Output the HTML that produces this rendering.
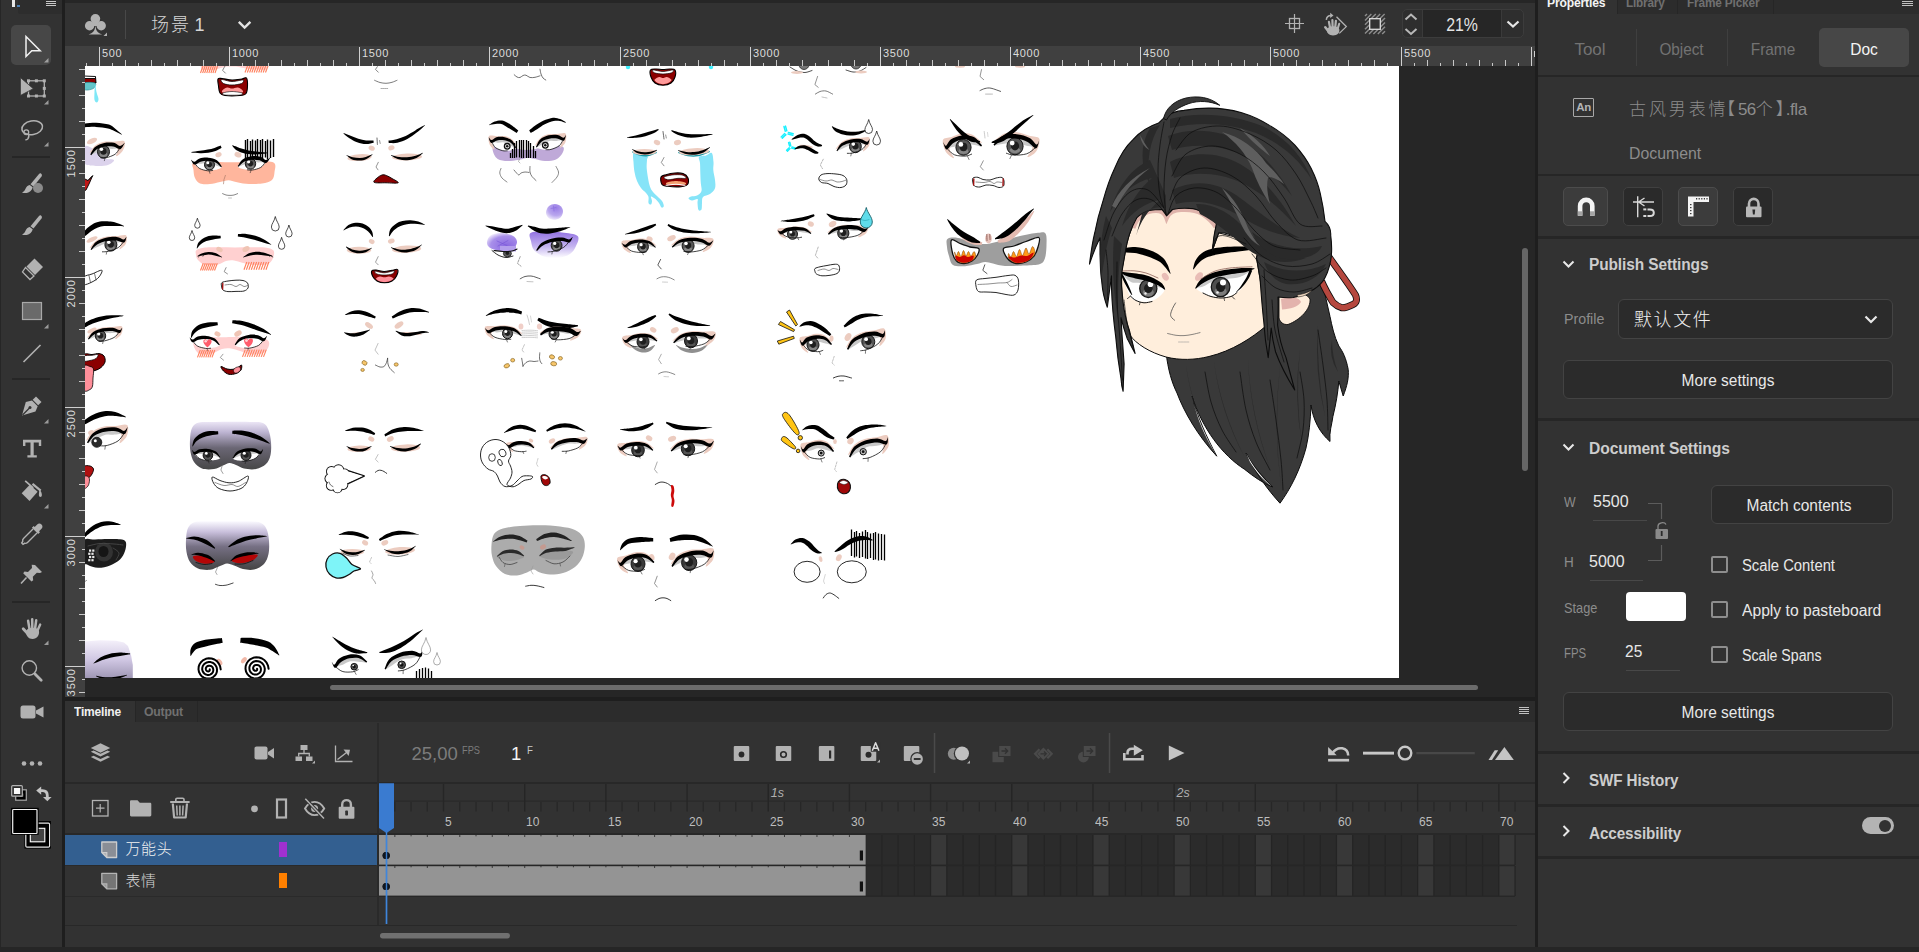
<!DOCTYPE html>
<html lang="en"><head><meta charset="utf-8"><title>Animate</title>
<style>
html,body{margin:0;padding:0;background:#262626;}
body{width:1919px;height:952px;overflow:hidden;position:relative;font-family:"Liberation Sans","Noto Sans CJK SC",sans-serif;color:#cfcfcf;}
.a{position:absolute;}
.t{position:absolute;white-space:nowrap;line-height:1;}
svg{position:absolute;overflow:visible;}
.cj{font-family:"Liberation Sans","Noto Sans CJK SC",sans-serif;font-weight:300;margin-top:1px;}
</style></head><body>
<div class="a" style="left:0;top:0;width:62px;height:947px;background:#323232"></div>
<div class="a" style="left:0;top:0;width:1px;height:947px;background:#262626"></div>
<div class="a" style="left:62px;top:0;width:3px;height:947px;background:#1e1e1e"></div>
<div class="a" style="left:18px;top:0;width:44px;height:14px;background:#2d2d2d;border-bottom-left-radius:2px"></div>
<div class="a" style="left:12px;top:0;width:3px;height:7px;background:#e8e8e8"></div><div class="a" style="left:17px;top:5px;width:3px;height:2px;background:#4a7fb5"></div>
<div class="a" style="left:46px;top:1px;width:10px;height:1px;background:#c8c8c8;box-shadow:0 2px 0 #c8c8c8,0 4px 0 #c8c8c8"></div>
<div class="a" style="left:11px;top:25px;width:40px;height:40px;background:#474747;border-radius:5px"></div>
<div class="a" style="left:12px;top:155.5px;width:38px;height:2px;background:#262626"></div>
<div class="a" style="left:12px;top:378px;width:38px;height:2px;background:#262626"></div>
<div class="a" style="left:12px;top:600.5px;width:38px;height:2px;background:#262626"></div>
<svg width="66" height="952" style="left:0;top:0" viewBox="0 0 66 952" fill="none"><path d="M26 36.5V56.5L31.8 50.8H40.2Z" stroke="#f2f2f2" stroke-width="1.5" stroke-linejoin="miter"/><path d="M48.5 58.0V62.5H44.0Z" fill="#a0a0a0"/><rect x="28.500" y="80.800" width="15.800" height="15.200" stroke="#b2b2b2" stroke-width="1.300"/><rect x="27.0" y="79.3" width="3" height="3" fill="#b2b2b2"/><rect x="34.9" y="79.3" width="3" height="3" fill="#b2b2b2"/><rect x="42.8" y="79.3" width="3" height="3" fill="#b2b2b2"/><rect x="42.8" y="86.9" width="3" height="3" fill="#b2b2b2"/><rect x="42.8" y="94.5" width="3" height="3" fill="#b2b2b2"/><rect x="34.9" y="94.5" width="3" height="3" fill="#b2b2b2"/><rect x="27.0" y="94.5" width="3" height="3" fill="#b2b2b2"/><path d="M20.400 77.500V95.500L33.300 88.700Z" fill="#b2b2b2" stroke="#323232" stroke-width=".8"/><path d="M48.5 100.0V104.5H44.0Z" fill="#9a9a9a"/><ellipse cx="32.200" cy="127.800" rx="10.400" ry="6.800" transform="rotate(-10 32.2 127.8)" stroke="#b2b2b2" stroke-width="1.500"/><circle cx="26.300" cy="132.300" r="2.400" stroke="#b2b2b2" stroke-width="1.300"/><path d="M28.300 133.500c.8 2 .6 4-.4 5.300-.7.800-1.600 1.100-2.600 1.100" stroke="#b2b2b2" stroke-width="1.400"/><path d="M48.5 142.0V146.5H44.0Z" fill="#9a9a9a"/><path d="M41 173.500c1 .8 1.200 1.800 .5 3L33.500 186.500 30.500 184.200 39 174c.7-.8 1.400-.9 2-.5Z" fill="#b2b2b2"/><path d="M29.700 185l3 2.300c-.5 3-3 5.200-6 5.700-1.800.3-3.700 0-4.700-.5 2-.8 2.700-1.800 3.500-3.700.8-1.900 2.200-3.300 4.200-3.800Z" fill="#b2b2b2"/><circle cx="38" cy="188" r="5" fill="#8a8a8a"/><path d="M41 215.500c1 .8 1.200 1.800 .5 3L33.500 228.500 30.500 226.200 39 216c.7-.8 1.400-.9 2-.5Z" fill="#b2b2b2"/><path d="M29.700 227l3 2.300c-.5 3-3 5.200-6 5.700-1.800.3-3.700 0-4.700-.5 2-.8 2.700-1.800 3.500-3.700.8-1.900 2.200-3.300 4.200-3.800Z" fill="#b2b2b2"/><path d="M34.500 258.500L43 267 35 275 26.500 266.500Z" fill="#b2b2b2"/><path d="M25.500 267.500L34 276 30 279.500 22.500 272Z" stroke="#b2b2b2" stroke-width="1.3"/><rect x="22.500" y="302.500" width="19" height="17" fill="#6a6a6a" stroke="#a8a8a8" stroke-width="1.2"/><path d="M48.5 324.0V328.5H44.0Z" fill="#9a9a9a"/><path d="M23.500 362L40.500 345" stroke="#b2b2b2" stroke-width="1.6"/><path d="M36 396.500l5.500 5.500-3.300 3.300-5.500-5.500z" fill="#b2b2b2"/><path d="M32 400.500l5.700 5.700-2.200 5.300-13.500 4 3.800-13.500z" fill="#b2b2b2"/><path d="M22.500 415l7-7" stroke="#323232" stroke-width="1.200"/><circle cx="30" cy="407.500" r="1.500" fill="#323232"/><path d="M48.5 419.0V423.5H44.0Z" fill="#9a9a9a"/><path d="M23 439.800H41.200V446H38.800V442.500H33.700V455.300H36.800V457.600H27.400V455.300H30.500V442.500H25.400V446H23Z" fill="#b2b2b2"/><path d="M29.800 484.800L37.600 491.800 29.500 501 21.700 493.200Z" fill="#b2b2b2"/><path d="M25.200 480.800L33.200 487.800" stroke="#b2b2b2" stroke-width="1.700"/><path d="M32.500 483.800l8.200 6.800" stroke="#b2b2b2" stroke-width="2.200"/><path d="M39.600 489.500c1.500 1.800 2.300 4 2.300 5.600 0 1.200-.7 1.900-1.500 1.900s-1.500-.7-1.500-1.900c0-1.500.2-3.600.7-5.600z" fill="#b2b2b2"/><path d="M48.5 504.0V508.5H44.0Z" fill="#9a9a9a"/><path d="M41.500 524.500c1.300 1.300 1.300 3 0 4.300l-2.500 2.500 1 1-1.800 1.800-6.300-6.300 1.800-1.800 1 1 2.500-2.500c1.300-1.300 3-1.300 4.300 0z" fill="#b2b2b2"/><path d="M33 529l-9.500 9.500c-.8.800-1 2-.8 3l-1 1.500 1.300 1.300 1.500-1c1 .2 2.200 0 3-.8L37 533" stroke="#b2b2b2" stroke-width="1.400"/><path d="M32.500 565l7 7-2 1-3.200 -.3-4 4 .4 3.500-1.700 1.300-8.300-8.300 1.300-1.700 3.500.4 4-4-.3-3.200z" fill="#b2b2b2" transform="translate(2.500,0)"/><path d="M26.500 577.500l-5.500 6" stroke="#b2b2b2" stroke-width="1.600"/><path d="M26 631.500C26.500 627 38 626 39 631C39.600 635 37 639 32.500 639C28.500 639 25.800 635.500 26 631.500Z" fill="#b2b2b2"/><path d="M29.5 629L28.1 620.8" stroke="#b2b2b2" stroke-width="2.5" stroke-linecap="round"/><path d="M32.3 628.5L32.2 619.2" stroke="#b2b2b2" stroke-width="2.5" stroke-linecap="round"/><path d="M35 629L36.2 620.3" stroke="#b2b2b2" stroke-width="2.5" stroke-linecap="round"/><path d="M37.3 631L40.2 624.5" stroke="#b2b2b2" stroke-width="2.4" stroke-linecap="round"/><path d="M28 634L23.2 628.8" stroke="#b2b2b2" stroke-width="2.8" stroke-linecap="round"/><path d="M48.5 640.5V645H44.0Z" fill="#9a9a9a"/><circle cx="29.300" cy="668" r="7.200" stroke="#b2b2b2" stroke-width="1.400"/><path d="M35 674.100l6.200 6.200" stroke="#b2b2b2" stroke-width="2.800" stroke-linecap="round"/><rect x="20.500" y="705.500" width="15" height="13" rx="2.500" fill="#b2b2b2"/><path d="M36 710.500l7.500-4v11l-7.500-4z" fill="#b2b2b2"/><circle cx="24" cy="763.500" r="2.300" fill="#b2b2b2"/><circle cx="32" cy="763.500" r="2.300" fill="#b2b2b2"/><circle cx="40" cy="763.500" r="2.300" fill="#b2b2b2"/><rect x="15.700" y="789.800" width="10.600" height="10.400" fill="#000" stroke="#a8a8a8" stroke-width="1.200"/><path d="M19.500 796.500h3.300v-3" stroke="#888" stroke-width=".9"/><rect x="11.700" y="785.600" width="10.600" height="10.600" rx="1" fill="#2a2a2a" stroke="#b4b4b4" stroke-width="1.200"/><rect x="13.900" y="788" width="6.300" height="6" fill="#fafafa"/><path d="M40 790.600h2.500c3 0 4.800 2 4.800 5v2.500" stroke="#c4c4c4" stroke-width="2.800"/><path d="M41.200 786.500v8.200l-5-4.100z" fill="#c4c4c4"/><path d="M43 797h8.600l-4.300 4.200z" fill="#c4c4c4"/><rect x="24.400" y="821" width="26.500" height="27.600" fill="#000"/><rect x="25.800" y="823.200" width="23.800" height="24" rx="1.200" fill="none" stroke="#e6e6e6" stroke-width="1.200"/><rect x="30.300" y="828.300" width="14.500" height="13.500" fill="#444" stroke="#fff" stroke-width="1.100"/><rect x="11.100" y="807.800" width="27.600" height="27" fill="#000"/><rect x="12.700" y="809.500" width="24.300" height="24" rx=".8" fill="#000" stroke="#f2f2f2" stroke-width="1.200"/></svg><div class="a" style="left:65px;top:0;width:1470px;height:3px;background:#262626"></div>
<div class="a" style="left:65px;top:3px;width:1470px;height:43px;background:#323232"></div>
<div class="a" style="left:65px;top:46px;width:1470px;height:20px;background:#404040"></div>
<div class="a" style="left:65px;top:46px;width:20px;height:651px;background:#404040"></div>
<div class="a" style="left:85px;top:66px;width:1450px;height:631px;background:#262626"></div>
<div class="a" style="left:85px;top:66px;width:1313.500px;height:611.500px;background:#fff"></div>
<div class="a" style="left:1535px;top:0;width:3px;height:947px;background:#1e1e1e"></div>
<div class="a" style="left:65px;top:697px;width:1470px;height:3px;background:#1e1e1e"></div>
<div class="a" style="left:330px;top:685px;width:1148px;height:5px;background:#6b6b6b;border-radius:3px"></div>
<div class="a" style="left:1522px;top:248px;width:6px;height:223px;background:#666;border-radius:3px"></div>
<div class="a" style="left:125px;top:10px;width:1px;height:29px;background:#484848"></div>
<div class="t cj" style="left:151px;top:14.500px;font-size:18px;color:#d6d6d6;letter-spacing:2px;word-spacing:-3.500px">场景 1</div>
<div class="a" style="left:1402px;top:9px;width:122px;height:29px;border:1px solid #3c3c3c;border-radius:5px;box-sizing:border-box;background:#2e2e2e"></div>
<div class="a" style="left:1422px;top:10px;width:80px;height:27px;background:#262626;border-left:1px solid #3a3a3a;border-right:1px solid #3a3a3a;box-sizing:border-box"></div>
<div class="t" style="left:1422px;top:16px;width:80px;text-align:center;font-size:18px;color:#e4e4e4;transform:scaleX(.88)">21%</div>
<svg width="1470" height="46" viewBox="65 0 1470 46" style="left:65px;top:0" fill="none"><circle cx="95.400" cy="18.800" r="4.800" fill="#b2b2b2"/><circle cx="89.600" cy="25.700" r="4.700" fill="#b2b2b2"/><circle cx="101.200" cy="25.700" r="4.700" fill="#b2b2b2"/><path d="M93 21.500h4.800l1 4.500h-6.800z" fill="#b2b2b2"/><path d="M95.400 25c.3 5 1.600 7.800 6.800 9.500h-13.600C93.800 32.800 95.100 30 95.400 25z" fill="#b2b2b2"/><path d="M107 32.500v3.500h-3.500z" fill="#b0b0b0"/><path d="M238.800 21.800l5.800 5.800 5.800-5.800" stroke="#e4e4e4" stroke-width="2.400"/><rect x="1289.500" y="18.500" width="10" height="10" stroke="#b2b2b2" stroke-width="1.300"/><path d="M1294.500 14v19M1285 23.500h19" stroke="#b2b2b2" stroke-width="1.200"/><path d="M1326.800 30C1327.300 25.500 1338.500 25 1339.300 29.500C1339.800 33 1337.300 35.400 1333 35.400C1329.200 35.400 1326.600 33 1326.800 30Z" fill="#b2b2b2"/><path d="M1330 27.5L1328.9 21.8" stroke="#b2b2b2" stroke-width="2.2" stroke-linecap="round"/><path d="M1332.6 27L1332.4 20" stroke="#b2b2b2" stroke-width="2.2" stroke-linecap="round"/><path d="M1335.2 27.5L1335.9 20.8" stroke="#b2b2b2" stroke-width="2.2" stroke-linecap="round"/><path d="M1337.6 29L1339.2 23.8" stroke="#b2b2b2" stroke-width="2.1" stroke-linecap="round"/><path d="M1329 32L1325.3 27.2" stroke="#b2b2b2" stroke-width="2.5" stroke-linecap="round"/><path d="M1336.500 16.800l9.800 9.800-7 6.800" stroke="#b2b2b2" stroke-width="1.300"/><path d="M1326.300 19.800c.3-2.800 2.200-4.300 4.800-4.300" stroke="#b2b2b2" stroke-width="1.500"/><path d="M1330.200 12.800l3.300 2.600-3.300 2.600z" fill="#b2b2b2"/><path d="M1365.0 16.0L1367.0 14.0" stroke="#8e8e8e" stroke-width="1.400"/><path d="M1365.0 20.4L1371.4 14.0" stroke="#8e8e8e" stroke-width="1.400"/><path d="M1365.0 24.8L1375.8 14.0" stroke="#8e8e8e" stroke-width="1.400"/><path d="M1365.0 29.2L1380.2 14.0" stroke="#8e8e8e" stroke-width="1.400"/><path d="M1365.0 33.6L1384.6 14.0" stroke="#8e8e8e" stroke-width="1.400"/><path d="M1369.0 34.0L1385.0 18.0" stroke="#8e8e8e" stroke-width="1.400"/><path d="M1373.4 34.0L1385.0 22.4" stroke="#8e8e8e" stroke-width="1.400"/><path d="M1377.8 34.0L1385.0 26.8" stroke="#8e8e8e" stroke-width="1.400"/><path d="M1382.2 34.0L1385.0 31.2" stroke="#8e8e8e" stroke-width="1.400"/><rect x="1369.700" y="18.700" width="10.600" height="10.600" fill="#323232" stroke="#dcdcdc" stroke-width="1.300"/><path d="M1405.500 19.500l5.500-5 5.500 5M1405.500 29l5.500 5 5.500-5" stroke="#b8b8b8" stroke-width="2"/><path d="M1507.500 21.500l5.500 5 5.500-5" stroke="#e6e6e6" stroke-width="2.200"/></svg>
<svg width="1470" height="651" viewBox="65 46 1470 651" style="left:65px;top:46px" shape-rendering="crispEdges"><rect x="86" y="63" width="1" height="3" fill="#c8c8c8"/><rect x="99" y="47" width="1" height="19" fill="#d0d0d0"/><rect x="112" y="63" width="1" height="3" fill="#c8c8c8"/><rect x="125" y="60" width="1" height="6" fill="#c8c8c8"/><rect x="138" y="63" width="1" height="3" fill="#c8c8c8"/><rect x="151" y="60" width="1" height="6" fill="#c8c8c8"/><rect x="164" y="63" width="1" height="3" fill="#c8c8c8"/><rect x="177" y="60" width="1" height="6" fill="#c8c8c8"/><rect x="190" y="63" width="1" height="3" fill="#c8c8c8"/><rect x="203" y="60" width="1" height="6" fill="#c8c8c8"/><rect x="216" y="63" width="1" height="3" fill="#c8c8c8"/><rect x="229" y="47" width="1" height="19" fill="#d0d0d0"/><rect x="242" y="63" width="1" height="3" fill="#c8c8c8"/><rect x="255" y="60" width="1" height="6" fill="#c8c8c8"/><rect x="268" y="63" width="1" height="3" fill="#c8c8c8"/><rect x="281" y="60" width="1" height="6" fill="#c8c8c8"/><rect x="294" y="63" width="1" height="3" fill="#c8c8c8"/><rect x="307" y="60" width="1" height="6" fill="#c8c8c8"/><rect x="320" y="63" width="1" height="3" fill="#c8c8c8"/><rect x="333" y="60" width="1" height="6" fill="#c8c8c8"/><rect x="346" y="63" width="1" height="3" fill="#c8c8c8"/><rect x="359" y="47" width="1" height="19" fill="#d0d0d0"/><rect x="372" y="63" width="1" height="3" fill="#c8c8c8"/><rect x="385" y="60" width="1" height="6" fill="#c8c8c8"/><rect x="398" y="63" width="1" height="3" fill="#c8c8c8"/><rect x="411" y="60" width="1" height="6" fill="#c8c8c8"/><rect x="424" y="63" width="1" height="3" fill="#c8c8c8"/><rect x="437" y="60" width="1" height="6" fill="#c8c8c8"/><rect x="450" y="63" width="1" height="3" fill="#c8c8c8"/><rect x="463" y="60" width="1" height="6" fill="#c8c8c8"/><rect x="476" y="63" width="1" height="3" fill="#c8c8c8"/><rect x="489" y="47" width="1" height="19" fill="#d0d0d0"/><rect x="502" y="63" width="1" height="3" fill="#c8c8c8"/><rect x="515" y="60" width="1" height="6" fill="#c8c8c8"/><rect x="528" y="63" width="1" height="3" fill="#c8c8c8"/><rect x="542" y="60" width="1" height="6" fill="#c8c8c8"/><rect x="555" y="63" width="1" height="3" fill="#c8c8c8"/><rect x="568" y="60" width="1" height="6" fill="#c8c8c8"/><rect x="581" y="63" width="1" height="3" fill="#c8c8c8"/><rect x="594" y="60" width="1" height="6" fill="#c8c8c8"/><rect x="607" y="63" width="1" height="3" fill="#c8c8c8"/><rect x="620" y="47" width="1" height="19" fill="#d0d0d0"/><rect x="633" y="63" width="1" height="3" fill="#c8c8c8"/><rect x="646" y="60" width="1" height="6" fill="#c8c8c8"/><rect x="659" y="63" width="1" height="3" fill="#c8c8c8"/><rect x="672" y="60" width="1" height="6" fill="#c8c8c8"/><rect x="685" y="63" width="1" height="3" fill="#c8c8c8"/><rect x="698" y="60" width="1" height="6" fill="#c8c8c8"/><rect x="711" y="63" width="1" height="3" fill="#c8c8c8"/><rect x="724" y="60" width="1" height="6" fill="#c8c8c8"/><rect x="737" y="63" width="1" height="3" fill="#c8c8c8"/><rect x="750" y="47" width="1" height="19" fill="#d0d0d0"/><rect x="763" y="63" width="1" height="3" fill="#c8c8c8"/><rect x="776" y="60" width="1" height="6" fill="#c8c8c8"/><rect x="789" y="63" width="1" height="3" fill="#c8c8c8"/><rect x="802" y="60" width="1" height="6" fill="#c8c8c8"/><rect x="815" y="63" width="1" height="3" fill="#c8c8c8"/><rect x="828" y="60" width="1" height="6" fill="#c8c8c8"/><rect x="841" y="63" width="1" height="3" fill="#c8c8c8"/><rect x="854" y="60" width="1" height="6" fill="#c8c8c8"/><rect x="867" y="63" width="1" height="3" fill="#c8c8c8"/><rect x="880" y="47" width="1" height="19" fill="#d0d0d0"/><rect x="893" y="63" width="1" height="3" fill="#c8c8c8"/><rect x="906" y="60" width="1" height="6" fill="#c8c8c8"/><rect x="919" y="63" width="1" height="3" fill="#c8c8c8"/><rect x="932" y="60" width="1" height="6" fill="#c8c8c8"/><rect x="945" y="63" width="1" height="3" fill="#c8c8c8"/><rect x="958" y="60" width="1" height="6" fill="#c8c8c8"/><rect x="971" y="63" width="1" height="3" fill="#c8c8c8"/><rect x="984" y="60" width="1" height="6" fill="#c8c8c8"/><rect x="997" y="63" width="1" height="3" fill="#c8c8c8"/><rect x="1010" y="47" width="1" height="19" fill="#d0d0d0"/><rect x="1023" y="63" width="1" height="3" fill="#c8c8c8"/><rect x="1036" y="60" width="1" height="6" fill="#c8c8c8"/><rect x="1049" y="63" width="1" height="3" fill="#c8c8c8"/><rect x="1062" y="60" width="1" height="6" fill="#c8c8c8"/><rect x="1075" y="63" width="1" height="3" fill="#c8c8c8"/><rect x="1088" y="60" width="1" height="6" fill="#c8c8c8"/><rect x="1101" y="63" width="1" height="3" fill="#c8c8c8"/><rect x="1114" y="60" width="1" height="6" fill="#c8c8c8"/><rect x="1127" y="63" width="1" height="3" fill="#c8c8c8"/><rect x="1140" y="47" width="1" height="19" fill="#d0d0d0"/><rect x="1153" y="63" width="1" height="3" fill="#c8c8c8"/><rect x="1166" y="60" width="1" height="6" fill="#c8c8c8"/><rect x="1179" y="63" width="1" height="3" fill="#c8c8c8"/><rect x="1192" y="60" width="1" height="6" fill="#c8c8c8"/><rect x="1205" y="63" width="1" height="3" fill="#c8c8c8"/><rect x="1218" y="60" width="1" height="6" fill="#c8c8c8"/><rect x="1231" y="63" width="1" height="3" fill="#c8c8c8"/><rect x="1244" y="60" width="1" height="6" fill="#c8c8c8"/><rect x="1257" y="63" width="1" height="3" fill="#c8c8c8"/><rect x="1270" y="47" width="1" height="19" fill="#d0d0d0"/><rect x="1283" y="63" width="1" height="3" fill="#c8c8c8"/><rect x="1296" y="60" width="1" height="6" fill="#c8c8c8"/><rect x="1309" y="63" width="1" height="3" fill="#c8c8c8"/><rect x="1322" y="60" width="1" height="6" fill="#c8c8c8"/><rect x="1335" y="63" width="1" height="3" fill="#c8c8c8"/><rect x="1348" y="60" width="1" height="6" fill="#c8c8c8"/><rect x="1361" y="63" width="1" height="3" fill="#c8c8c8"/><rect x="1374" y="60" width="1" height="6" fill="#c8c8c8"/><rect x="1387" y="63" width="1" height="3" fill="#c8c8c8"/><rect x="1401" y="47" width="1" height="19" fill="#d0d0d0"/><rect x="1414" y="63" width="1" height="3" fill="#c8c8c8"/><rect x="1427" y="60" width="1" height="6" fill="#c8c8c8"/><rect x="1440" y="63" width="1" height="3" fill="#c8c8c8"/><rect x="1453" y="60" width="1" height="6" fill="#c8c8c8"/><rect x="1466" y="63" width="1" height="3" fill="#c8c8c8"/><rect x="1479" y="60" width="1" height="6" fill="#c8c8c8"/><rect x="1492" y="63" width="1" height="3" fill="#c8c8c8"/><rect x="1505" y="60" width="1" height="6" fill="#c8c8c8"/><rect x="1518" y="63" width="1" height="3" fill="#c8c8c8"/><rect x="1531" y="47" width="1" height="19" fill="#d0d0d0"/><rect x="79" y="69" width="6" height="1" fill="#c8c8c8"/><rect x="82" y="82" width="3" height="1" fill="#c8c8c8"/><rect x="79" y="95" width="6" height="1" fill="#c8c8c8"/><rect x="82" y="108" width="3" height="1" fill="#c8c8c8"/><rect x="79" y="121" width="6" height="1" fill="#c8c8c8"/><rect x="82" y="134" width="3" height="1" fill="#c8c8c8"/><rect x="65" y="147" width="20" height="1" fill="#d0d0d0"/><rect x="82" y="160" width="3" height="1" fill="#c8c8c8"/><rect x="79" y="173" width="6" height="1" fill="#c8c8c8"/><rect x="82" y="186" width="3" height="1" fill="#c8c8c8"/><rect x="79" y="199" width="6" height="1" fill="#c8c8c8"/><rect x="82" y="212" width="3" height="1" fill="#c8c8c8"/><rect x="79" y="225" width="6" height="1" fill="#c8c8c8"/><rect x="82" y="238" width="3" height="1" fill="#c8c8c8"/><rect x="79" y="251" width="6" height="1" fill="#c8c8c8"/><rect x="82" y="264" width="3" height="1" fill="#c8c8c8"/><rect x="65" y="277" width="20" height="1" fill="#d0d0d0"/><rect x="82" y="290" width="3" height="1" fill="#c8c8c8"/><rect x="79" y="303" width="6" height="1" fill="#c8c8c8"/><rect x="82" y="316" width="3" height="1" fill="#c8c8c8"/><rect x="79" y="329" width="6" height="1" fill="#c8c8c8"/><rect x="82" y="342" width="3" height="1" fill="#c8c8c8"/><rect x="79" y="355" width="6" height="1" fill="#c8c8c8"/><rect x="82" y="368" width="3" height="1" fill="#c8c8c8"/><rect x="79" y="381" width="6" height="1" fill="#c8c8c8"/><rect x="82" y="394" width="3" height="1" fill="#c8c8c8"/><rect x="65" y="407" width="20" height="1" fill="#d0d0d0"/><rect x="82" y="419" width="3" height="1" fill="#c8c8c8"/><rect x="79" y="432" width="6" height="1" fill="#c8c8c8"/><rect x="82" y="445" width="3" height="1" fill="#c8c8c8"/><rect x="79" y="458" width="6" height="1" fill="#c8c8c8"/><rect x="82" y="471" width="3" height="1" fill="#c8c8c8"/><rect x="79" y="484" width="6" height="1" fill="#c8c8c8"/><rect x="82" y="497" width="3" height="1" fill="#c8c8c8"/><rect x="79" y="510" width="6" height="1" fill="#c8c8c8"/><rect x="82" y="523" width="3" height="1" fill="#c8c8c8"/><rect x="65" y="536" width="20" height="1" fill="#d0d0d0"/><rect x="82" y="549" width="3" height="1" fill="#c8c8c8"/><rect x="79" y="562" width="6" height="1" fill="#c8c8c8"/><rect x="82" y="575" width="3" height="1" fill="#c8c8c8"/><rect x="79" y="588" width="6" height="1" fill="#c8c8c8"/><rect x="82" y="601" width="3" height="1" fill="#c8c8c8"/><rect x="79" y="614" width="6" height="1" fill="#c8c8c8"/><rect x="82" y="627" width="3" height="1" fill="#c8c8c8"/><rect x="79" y="640" width="6" height="1" fill="#c8c8c8"/><rect x="82" y="653" width="3" height="1" fill="#c8c8c8"/><rect x="65" y="666" width="20" height="1" fill="#d0d0d0"/><rect x="82" y="679" width="3" height="1" fill="#c8c8c8"/><rect x="79" y="692" width="6" height="1" fill="#c8c8c8"/><rect x="1534" y="51" width="1" height="6" fill="#d0d0d0"/></svg>
<div class="t" style="left:102px;top:48px;font-size:11px;color:#dcdcdc;letter-spacing:.6px">500</div>
<div class="t" style="left:232px;top:48px;font-size:11px;color:#dcdcdc;letter-spacing:.6px">1000</div>
<div class="t" style="left:362px;top:48px;font-size:11px;color:#dcdcdc;letter-spacing:.6px">1500</div>
<div class="t" style="left:492px;top:48px;font-size:11px;color:#dcdcdc;letter-spacing:.6px">2000</div>
<div class="t" style="left:623px;top:48px;font-size:11px;color:#dcdcdc;letter-spacing:.6px">2500</div>
<div class="t" style="left:753px;top:48px;font-size:11px;color:#dcdcdc;letter-spacing:.6px">3000</div>
<div class="t" style="left:883px;top:48px;font-size:11px;color:#dcdcdc;letter-spacing:.6px">3500</div>
<div class="t" style="left:1013px;top:48px;font-size:11px;color:#dcdcdc;letter-spacing:.6px">4000</div>
<div class="t" style="left:1143px;top:48px;font-size:11px;color:#dcdcdc;letter-spacing:.6px">4500</div>
<div class="t" style="left:1273px;top:48px;font-size:11px;color:#dcdcdc;letter-spacing:.6px">5000</div>
<div class="t" style="left:1404px;top:48px;font-size:11px;color:#dcdcdc;letter-spacing:.6px">5500</div>
<div class="t" style="left:66px;top:148.5px;font-size:11px;color:#dcdcdc;letter-spacing:1px;transform-origin:0 0;transform:rotate(-90deg) translate(-100%,0)">1500</div>
<div class="t" style="left:66px;top:278.5px;font-size:11px;color:#dcdcdc;letter-spacing:1px;transform-origin:0 0;transform:rotate(-90deg) translate(-100%,0)">2000</div>
<div class="t" style="left:66px;top:408.5px;font-size:11px;color:#dcdcdc;letter-spacing:1px;transform-origin:0 0;transform:rotate(-90deg) translate(-100%,0)">2500</div>
<div class="t" style="left:66px;top:537.5px;font-size:11px;color:#dcdcdc;letter-spacing:1px;transform-origin:0 0;transform:rotate(-90deg) translate(-100%,0)">3000</div>
<div class="t" style="left:66px;top:667.5px;font-size:11px;color:#dcdcdc;letter-spacing:1px;transform-origin:0 0;transform:rotate(-90deg) translate(-100%,0)">3500</div><svg width="1313.500" height="611.500" viewBox="85 66 1313.500 611.500" style="left:85px;top:66px;overflow:hidden" fill="none">
<path d="M84 76.5L95.5 77L96 83L84 83Z" fill="#8b0000" stroke="#000" stroke-width="1" stroke-linejoin="round"/><path d="M84 76L95.5 76.5L95.5 78.5L84 78.5Z" fill="#fff" stroke="#000" stroke-width="0.9" stroke-linejoin="round"/><path d="M84 83C85.8 82 93.3 82.2 95 83C96.7 83.8 95.2 86.8 94 88C92.8 89.2 89.7 89.8 88 90C86.3 90.2 84.7 90.2 84 89C83.3 87.8 82.2 84 84 83Z" fill="#63c5c9" stroke="#2a8a8f" stroke-width="0.6" stroke-linejoin="round"/><path d="M95.2 84C95.5 84 96 89.5 96.5 92C97 94.5 98.4 97.2 98.5 99C98.6 100.8 97.7 102.3 97 102.5C96.3 102.7 94.9 101.8 94.5 100C94.1 98.2 94.4 94.7 94.5 92C94.6 89.3 94.9 84 95.2 84Z" fill="#7fe8f7"/><path d="M198 60L270 60L266 70L248 69L236 66.5L226 66.5L214 70L202 70Z" fill="#ffd3d3"/><path d="M203 66L200.5 73" stroke="#ff7f5c" stroke-width="1.1"/><path d="M205.1 66L202.6 73" stroke="#ff7f5c" stroke-width="1.1"/><path d="M207.1 66L204.6 73" stroke="#ff7f5c" stroke-width="1.1"/><path d="M209.2 66L206.7 73" stroke="#ff7f5c" stroke-width="1.1"/><path d="M211.3 66L208.8 73" stroke="#ff7f5c" stroke-width="1.1"/><path d="M213.4 66L210.9 73" stroke="#ff7f5c" stroke-width="1.1"/><path d="M215.4 66L212.9 73" stroke="#ff7f5c" stroke-width="1.1"/><path d="M217.5 66L215 73" stroke="#ff7f5c" stroke-width="1.1"/><path d="M247.5 66L245 72.5" stroke="#ff7f5c" stroke-width="1.1"/><path d="M249.8 66L247.3 72.5" stroke="#ff7f5c" stroke-width="1.1"/><path d="M252.1 66L249.6 72.5" stroke="#ff7f5c" stroke-width="1.1"/><path d="M254.3 66L251.8 72.5" stroke="#ff7f5c" stroke-width="1.1"/><path d="M256.6 66L254.1 72.5" stroke="#ff7f5c" stroke-width="1.1"/><path d="M258.9 66L256.4 72.5" stroke="#ff7f5c" stroke-width="1.1"/><path d="M261.2 66L258.7 72.5" stroke="#ff7f5c" stroke-width="1.1"/><path d="M263.4 66L260.9 72.5" stroke="#ff7f5c" stroke-width="1.1"/><path d="M265.7 66L263.2 72.5" stroke="#ff7f5c" stroke-width="1.1"/><path d="M268 66L265.5 72.5" stroke="#ff7f5c" stroke-width="1.1"/><path d="M225 66L222.6 70.3L225.4 73.1" stroke="#555" stroke-width="0.7" stroke-linecap="round" stroke-linejoin="round" fill="none"/><path d="M218 79C218.6 77.8 219.7 78.3 222 78.5C224.3 78.7 228.7 79.9 232 80C235.3 80.1 239.6 79.3 242 79C244.4 78.7 245.6 76.8 246.5 78C247.4 79.2 247.6 83.4 247.5 86C247.4 88.6 247.2 91.9 246 93.5C244.8 95.1 243.5 95.2 240 95.5C236.5 95.8 228.3 95.9 225 95.5C221.7 95.1 221.1 94.6 220 93C218.9 91.4 218.8 88.3 218.5 86C218.2 83.7 217.4 80.2 218 79Z" fill="#8b0000" stroke="#000" stroke-width="1.1" stroke-linejoin="round"/><path d="M221.5 79.5C222.9 79.2 228.4 81.4 232 81.5C235.6 81.6 241.4 79.7 243 80C244.6 80.3 243.3 82.7 241.5 83.5C239.7 84.3 235 85 232 85C229 85 225.2 84.4 223.5 83.5C221.8 82.6 220.1 79.8 221.5 79.5Z" fill="#fff" stroke="#000" stroke-width="0.7" stroke-linejoin="round"/><path d="M222 91C222.3 90.1 225.3 87.9 227 87.5C228.7 87.1 230.2 88.5 232 88.5C233.8 88.5 236.2 87.1 238 87.5C239.8 87.9 242.7 90.1 243 91C243.3 91.9 243 92.7 240 93C237 93.3 228 93.3 225 93C222 92.7 221.7 91.9 222 91Z" fill="#ff9a9a"/><path d="M223 93C224.2 92.4 228.8 91.5 232 91.5C235.2 91.5 240.7 92.4 242 93C243.3 93.6 242.8 94.7 240 95C237.2 95.3 227.8 95.3 225 95C222.2 94.7 221.8 93.6 223 93Z" fill="#fff" stroke="#000" stroke-width="0.6" stroke-linejoin="round"/><path d="M377.4 66.6L375.5 69.4L378.3 72.2" stroke="#555" stroke-width="0.7" stroke-linecap="round" stroke-linejoin="round" fill="none"/><path d="M374.6 80.3C375.5 80.7 378.1 82 380 82.5C381.9 83 384 83.3 386 83.3C388 83.3 390.2 82.8 392 82.3C393.8 81.8 396.2 80.6 397 80.3" stroke="#444" stroke-width="0.7" stroke-linecap="round" fill="none"/><path d="M381 88.5C382.1 88.5 386.6 88.5 387.7 88.5" stroke="#888" stroke-width="0.7" stroke-linecap="round" fill="none"/><path d="M514.2 74.7C514.7 75.1 516 76.5 517 77C518 77.5 519 77.8 520 77.5C521 77.2 522 75.9 523 75.5C524 75.1 524.8 74.9 526 75.2C527.2 75.5 528.5 77.2 530 77.5C531.5 77.8 533.3 77.6 535 77.3C536.7 77 539.2 76 540 75.8" stroke="#333" stroke-width="0.7" stroke-linecap="round" fill="none"/><path d="M540 69.2C540.2 70 540.5 72.5 541 74C541.5 75.5 542.2 77 543 78C543.8 79 545.3 79.7 545.8 80" stroke="#333" stroke-width="0.7" stroke-linecap="round" fill="none"/><ellipse cx="628" cy="67" rx="2.2" ry="2.2" fill="#3ff0ff"/><ellipse cx="711" cy="67" rx="2.2" ry="2.2" fill="#3ff0ff"/><path d="M650.5 70C651.3 68.7 653.9 69.1 656 69C658.1 68.9 660.7 69.5 663 69.5C665.3 69.5 668 68.9 670 69C672 69.1 674.2 68.7 675 70C675.8 71.3 675.7 74.8 675 77C674.3 79.2 673 81.6 671 83C669 84.4 665.7 85.2 663 85.2C660.3 85.2 657 84.4 655 83C653 81.6 651.8 79.2 651 77C650.2 74.8 649.7 71.3 650.5 70Z" fill="#8b0000" stroke="#000" stroke-width="1.1" stroke-linejoin="round"/><path d="M653 70C654.4 69.8 659.7 71.5 663 71.5C666.3 71.5 671.6 69.8 673 70C674.4 70.2 673.2 72.1 671.5 72.8C669.8 73.5 665.8 74 663 74C660.2 74 656.2 73.5 654.5 72.8C652.8 72.1 651.6 70.2 653 70Z" fill="#fff" stroke="#000" stroke-width="0.6" stroke-linejoin="round"/><path d="M654.5 80C654.7 79 657.6 77.3 659 77C660.4 76.7 661.7 78 663 78C664.3 78 665.6 76.7 667 77C668.4 77.3 671.3 79 671.5 80C671.7 81 669.4 82.3 668 83C666.6 83.7 664.7 84.2 663 84.2C661.3 84.2 659.4 83.7 658 83C656.6 82.3 654.3 81 654.5 80Z" fill="#ff9a9a"/><ellipse cx="804" cy="64.5" rx="5" ry="5" fill="#777" stroke="#222" stroke-width="0.8"/><ellipse cx="856" cy="64" rx="5" ry="5" fill="#777" stroke="#222" stroke-width="0.8"/><path d="M790 67C791.2 67.7 794.5 70.1 797 71C799.5 71.9 802.5 72.6 805 72.5C807.5 72.4 810.8 70.8 812 70.5" stroke="#222" stroke-width="0.8" stroke-linecap="round" fill="none"/><path d="M846 70C847.2 70.3 850.7 71.8 853 72C855.3 72.2 857.8 71.8 860 71C862.2 70.2 865 68.1 866 67.5" stroke="#222" stroke-width="0.8" stroke-linecap="round" fill="none"/><ellipse cx="797" cy="72.5" rx="6" ry="1.5" fill="#ecccc0"/><ellipse cx="861" cy="72" rx="6" ry="1.5" fill="#ecccc0"/><path d="M817.6 76.4L814.9 84.6L818.2 87.3" stroke="#666" stroke-width="0.7" stroke-linecap="round" stroke-linejoin="round" fill="none"/><path d="M815.4 94.1C816.2 93.7 818.2 92 820 91.5C821.8 91 823.9 90.6 826 91C828.1 91.4 831.5 93.6 832.6 94.1" stroke="#444" stroke-width="0.7" stroke-linecap="round" fill="none"/><path d="M822 97C822.8 97.2 826.2 97.8 827 98" stroke="#999" stroke-width="0.6" stroke-linecap="round" fill="none"/><ellipse cx="960" cy="66.5" rx="5" ry="1.2" fill="#ecccc0"/><ellipse cx="1020" cy="66.5" rx="5" ry="1.2" fill="#ecccc0"/><path d="M981.5 69.6L980 76.4L983.7 79.7" stroke="#666" stroke-width="0.7" stroke-linecap="round" stroke-linejoin="round" fill="none"/><path d="M980 90.6C980.8 90.2 983.2 88.9 985 88.5C986.8 88.1 988.4 87.7 991 88.2C993.6 88.7 999 90.9 1000.6 91.4" stroke="#333" stroke-width="0.8" stroke-linecap="round" fill="none"/><path d="M985.6 94.1C986.7 94.1 991.3 94.1 992.4 94.1" stroke="#888" stroke-width="0.6" stroke-linecap="round" fill="none"/><path d="M84 147C85.3 144.5 88.7 146.2 92 148C95.3 149.8 100.3 156 104 158C107.7 160 113.3 158.8 114 160C114.7 161.2 111 164 108 165C105 166 100 166.3 96 166C92 165.7 86 166.2 84 163C82 159.8 82.7 149.5 84 147Z" fill="#dcd3ec"/><path d="M83.9 123.7C85.9 123.5 91.9 122.6 96.1 122.7C100.3 122.9 105.8 123.6 109 124.6C112.3 125.7 113.4 127.4 115.6 129.1C117.7 130.7 120.8 133.5 121.8 134.3L121.6 134.7C120.4 134 116.7 132 114.4 130.9C112.2 129.9 111.1 129.1 108 128.4C104.9 127.7 99.9 127 95.9 126.9C91.9 126.7 86.1 127.3 84.1 127.3Z" fill="#000"/><ellipse cx="92" cy="141" rx="5.5" ry="2.6" fill="#ecccc0" transform="rotate(-25 92 141)"/><path d="M89.6 153.1C89.5 152.5 93.1 147.2 95.5 145.3C98 143.4 101.2 142.4 104.1 141.8C107.1 141.3 109.9 141.9 113.2 141.8C116.6 141.7 122.6 139.9 124.3 141.3C125.9 142.7 124.4 147.8 123 150.3C121.7 152.8 117.1 156.6 116.2 156.3C115.2 156 119.1 150.4 117.2 148.6C115.3 146.8 108.2 145.2 104.6 145.3C101.1 145.4 98.6 147.7 96.1 149C93.6 150.3 89.7 153.7 89.6 153.1Z" fill="#ecccc0"/><path d="M90.8 154.8C90.7 154.1 93.6 149.7 95.9 148C98.2 146.4 101.6 145.3 104.5 144.7C107.5 144.1 111 144.2 113.6 144.7C116.2 145.2 120.2 146.8 120.1 147.6C119.9 148.3 115.2 148.8 112.7 149C110.2 149.2 107.8 148.2 105.1 148.8C102.4 149.4 98.9 151.5 96.6 152.5C94.2 153.5 90.9 155.6 90.8 154.8Z" fill="#c8c8c8"/><ellipse cx="103.5" cy="151.7" rx="6" ry="6.4" fill="#555555" stroke="#161616" stroke-width="1.0"/><ellipse cx="103.5" cy="154.7" rx="3.9" ry="2.2" fill="#868686"/><ellipse cx="103.5" cy="151.4" rx="3" ry="3.3" fill="#1e1e1e"/><ellipse cx="101.4" cy="149.2" rx="1.8" ry="1.8" fill="#fff"/><path d="M90.3 154.4C91.1 153.2 92.7 148.8 95.1 146.9C97.4 144.9 101 143.6 104.2 142.9C107.4 142.2 111.4 142.3 114 142.8C116.6 143.3 118.1 145.9 119.9 145.9C121.6 146 123.7 143.5 124.4 143L124.6 143.3C123.9 144.2 122.2 148.6 120.3 149.2C118.4 149.7 115.9 147 113.3 146.6C110.7 146.1 107.6 146 104.9 146.5C102.1 146.9 99.1 147.8 96.8 149.2C94.5 150.7 92.2 154.2 91.3 155.2Z" fill="#000"/><path d="M119.3 148.9C118.6 149.8 117.1 152.9 115 154.3C112.8 155.8 108.7 157.1 106.4 157.7C104 158.3 101.8 157.8 100.9 157.8" stroke="#111" stroke-width="0.8" stroke-linecap="round" fill="none"/><path d="M104.9 157.9C104.8 158.4 104.5 160.3 104.4 160.7" stroke="#222" stroke-width="0.6" stroke-linecap="round" fill="none"/><path d="M84 178.5L88 180.5L92.5 176L89 184L86 190L84 191Z" fill="#c01818" stroke="#000" stroke-width="0.9" stroke-linejoin="round"/><path d="M88 180.5C88.8 179.7 92 176.3 92.8 175.5" stroke="#000" stroke-width="1" stroke-linecap="round" fill="none"/><path d="M194 162.5C197.6 161.2 208.3 162 215 162C221.7 162 227.3 162.3 234 162.3C240.7 162.3 248.4 162 255 162C261.6 162 270.2 160.8 273.5 162.5C276.8 164.2 274.8 169.1 274.5 172C274.2 174.9 274.1 178.1 272 180C269.9 181.9 266.3 182.9 262 183.5C257.7 184.1 250.3 184.1 246 183.8C241.7 183.6 238.9 182.6 236 182C233.1 181.4 231.2 180.3 228.5 180.3C225.8 180.3 223.1 181.4 220 182C216.9 182.6 213.3 183.8 210 184C206.7 184.2 202.5 184.5 200 183.5C197.5 182.5 196.1 180.2 195 178C193.9 175.8 193.7 172.6 193.5 170C193.3 167.4 190.4 163.8 194 162.5Z" fill="#ffb69d"/><ellipse cx="218.5" cy="154.7" rx="3.2" ry="2.4" fill="#ecccc0" transform="rotate(-20 218.5 154.7)"/><ellipse cx="238" cy="154.7" rx="3.6" ry="2.6" fill="#ecccc0" transform="rotate(20 238 154.7)"/><path d="M221.5 166.9C221.5 165.5 218.4 162.7 216.2 161.4C214 160.1 210.9 159.5 208.2 159.3C205.5 159 202.4 159.4 200.1 160.1C197.8 160.7 194.6 161.8 194.6 163.2C194.5 164.6 197.6 167.3 199.8 168.5C202 169.8 205.1 170.4 207.8 170.6C210.5 170.8 213.7 170.4 215.9 169.8C218.2 169.1 221.4 168.3 221.5 166.9Z" fill="#fff"/><path d="M221.5 166.9C221.5 166.2 218.4 162.7 216.2 161.4C214 160.1 210.9 159.5 208.2 159.3C205.5 159 202.4 159.4 200.1 160.1C197.8 160.7 194.4 162.6 194.6 163.2C194.8 163.8 199 163.8 201.3 163.7C203.6 163.7 205.6 162.6 208.1 162.9C210.6 163.2 213.9 164.7 216.1 165.4C218.3 166 221.4 167.5 221.5 166.9Z" fill="#c8c8c8"/><ellipse cx="209.5" cy="164.8" rx="5" ry="5.2" fill="#555555" stroke="#161616" stroke-width="1.0"/><ellipse cx="209.5" cy="167.3" rx="3.2" ry="1.8" fill="#868686"/><ellipse cx="209.5" cy="164.6" rx="2.5" ry="2.7" fill="#1e1e1e"/><ellipse cx="207.8" cy="162.8" rx="1.5" ry="1.5" fill="#fff"/><path d="M221.1 167.2C220.2 166.4 217.8 163.6 215.6 162.5C213.4 161.4 210.6 161 208.1 160.8C205.6 160.7 202.8 161 200.5 161.7C198.3 162.3 196.1 164.9 194.5 164.6C192.9 164.3 191.6 160.7 191.1 159.9L191.3 159.7C191.8 160 193.2 162 194.6 161.8C196 161.6 197.3 159.2 199.6 158.5C201.9 157.8 205.5 157.4 208.3 157.7C211.2 158 214.6 158.8 216.9 160.3C219.1 161.8 221 165.5 221.8 166.6Z" fill="#000"/><path d="M195.5 164.3C196.2 165 197.7 167.6 199.8 168.6C201.8 169.7 205.7 170.5 207.8 170.8C210 171.1 211.9 170.5 212.7 170.4" stroke="#111" stroke-width="0.8" stroke-linecap="round" fill="none"/><path d="M209.2 170.8C209.3 171.3 209.8 172.9 209.9 173.3" stroke="#222" stroke-width="0.6" stroke-linecap="round" fill="none"/><path d="M238.1 166.4C238 165 241.1 161.9 243.3 160.5C245.6 159.1 248.8 158.3 251.6 158C254.3 157.7 257.6 157.9 260 158.6C262.4 159.2 265.7 160.1 265.8 161.6C265.9 163.1 262.9 166 260.6 167.4C258.4 168.8 255.2 169.5 252.4 169.8C249.6 170.1 246.3 169.8 243.9 169.2C241.5 168.7 238.2 167.9 238.1 166.4Z" fill="#fff"/><path d="M238.1 166.4C238.1 165.7 241.1 161.9 243.3 160.5C245.6 159.1 248.8 158.3 251.6 158C254.3 157.7 257.6 157.9 260 158.6C262.4 159.2 266 161 265.8 161.6C265.7 162.2 261.2 162.4 258.9 162.4C256.5 162.5 254.4 161.4 251.8 161.8C249.3 162.1 245.9 163.9 243.6 164.7C241.3 165.4 238.2 167.1 238.1 166.4Z" fill="#c8c8c8"/><ellipse cx="250.5" cy="163.8" rx="5.2" ry="5.4" fill="#555555" stroke="#161616" stroke-width="1.0"/><ellipse cx="250.5" cy="166.4" rx="3.4" ry="1.9" fill="#868686"/><ellipse cx="250.5" cy="163.6" rx="2.6" ry="2.9" fill="#1e1e1e"/><ellipse cx="248.6" cy="161.8" rx="1.6" ry="1.6" fill="#fff"/><path d="M237.7 166.1C238.6 165 240.3 161 242.6 159.4C244.9 157.7 248.4 156.7 251.4 156.3C254.3 155.9 258.1 156.2 260.5 156.8C262.9 157.4 264.1 159.9 265.7 160.1C267.3 160.2 269.3 158.1 270 157.7L270.2 158C269.5 158.8 267.7 162.7 266 163.1C264.2 163.5 261.9 160.9 259.6 160.3C257.2 159.7 254.3 159.5 251.8 159.7C249.2 159.9 246.3 160.5 244 161.7C241.8 162.9 239.4 165.9 238.5 166.7Z" fill="#000"/><path d="M264.9 162.8C264.2 163.6 262.7 166.3 260.6 167.5C258.6 168.7 254.6 169.7 252.4 170C250.2 170.4 248.2 169.9 247.3 169.8" stroke="#111" stroke-width="0.8" stroke-linecap="round" fill="none"/><path d="M251 170.1C250.9 170.6 250.5 172.3 250.3 172.7" stroke="#222" stroke-width="0.6" stroke-linecap="round" fill="none"/><path d="M191.3 152.1C192.7 151.8 197.2 151.2 199.9 150.8C202.7 150.4 205.3 150.1 207.7 149.6C210.2 149.2 212.3 148.6 214.5 147.9C216.6 147.3 219.6 146 220.6 145.6L221.6 147.8C220.6 148.4 217.8 150.2 215.5 151.1C213.3 151.9 210.8 152.4 208.3 152.8C205.7 153.1 202.9 153.3 200.1 153.2C197.3 153.2 192.8 152.7 191.3 152.5Z" fill="#000"/><path d="M232.5 145.2C233.2 145.4 235.4 146.2 236.8 146.7C238.1 147.3 238.7 147.7 240.6 148.3C242.5 148.9 245.4 149.8 248.3 150.4C251.2 151 254.8 151.3 258 151.7C261.3 152 266 152.4 267.6 152.5L267.6 153.3C266 153.5 261.3 154.2 258 154.3C254.6 154.5 250.8 154.4 247.7 154C244.6 153.6 241.5 152.5 239.4 151.7C237.3 150.9 236.5 150.3 235.2 149.3C234 148.2 232.6 146.2 232.1 145.6Z" fill="#000"/><path d="M245.5 140V158" stroke="#000" stroke-width="1.4"/><path d="M247.5 139V159" stroke="#000" stroke-width="1.4"/><path d="M250.5 141V157.5" stroke="#000" stroke-width="1.4"/><path d="M252.5 139.5V159.5" stroke="#000" stroke-width="1.4"/><path d="M255.5 140.5V158" stroke="#000" stroke-width="1.4"/><path d="M257.5 139V157" stroke="#000" stroke-width="1.4"/><path d="M260.5 140V158" stroke="#000" stroke-width="1.4"/><path d="M262.5 139V159" stroke="#000" stroke-width="1.4"/><path d="M265.5 141V157.5" stroke="#000" stroke-width="1.4"/><path d="M267.5 139.5V159.5" stroke="#000" stroke-width="1.4"/><path d="M270.5 140.5V158" stroke="#000" stroke-width="1.4"/><path d="M273.5 139V157" stroke="#000" stroke-width="1.4"/><path d="M225.4 175.4L224 179.5L223.5 183.8" stroke="#a07060" stroke-width="0.6" stroke-linecap="round" stroke-linejoin="round" fill="none"/><path d="M222.6 193.6C223.2 193.8 224.8 194.7 226 195C227.2 195.3 228.7 195.4 230 195.4C231.3 195.4 232.7 195.3 234 195C235.3 194.7 237 193.8 237.6 193.6" stroke="#555" stroke-width="0.7" stroke-linecap="round" fill="none"/><path d="M228.5 198C229 198 231 198 231.5 198" stroke="#999" stroke-width="0.6" stroke-linecap="round" fill="none"/><path d="M343.7 133C344.9 133.5 348.2 134.8 350.6 135.8C353 136.8 355.7 138 358.3 138.8C360.9 139.5 363.6 140.2 366.1 140.5C368.7 140.7 372.3 140.4 373.5 140.4L373.7 142.8C372.4 143 368.6 144.2 365.9 144.1C363.1 144 359.9 143.2 357.1 142.2C354.4 141.2 351.7 139.7 349.4 138.2C347.1 136.7 344.5 134.2 343.5 133.4Z" fill="#000"/><path d="M388.5 140.6C389.8 140.4 393.7 140 396.6 139.2C399.4 138.4 402.6 137.3 405.7 135.9C408.8 134.4 412.1 132.2 415.3 130.4C418.4 128.6 423.1 126 424.7 125.1L424.9 125.5C423.6 126.7 419.7 130.3 416.7 132.6C413.8 134.9 410.5 137.4 407.3 139.1C404.1 140.8 400.5 142.1 397.4 142.8C394.3 143.4 390.2 143 388.7 143Z" fill="#000"/><path d="M377 138C377.1 139.1 377.3 143.3 377.4 144.4" stroke="#444" stroke-width="0.8" stroke-linecap="round" fill="none"/><path d="M379.6 140.5C379.7 141 380.1 143 380.2 143.5" stroke="#666" stroke-width="0.7" stroke-linecap="round" fill="none"/><ellipse cx="371.7" cy="148.2" rx="3.2" ry="2.4" fill="#ecccc0" transform="rotate(20 371.7 148.2)"/><ellipse cx="391.4" cy="147.8" rx="3.2" ry="2.4" fill="#ecccc0" transform="rotate(-20 391.4 147.8)"/><ellipse cx="359.6" cy="157.6" rx="12.2" ry="3.4" fill="#ecccc0" transform="rotate(-4 359.6 157.6)"/><path d="M372.5 154.7C371.5 155.4 368.7 158 366.5 158.9C364.4 159.9 362.2 160.5 359.8 160.5C357.3 160.6 354.3 160.2 352 159.4C349.8 158.5 347.3 156 346.3 155.3L346.5 155C347.5 155.3 350.5 156.7 352.7 157.2C354.9 157.7 357.5 157.9 359.7 157.9C361.9 157.8 363.7 157.5 365.8 156.9C367.9 156.3 371.2 154.7 372.3 154.2Z" fill="#000"/><ellipse cx="407.1" cy="157" rx="15" ry="3.5" fill="#ecccc0" transform="rotate(-2 407.1 157)"/><path d="M391.1 154.9C392.5 155.3 396.7 156.6 399.3 157C402 157.4 404.3 157.5 407 157.2C409.7 157 413 156.4 415.6 155.7C418.2 154.9 421.6 153.2 422.8 152.7L423 153C421.9 153.9 419.1 156.8 416.5 158C413.8 159.2 410.2 159.9 407.2 160.2C404.3 160.4 401.6 160.1 398.8 159.3C396.1 158.5 392.2 156.1 390.9 155.4Z" fill="#000"/><path d="M378.3 162.3L376 167L378 169.8" stroke="#666" stroke-width="0.7" stroke-linecap="round" stroke-linejoin="round" fill="none"/><path d="M374 182.3C372.7 181.3 376.8 178.2 378.3 177C379.8 175.8 381.5 175 383 174.8C384.5 174.6 386 175.4 387.5 176C389 176.6 390.2 177.4 392 178.5C393.8 179.6 399.2 182.1 398.2 182.8C397.2 183.5 390 182.9 386 182.8C382 182.7 375.3 183.3 374 182.3Z" fill="#8b0000" stroke="#000" stroke-width="0.9" stroke-linejoin="round"/><path d="M493 147C494.5 145.1 499.3 145.5 505 146C510.7 146.5 519.8 150 527 150C534.2 150 542.1 146.6 548 146C553.9 145.4 560.1 145.3 562.5 146.5C564.9 147.7 563.6 150.8 562.5 153C561.4 155.2 558.9 158.2 556 159.5C553.1 160.8 548.5 161.1 545 161C541.5 160.9 538 159.5 535 159C532 158.5 529.8 157.8 527 158C524.2 158.2 521.7 159.5 518 160C514.3 160.5 508.7 161.4 505 161C501.3 160.6 498 159.8 496 157.5C494 155.2 491.5 148.9 493 147Z" fill="#bfa9d8"/><path d="M516.9 146.3C517 145.7 513.9 140.9 511.9 139.2C509.9 137.5 507.2 136.6 504.7 136.1C502.3 135.6 499.8 136.2 497.2 136.2C494.6 136.2 490.4 134.7 489.1 136C487.8 137.3 488.6 141.9 489.5 144.2C490.4 146.4 493.8 149.8 494.5 149.5C495.2 149.3 492.1 144.2 493.8 142.5C495.4 140.8 501.4 139.3 504.3 139.3C507.2 139.3 509.3 141.5 511.4 142.6C513.5 143.8 516.9 146.9 516.9 146.3Z" fill="#ecccc0"/><path d="M515.7 147.9C515.9 146.4 513.4 143.2 511.5 141.7C509.6 140.2 506.8 139.2 504.4 138.7C501.9 138.3 499 138.4 496.8 138.8C494.6 139.3 491.6 140.1 491.4 141.6C491.2 143 493.7 146.1 495.6 147.6C497.5 149.1 500.3 150 502.7 150.5C505.2 150.9 508.2 150.8 510.3 150.4C512.5 149.9 515.5 149.3 515.7 147.9Z" fill="#fff"/><path d="M515.7 147.9C515.8 147.2 513.4 143.2 511.5 141.7C509.6 140.2 506.8 139.2 504.4 138.7C501.9 138.3 499 138.4 496.8 138.8C494.6 139.3 491.2 140.9 491.4 141.6C491.5 142.2 495.4 142.6 497.5 142.8C499.6 142.9 501.6 142 503.9 142.5C506.1 143 509 144.9 511 145.8C512.9 146.7 515.6 148.6 515.7 147.9Z" fill="#c8c8c8"/><path d="M515.3 148.1C514.6 147.2 512.6 144 510.7 142.7C508.9 141.4 506.3 140.7 504.1 140.3C501.8 139.9 499.3 140 497.1 140.5C495 140.9 492.6 143.4 491.2 143C489.8 142.5 489.1 138.7 488.7 137.8L489 137.6C489.4 138.1 490.3 140.2 491.6 140.1C492.8 140.1 494.3 137.7 496.4 137.2C498.6 136.7 502 136.6 504.7 137.2C507.3 137.8 510.4 139 512.3 140.7C514.2 142.5 515.5 146.5 516.1 147.6Z" fill="#000"/><path d="M492.2 142.8C492.8 143.6 493.8 146.4 495.5 147.7C497.3 149 500.8 150.2 502.7 150.7C504.6 151.2 506.5 150.7 507.2 150.8" stroke="#111" stroke-width="0.8" stroke-linecap="round" fill="none"/><path d="M535.1 145.5C535 144.9 538.3 139.7 540.5 137.9C542.7 136 545.6 134.9 548.4 134.3C551.1 133.6 554 134.1 556.9 134C559.7 133.9 564.1 132.1 565.5 133.5C566.9 134.8 566.4 139.6 565.5 142C564.6 144.4 560.9 148.1 560.1 147.8C559.4 147.5 562.7 142.1 560.8 140.4C559 138.7 552.2 137.4 549 137.6C545.7 137.8 543.4 140.1 541.1 141.4C538.8 142.7 535.2 146.1 535.1 145.5Z" fill="#ecccc0"/><path d="M536.4 147.1C536.2 145.6 538.9 142.2 540.9 140.5C543 138.8 546.1 137.6 548.9 137C551.6 136.4 554.9 136.3 557.3 136.7C559.8 137.1 563.2 137.8 563.5 139.3C563.7 140.8 561 144.2 558.9 145.8C556.9 147.5 553.7 148.6 551 149.2C548.3 149.8 544.9 149.8 542.5 149.4C540.1 149.1 536.7 148.6 536.4 147.1Z" fill="#fff"/><path d="M536.4 147.1C536.3 146.4 538.9 142.2 540.9 140.5C543 138.8 546.1 137.6 548.9 137C551.6 136.4 554.9 136.3 557.3 136.7C559.8 137.1 563.6 138.6 563.5 139.3C563.4 140 559 140.6 556.6 140.9C554.3 141.1 552 140.3 549.5 140.9C547 141.5 543.9 143.7 541.7 144.7C539.5 145.8 536.5 147.8 536.4 147.1Z" fill="#c8c8c8"/><path d="M536 146.8C536.7 145.6 538 141.3 540.1 139.4C542.1 137.5 545.6 136.1 548.5 135.3C551.4 134.6 555.2 134.5 557.6 135C560.1 135.4 561.9 137.7 563.2 137.8C564.6 137.8 565.3 135.6 565.7 135.2L565.9 135.3C565.6 136.2 565.2 140.3 563.7 140.8C562.3 141.3 559.5 138.9 557.1 138.5C554.6 138.1 551.8 138.2 549.2 138.7C546.7 139.2 543.9 140.1 541.8 141.5C539.7 143 537.7 146.4 536.8 147.4Z" fill="#000"/><path d="M562.7 140.7C562.1 141.5 560.9 144.5 559 145.9C557 147.4 553.2 148.8 551 149.4C548.9 150 546.8 149.6 546 149.7" stroke="#111" stroke-width="0.8" stroke-linecap="round" fill="none"/><ellipse cx="507.2" cy="146.3" rx="2.8" ry="2.8" fill="#fff" stroke="#111" stroke-width="1.3"/><ellipse cx="507.2" cy="146.3" rx="1.3" ry="1.3" fill="#111"/><ellipse cx="545.3" cy="145.3" rx="2.8" ry="2.8" fill="#fff" stroke="#111" stroke-width="1.3"/><ellipse cx="545.3" cy="145.3" rx="1.3" ry="1.3" fill="#111"/><path d="M489.1 124.8C490 124.2 492.6 122.2 494.7 121.5C496.9 120.8 499.6 120.1 502.1 120.5C504.7 121 507.4 122.6 510.1 124.2C512.8 125.9 516.9 129.4 518.3 130.5L516.7 132.9C515.2 132.1 510.5 129.3 507.9 127.8C505.4 126.3 503.4 124.7 501.3 124.1C499.2 123.5 497.3 123.9 495.3 124.1C493.3 124.3 490.3 125 489.3 125.2Z" fill="#000"/><path d="M529.2 130.5C530.1 129.7 532.6 127.4 534.9 125.8C537.2 124.2 540.1 122.1 543.2 120.7C546.2 119.4 550.2 118 553 117.7C555.9 117.4 558.1 118.3 560.2 119.1C562.4 119.8 564.9 121.8 565.9 122.3L565.7 122.7C564.7 122.4 561.8 121.2 559.8 120.9C557.7 120.7 556.1 120.5 553.6 121.1C551.1 121.6 547.6 122.9 544.8 124.3C542.1 125.6 539.4 127.7 537.1 129.2C534.8 130.6 531.9 132.3 530.8 132.9Z" fill="#000"/><path d="M510.5 153V158" stroke="#000" stroke-width="1.3"/><path d="M512.5 149V158" stroke="#000" stroke-width="1.3"/><path d="M514.5 143V158" stroke="#000" stroke-width="1.3"/><path d="M516.5 141V157.5" stroke="#000" stroke-width="1.3"/><path d="M519.5 140V157.5" stroke="#000" stroke-width="1.3"/><path d="M521.5 140V158" stroke="#000" stroke-width="1.3"/><path d="M523.5 140V158" stroke="#000" stroke-width="1.3"/><path d="M526.5 140V158" stroke="#000" stroke-width="1.3"/><path d="M528.5 141V158" stroke="#000" stroke-width="1.3"/><path d="M530.5 143V158" stroke="#000" stroke-width="1.3"/><path d="M533.5 146V158" stroke="#000" stroke-width="1.3"/><path d="M535.5 151V158" stroke="#000" stroke-width="1.3"/><path d="M501 168.5C500.8 169.2 499.6 171.4 499.8 173C500 174.6 500.8 176.5 502 178C503.2 179.5 506.2 181.3 507 182" stroke="#555" stroke-width="0.7" stroke-linecap="round" fill="none"/><path d="M556 166.5C556.4 167.4 558.3 170.2 558.5 172C558.7 173.8 558.1 175.2 557 177C555.9 178.8 552.8 181.6 552 182.5" stroke="#555" stroke-width="0.7" stroke-linecap="round" fill="none"/><path d="M514 170C514.5 170.6 516.2 172.7 517 173.5C517.8 174.3 518.3 175.1 519 175C519.7 174.9 520 173.5 521 173C522 172.5 523.7 172.1 525 172C526.3 171.9 528.3 172.4 529 172.5" stroke="#444" stroke-width="0.7" stroke-linecap="round" fill="none"/><path d="M530 166.5C530 167.4 529.7 170.3 530 172C530.3 173.7 531 175.1 532 176.5C533 177.9 535.3 179.8 536 180.5" stroke="#444" stroke-width="0.7" stroke-linecap="round" fill="none"/><path d="M519.5 159L518.5 161.5L520 163" stroke="#888" stroke-width="0.6" stroke-linecap="round" stroke-linejoin="round" fill="none"/><path d="M633.5 153.3C634.6 152.2 637.7 155 640 155.5C642.3 156 646.3 155.8 647.5 156.5C648.7 157.2 647.1 158 647 160C646.9 162 646.5 165.3 646.7 168.3C646.9 171.3 647.5 174.9 648 178C648.5 181.1 649.2 184.4 650 186.7C650.8 189 651.8 190.4 653 192C654.2 193.6 655.5 194.5 657 196C658.5 197.5 660.9 199.3 662 201C663.1 202.7 663.9 204.9 663.8 206C663.7 207.1 662.3 208 661.5 207.5C660.7 207 660 204.4 659 203C658 201.6 656.8 200.1 655.5 199C654.2 197.9 651.6 196.2 651 196.5C650.4 196.8 652 199.7 652 201C652 202.3 651.6 204.2 651 204.5C650.4 204.8 648.9 204.2 648.5 203C648.1 201.8 648.9 198.7 648.5 197C648.1 195.3 647.2 194.5 646 193C644.8 191.5 642.5 190 641 188C639.5 186 638.1 183.7 637 181C635.9 178.3 635.1 175.2 634.5 172C633.9 168.8 633.7 165.1 633.5 162C633.3 158.9 632.4 154.4 633.5 153.3Z" fill="#86e4f8"/><path d="M699 156.8C700 155.6 703.9 156.1 706 155.5C708.1 154.9 710.5 151.9 711.7 153C713 154.1 713.2 159.2 713.5 162C713.8 164.8 713 167 713.3 170C713.5 173 714.7 176.9 715 180C715.3 183.1 715.8 186 715 188.3C714.2 190.6 712 192.6 710 194C708 195.4 704.3 195.5 703 197C701.7 198.5 702.2 200.9 702 203C701.8 205.1 702.1 208.3 701.5 209.5C700.9 210.7 699.2 211.1 698.5 210C697.8 208.9 697.7 204.8 697.5 203C697.3 201.2 698.4 199.4 697.5 199C696.6 198.6 693.5 200.6 692 200.5C690.5 200.4 688.7 199.2 688.5 198.5C688.3 197.8 689.6 197 691 196.5C692.4 196 695.2 196.4 697 195.5C698.8 194.6 700.9 193.1 701.5 191C702.1 188.9 701 186.2 700.8 183C700.6 179.8 700.4 175.3 700.3 172C700.2 168.7 700.2 165.5 700 163C699.8 160.5 698 158.1 699 156.8Z" fill="#86e4f8"/><path d="M627 137.3C628.4 136.9 632.9 136.1 635.8 135.4C638.7 134.7 641.8 133.8 644.6 133C647.4 132.2 650.2 131.4 652.5 130.7C654.8 130.1 657.3 129.3 658.3 129L658.7 130C657.8 130.5 655.7 132.2 653.5 133.3C651.3 134.3 648.3 135.4 645.4 136.2C642.6 136.9 639.3 137.5 636.2 137.8C633.1 138.1 628.6 137.8 627 137.7Z" fill="#000"/><path d="M671.7 130C672.8 130.4 675.7 131.5 678.4 132.2C681.2 132.8 684.6 133.8 688.2 134.1C691.7 134.4 695.9 134.3 699.9 134.3C704 134.3 710.4 134.1 712.5 134.1L712.5 134.5C710.4 134.9 704.2 136.4 700.1 136.9C696 137.4 691.6 137.9 687.8 137.5C684.1 137.1 680.3 135.9 677.6 134.8C674.8 133.7 672.3 131.6 671.3 131Z" fill="#000"/><path d="M663 131.5C663.2 132.8 663.8 137.8 664 139" stroke="#444" stroke-width="0.8" stroke-linecap="round" fill="none"/><path d="M665.7 135C665.8 135.5 666.2 137.5 666.3 138" stroke="#666" stroke-width="0.7" stroke-linecap="round" fill="none"/><ellipse cx="657" cy="142.5" rx="3.3" ry="2.5" fill="#ecccc0" transform="rotate(25 657 142.5)"/><ellipse cx="677.5" cy="142.5" rx="3.6" ry="2.6" fill="#ecccc0" transform="rotate(-15 677.5 142.5)"/><path d="M633 152C634.2 152.5 637.5 154.4 640 155C642.5 155.6 645.3 155.9 648 155.5C650.7 155.1 654.7 153 656 152.5" stroke="#1c9aa8" stroke-width="1.6" stroke-linecap="round" fill="none"/><path d="M679 152.5C680.5 153 684.8 155 688 155.5C691.2 156 694.5 156.2 698 155.5C701.5 154.8 707.2 152.2 709 151.5" stroke="#1c9aa8" stroke-width="1.6" stroke-linecap="round" fill="none"/><ellipse cx="644.5" cy="152" rx="11.8" ry="3.1" fill="#ecccc0"/><path d="M657.1 150.3C656.1 150.8 653.1 152.9 651 153.6C648.9 154.4 646.8 154.7 644.4 154.6C642.1 154.5 639.3 154 637.2 153.1C635.1 152.2 632.8 149.9 631.9 149.2L632.1 148.9C633.1 149.3 635.8 150.6 637.8 151.2C639.9 151.7 642.4 152.1 644.6 152.2C646.7 152.3 648.4 152.2 650.5 151.8C652.6 151.4 655.8 150.1 656.9 149.8Z" fill="#000"/><ellipse cx="694.1" cy="151.7" rx="15" ry="3.5" fill="#ecccc0" transform="rotate(-3 694.1 151.7)"/><path d="M678.1 149.9C679.4 150.3 683.7 151.6 686.4 151.9C689 152.3 691.3 152.3 694.1 152.1C696.8 151.8 700 151.2 702.6 150.3C705.3 149.5 708.6 147.7 709.8 147.1L710 147.5C708.9 148.3 706.1 151.3 703.5 152.5C700.8 153.7 697.2 154.5 694.3 154.7C691.4 155 688.7 154.7 685.9 154C683.2 153.3 679.2 151 677.9 150.4Z" fill="#000"/><path d="M664 157.5L661.3 162.5L664 165.8" stroke="#666" stroke-width="0.7" stroke-linecap="round" stroke-linejoin="round" fill="none"/><path d="M661 177C661.7 175.4 663.7 175.4 666 174.7C668.3 174 672.2 173.2 675 173C677.8 172.8 680.8 172.8 683 173.6C685.2 174.4 687.2 176.2 688 178C688.8 179.8 688.7 183.1 687.5 184.5C686.3 185.9 684.2 186.4 681 186.7C677.8 187 671.2 186.7 668 186.3C664.8 185.9 663.2 186.1 662 184.5C660.8 182.9 660.3 178.6 661 177Z" fill="#8b0000" stroke="#000" stroke-width="1.1" stroke-linejoin="round"/><path d="M664 177.2C664.7 176.4 669 175.4 672 175C675 174.6 679.7 174.5 682 175C684.3 175.5 686.7 177.6 686 178.2C685.3 178.8 681 178.1 678 178.3C675 178.6 670.3 179.9 668 179.7C665.7 179.5 663.3 178 664 177.2Z" fill="#fff" stroke="#000" stroke-width="0.6" stroke-linejoin="round"/><path d="M667 182.5C668.3 181.9 673 181 676 181C679 181 683.7 181.9 685 182.5C686.3 183.1 686.8 184.2 684 184.6C681.2 184.9 670.8 184.9 668 184.6C665.2 184.2 665.7 183.1 667 182.5Z" fill="#f4a070"/><path d="M666 185.3C667.7 185.1 672.8 184.3 676 184.3C679.2 184.3 683.5 185.1 685 185.3" stroke="#fff" stroke-width="1.1" stroke-linecap="round" fill="none"/>
<path d="M785.3 131.3L784 126.5" stroke="#1af0ff" stroke-width="1.5" stroke-linecap="round" stroke-linejoin="round" fill="none"/><path d="M786.8 130.9L785.5 126.1" stroke="#1af0ff" stroke-width="1.5" stroke-linecap="round" stroke-linejoin="round" fill="none"/><path d="M785.8 134.6L782.3 138.1" stroke="#1af0ff" stroke-width="1.5" stroke-linecap="round" stroke-linejoin="round" fill="none"/><path d="M784.7 133.5L781.2 137" stroke="#1af0ff" stroke-width="1.5" stroke-linecap="round" stroke-linejoin="round" fill="none"/><path d="M788.4 132.5L793.2 133.8" stroke="#1af0ff" stroke-width="1.5" stroke-linecap="round" stroke-linejoin="round" fill="none"/><path d="M788 134L792.8 135.3" stroke="#1af0ff" stroke-width="1.5" stroke-linecap="round" stroke-linejoin="round" fill="none"/><path d="M789.6 146.1L788.6 142.6" stroke="#1af0ff" stroke-width="1.5" stroke-linecap="round" stroke-linejoin="round" fill="none"/><path d="M790.7 145.8L789.8 142.3" stroke="#1af0ff" stroke-width="1.5" stroke-linecap="round" stroke-linejoin="round" fill="none"/><path d="M790 148.5L787.4 151.1" stroke="#1af0ff" stroke-width="1.5" stroke-linecap="round" stroke-linejoin="round" fill="none"/><path d="M789.2 147.7L786.6 150.3" stroke="#1af0ff" stroke-width="1.5" stroke-linecap="round" stroke-linejoin="round" fill="none"/><path d="M791.9 147L795.4 147.9" stroke="#1af0ff" stroke-width="1.5" stroke-linecap="round" stroke-linejoin="round" fill="none"/><path d="M791.6 148.1L795.1 149.1" stroke="#1af0ff" stroke-width="1.5" stroke-linecap="round" stroke-linejoin="round" fill="none"/><ellipse cx="806" cy="146.3" rx="7" ry="1.3" fill="#ecccc0" transform="rotate(8 806 146.3)"/><path d="M791.6 139.2C792.6 138.5 795.4 136 797.6 135.1C799.8 134.2 802.8 133.6 804.8 133.9C806.9 134.2 808.5 135.7 810.2 136.9C811.8 138.1 813.2 139.9 814.6 141C816 142.1 817.3 142.9 818.5 143.5C819.8 144.2 821.5 144.6 822.1 144.9L821.9 146.3C821.2 146.4 819 146.9 817.5 146.5C815.9 146.1 814 145.1 812.4 144C810.8 142.9 809.2 141.1 807.8 140.1C806.5 139 805.7 138.1 804.2 137.7C802.6 137.4 800.5 137.6 798.4 137.9C796.4 138.2 792.9 139.5 791.8 139.8Z" fill="#000"/><path d="M794.4 148.7C795.1 148.3 797.1 146.6 798.7 146C800.4 145.4 802.5 145.1 804.2 145.2C806 145.4 807.8 146.3 809.2 146.9C810.7 147.6 811.7 148.3 812.8 149C813.9 149.7 815.1 150.4 816 150.9C816.9 151.4 818 151.9 818.4 152.1L818.2 153.5C817.6 153.5 816.2 153.9 815 153.7C813.8 153.4 812.4 152.6 811.2 152C810 151.4 809 150.7 807.8 150.1C806.5 149.4 805.2 148.6 803.8 148.4C802.4 148.1 800.8 148.2 799.3 148.4C797.7 148.5 795.4 149.1 794.6 149.3Z" fill="#000"/><path d="M832.2 126.3C832.9 126.6 834.8 127.7 836.7 128.4C838.7 129.1 841.6 130.1 844 130.7C846.4 131.3 848.6 131.7 851 131.8C853.5 131.9 856.1 131.7 858.7 131.4C861.3 131 865.3 130 866.6 129.7L866.8 130.3C865.6 130.9 862 133.4 859.3 134.2C856.7 135.1 853.7 135.4 851 135.4C848.3 135.5 845.6 135.2 843 134.5C840.4 133.8 837.1 132.5 835.3 131.2C833.4 129.9 832.4 127.5 831.8 126.7Z" fill="#000"/><path d="M835.6 149.3C835.5 148.7 839.2 143.8 841.7 141.9C844.2 140.1 847.6 139.1 850.6 138.4C853.6 137.8 856.9 138.3 860 138.1C863.1 138 867.7 136.3 869.2 137.6C870.7 138.9 870 143.5 869 145.8C867.9 148.1 863.8 151.6 863 151.4C862.2 151.1 866.1 145.9 864.1 144.2C862.1 142.6 854.7 141.4 851.1 141.6C847.5 141.8 844.9 144.1 842.3 145.3C839.7 146.6 835.7 149.9 835.6 149.3Z" fill="#ecccc0"/><path d="M836.9 150.9C836.8 150.2 839.8 146.1 842.1 144.4C844.5 142.8 848 141.7 851 141.1C854.1 140.4 857.7 140.4 860.4 140.7C863 141.1 867.2 142.5 867 143.2C866.9 143.8 862 144.5 859.4 144.7C856.9 145 854.4 144.2 851.6 144.8C848.8 145.4 845.2 147.5 842.8 148.5C840.3 149.5 837 151.5 836.9 150.9Z" fill="#c8c8c8"/><ellipse cx="855.4" cy="146.5" rx="5.9" ry="6.2" fill="#555555" stroke="#161616" stroke-width="1.0"/><ellipse cx="855.4" cy="149.5" rx="3.9" ry="2.1" fill="#868686"/><ellipse cx="855.4" cy="146.2" rx="3" ry="3.3" fill="#1e1e1e"/><ellipse cx="853.3" cy="144.1" rx="1.8" ry="1.8" fill="#fff"/><path d="M836.5 150.6C837.3 149.3 839 145.2 841.4 143.3C843.7 141.5 847.5 140.1 850.7 139.4C853.9 138.7 857.9 138.6 860.6 139C863.3 139.3 865.3 141.6 866.8 141.7C868.3 141.7 868.9 139.6 869.3 139.2L869.6 139.4C869.2 140.3 868.9 144.2 867.3 144.7C865.7 145.2 862.8 142.8 860.1 142.5C857.5 142.2 854.2 142.2 851.4 142.7C848.5 143.2 845.3 144.2 842.9 145.6C840.6 147 838.2 150.2 837.2 151.2Z" fill="#000"/><path d="M866.2 144.5C865.5 145.3 864 148.2 861.8 149.6C859.6 151 855.3 152.4 852.9 153C850.5 153.6 848.2 153.2 847.3 153.3" stroke="#111" stroke-width="0.8" stroke-linecap="round" fill="none"/><path d="M851.4 153.2C851.3 153.7 850.9 155.4 850.8 155.9" stroke="#222" stroke-width="0.6" stroke-linecap="round" fill="none"/><path d="M868.7 119.5C869.6 124.4 872.5 126.5 872.5 129.7A3.8 3.8 0 0 1 864.9 129.7C864.9 126.5 867.8 124.4 868.7 119.5Z" fill="#fff" stroke="#222" stroke-width="0.8"/><path d="M876.7 131C877.6 135.9 880.5 138 880.5 141.2A3.8 3.8 0 0 1 872.9 141.2C872.9 138 875.8 135.9 876.7 131Z" fill="#fff" stroke="#222" stroke-width="0.8"/><path d="M823.3 159.2L820.3 165L822.5 168.7" stroke="#888" stroke-width="0.6" stroke-linecap="round" stroke-linejoin="round" fill="none" stroke-dasharray="2 1.2"/><path d="M818.8 179C818.7 177.8 819.6 175.9 821 175C822.4 174.1 824.5 173.8 827 173.6C829.5 173.4 833.3 173.7 836 174C838.7 174.3 841.2 174.6 843 175.5C844.8 176.4 846.2 177.9 846.7 179.5C847.2 181.1 847 183.7 846 185C845 186.3 843 187.2 841 187.5C839 187.8 836.2 187.2 834 186.5C831.8 185.8 830.1 184.2 828 183.5C825.9 182.8 823 183.2 821.5 182.5C820 181.8 818.9 180.2 818.8 179Z" fill="#fff" stroke="#111" stroke-width="0.9" stroke-linejoin="round"/><path d="M820 179.5C821 179.8 824 180.9 826 181C828 181.1 830.2 179.8 832 180C833.8 180.2 835.3 181.8 837 182C838.7 182.2 840.5 181.8 842 181.5C843.5 181.2 845.3 180.2 846 180" stroke="#444" stroke-width="0.6" stroke-linecap="round" fill="none"/><path d="M982.1 143.1C981.9 142.2 975.9 136.4 972.5 134.7C969 133.1 965.1 133 961.6 133.4C958.1 133.7 954.6 135.9 951.5 137C948.4 138.1 943.8 137.4 942.9 140C942 142.5 944.2 149.2 946.1 152.2C948 155.2 953.6 158.8 954.2 158.1C954.8 157.3 948.5 151.1 949.9 147.9C951.3 144.6 958.5 139.6 962.4 138.3C966.4 137 970.1 139.3 973.4 140.1C976.7 140.9 982.2 144 982.1 143.1Z" fill="#ecccc0"/><path d="M981.5 145.9C981.4 144.9 976.4 140.1 973.2 138.6C969.9 137.2 965.8 137 962.3 137.5C958.8 137.9 954.9 139.4 952.3 141C949.6 142.7 945.8 146.7 946.3 147.6C946.8 148.5 952.2 147.3 955 146.6C957.8 145.9 960.1 143.6 963.3 143.3C966.5 143 971.2 144.6 974.3 145C977.3 145.5 981.7 147 981.5 145.9Z" fill="#c8c8c8"/><ellipse cx="963.5" cy="147.4" rx="7.6" ry="7.9" fill="#555555" stroke="#161616" stroke-width="1.0"/><ellipse cx="963.5" cy="151.2" rx="4.9" ry="2.7" fill="#868686"/><ellipse cx="963.5" cy="147" rx="3.8" ry="4.2" fill="#1e1e1e"/><ellipse cx="960.9" cy="144.4" rx="2.3" ry="2.3" fill="#fff"/><path d="M981.1 146.5C979.6 145.4 975.6 141.3 972.5 140.2C969.4 139 965.7 139.1 962.5 139.5C959.3 140 956.1 141.2 953.4 142.9C950.8 144.5 948.3 149.5 946.6 149.4C944.9 149.4 943.8 143.8 943.3 142.7L943.5 142.5C943.9 143.1 944.7 146.3 946 145.7C947.2 145.2 948.4 140.9 951.1 139.2C953.8 137.5 958.3 135.7 962 135.4C965.8 135 970.5 135.5 973.8 137.1C977.2 138.8 980.7 144 982 145.4Z" fill="#000"/><path d="M947.6 149.2C948.8 150.1 951.7 153.7 954.7 154.9C957.7 156 962.7 156.2 965.6 156.1C968.4 155.9 970.6 154.4 971.6 154.1" stroke="#111" stroke-width="0.8" stroke-linecap="round" fill="none"/><path d="M967.3 155.8C967.6 156.4 968.7 158.9 969 159.5" stroke="#222" stroke-width="0.6" stroke-linecap="round" fill="none"/><path d="M993.3 142.2C993.5 141.4 1000.1 135.4 1004 133.8C1008 132.1 1012.8 131.9 1017 132.3C1021.1 132.6 1025.5 134.8 1029.2 135.8C1032.9 136.9 1038.1 136.2 1039.3 138.7C1040.5 141.2 1038.5 148 1036.5 151C1034.6 154.1 1028.2 157.8 1027.5 157C1026.7 156.3 1033.8 150 1031.9 146.8C1030 143.5 1021 138.6 1016.3 137.3C1011.5 136 1007.1 138.3 1003.3 139.1C999.5 139.9 993.2 143.1 993.3 142.2Z" fill="#ecccc0"/><path d="M994 145.1C994.1 144 999.7 139.1 1003.5 137.7C1007.2 136.2 1012.2 136 1016.4 136.4C1020.6 136.8 1025.3 138.3 1028.6 139.9C1031.9 141.6 1036.7 145.5 1036.2 146.4C1035.7 147.4 1029.1 146.2 1025.7 145.5C1022.3 144.8 1019.4 142.5 1015.6 142.3C1011.7 142 1006.2 143.6 1002.6 144.1C999 144.6 993.8 146.1 994 145.1Z" fill="#c8c8c8"/><ellipse cx="1015" cy="146.3" rx="8.1" ry="8.5" fill="#555555" stroke="#161616" stroke-width="1.0"/><ellipse cx="1015" cy="150.3" rx="5.3" ry="2.9" fill="#868686"/><ellipse cx="1015" cy="145.9" rx="4.1" ry="4.5" fill="#1e1e1e"/><ellipse cx="1012.2" cy="143.1" rx="2.4" ry="2.4" fill="#fff"/><path d="M993.5 144.5C995 143 999 137.7 1002.8 136C1006.7 134.3 1012.1 133.9 1016.6 134.2C1021 134.5 1026.3 136.2 1029.6 137.9C1033 139.6 1034.9 143.9 1036.4 144.5C1038 145.1 1038.4 141.8 1038.8 141.3L1039 141.5C1038.5 142.6 1037.8 148.3 1035.9 148.4C1034 148.5 1030.8 143.6 1027.6 142C1024.3 140.4 1020.1 139 1016.2 138.6C1012.3 138.1 1007.7 138.1 1004.1 139.3C1000.5 140.5 996 144.6 994.4 145.7Z" fill="#000"/><path d="M1034.9 148.1C1033.6 149 1030.2 152.7 1026.7 153.8C1023.1 155 1017.1 155.2 1013.7 155.1C1010.4 155 1007.6 153.5 1006.4 153.2" stroke="#111" stroke-width="0.8" stroke-linecap="round" fill="none"/><path d="M1011.7 154.8C1011.4 155.4 1010.2 157.9 1009.9 158.6" stroke="#222" stroke-width="0.6" stroke-linecap="round" fill="none"/><path d="M950.2 119C951.2 120 954.1 122.8 956 124.6C958 126.5 960 128.7 961.9 130.3C963.7 132 965.5 133.2 967.3 134.5C969.1 135.8 970.6 136.7 972.7 137.9C974.9 139 978.9 140.7 980.1 141.2L979.9 142.2C978.4 142.1 973.8 142.4 971.3 141.7C968.7 141.1 966.8 139.5 964.7 138.1C962.7 136.7 960.9 135 959.1 133.1C957.3 131.1 955.5 128.7 954 126.4C952.4 124.1 950.5 120.5 949.8 119.4Z" fill="#000"/><path d="M991.6 142C992.7 141.4 996 139.8 998.2 138.6C1000.4 137.3 1002.5 136.1 1004.7 134.6C1006.9 133.1 1009.2 131.3 1011.7 129.4C1014.1 127.5 1017 125 1019.4 123.2C1021.9 121.4 1024.1 119.9 1026.4 118.6C1028.7 117.3 1032.1 115.7 1033.2 115.1L1033.4 115.5C1032.4 116.3 1029.6 118.7 1027.6 120.4C1025.7 122.1 1023.8 123.8 1021.6 125.8C1019.4 127.9 1016.7 130.5 1014.3 132.6C1011.9 134.7 1009.7 136.8 1007.3 138.4C1004.9 140.1 1002.4 141.7 999.8 142.4C997.2 143.2 993.2 142.9 991.8 143Z" fill="#000"/><path d="M984.2 131.5C984.3 132.6 984.9 136.9 985 138" stroke="#aaa" stroke-width="0.6" stroke-linecap="round" fill="none"/><path d="M987.5 132.5C987.6 133.2 987.9 135.8 988 136.5" stroke="#bbb" stroke-width="0.6" stroke-linecap="round" fill="none"/><path d="M983.3 160.8L980.3 166.7L983.3 170" stroke="#666" stroke-width="0.7" stroke-linecap="round" stroke-linejoin="round" fill="none"/><path d="M973 178C973.9 177.2 976.3 177.1 978 177.3C979.7 177.6 981 179.1 983 179.5C985 179.9 987.8 180.2 990 180C992.2 179.8 994 178.4 996 178C998 177.6 1000.7 177 1002 177.5C1003.3 178 1003.8 179.6 1004 181C1004.2 182.4 1004.3 184.9 1003.5 186C1002.7 187.1 1000.8 187.6 999 187.5C997.2 187.4 995.2 185.9 993 185.5C990.8 185.1 988.2 184.8 986 185C983.8 185.2 981.9 186.8 980 187C978.1 187.2 975.7 186.8 974.5 186C973.3 185.2 973 183.3 972.8 182C972.5 180.7 972.1 178.8 973 178Z" fill="#fff" stroke="#111" stroke-width="0.9" stroke-linejoin="round"/><path d="M976 182C977.3 182.1 981.7 182.6 984 182.5C986.3 182.4 988.3 181.3 990 181.5C991.7 181.7 992.8 183.4 994 183.5C995.2 183.6 995.7 182.2 997 182C998.3 181.8 1001.2 182.4 1002 182.5" stroke="#444" stroke-width="0.6" stroke-linecap="round" fill="none"/><path d="M973.8 179C973.8 180 973.6 184 973.6 185" stroke="#a01010" stroke-width="1.4" stroke-linecap="round" fill="none"/><path d="M1003.2 179C1003.2 180.1 1003 184.4 1003 185.5" stroke="#a01010" stroke-width="1.4" stroke-linecap="round" fill="none"/><path d="M82.6 233C83.6 232 86.3 228.8 88.6 227C90.8 225.3 93.5 223.6 96.1 222.6C98.6 221.6 101.1 221.3 103.8 221.2C106.5 221 109.8 221.3 112.2 221.7C114.6 222.1 116.3 222.8 118.3 223.5C120.2 224.2 123.1 225.5 124.1 226L123.9 226.4C122.9 226.4 119.8 226.2 117.7 226.1C115.7 226 114.1 225.9 111.8 225.9C109.6 225.9 106.5 225.8 104.2 226C101.9 226.3 100 226.6 97.9 227.4C95.8 228.2 93.5 229.5 91.4 231C89.4 232.4 86.4 235.2 85.4 236Z" fill="#000"/><ellipse cx="92" cy="239.5" rx="6" ry="2.2" fill="#ecccc0" transform="rotate(-25 92 239.5)"/><path d="M89.7 248.2C89.6 247.6 93.5 242.5 96.3 240.6C99 238.7 102.6 237.5 105.9 236.8C109.3 236 112.8 236.4 116.2 236.1C119.5 235.9 124.4 234.1 126 235.3C127.6 236.6 127 241.2 125.9 243.5C124.8 245.9 120.4 249.6 119.5 249.3C118.7 249.1 122.9 243.7 120.7 242.1C118.5 240.5 110.5 239.6 106.5 239.9C102.5 240.2 99.7 242.6 96.9 244C94.1 245.3 89.8 248.7 89.7 248.2Z" fill="#ecccc0"/><path d="M91 249.7C90.8 249 94.1 244.8 96.7 243.1C99.3 241.3 103.1 240.1 106.4 239.4C109.7 238.6 113.7 238.5 116.6 238.7C119.6 239 124.1 240.3 123.9 240.9C123.8 241.6 118.4 242.4 115.6 242.8C112.8 243.1 110.1 242.4 107.1 243.1C104 243.8 100.1 246 97.4 247.1C94.7 248.2 91.1 250.4 91 249.7Z" fill="#c8c8c8"/><ellipse cx="110.9" cy="244.7" rx="6" ry="6.4" fill="#555555" stroke="#161616" stroke-width="1.0"/><ellipse cx="110.9" cy="247.7" rx="3.9" ry="2.2" fill="#868686"/><ellipse cx="110.9" cy="244.4" rx="3" ry="3.3" fill="#1e1e1e"/><ellipse cx="108.8" cy="242.3" rx="1.8" ry="1.8" fill="#fff"/><path d="M90.6 249.4C91.5 248.1 93.4 243.9 95.9 241.9C98.5 240 102.6 238.5 106 237.7C109.5 236.9 113.9 236.7 116.8 236.9C119.7 237.2 122.1 239.4 123.7 239.4C125.2 239.4 125.8 237.4 126.2 237L126.4 237.1C126.1 238 125.9 241.9 124.2 242.5C122.6 243 119.4 240.8 116.5 240.5C113.6 240.3 109.9 240.4 106.8 241C103.6 241.7 100 242.7 97.5 244.2C94.9 245.7 92.3 249 91.3 250Z" fill="#000"/><path d="M123.2 242.3C122.3 243.1 120.6 246.1 118.2 247.6C115.8 249.1 111.1 250.6 108.5 251.3C105.9 252 103.4 251.7 102.4 251.8" stroke="#111" stroke-width="0.8" stroke-linecap="round" fill="none"/><path d="M106.8 251.6C106.7 252 106.4 253.8 106.3 254.2" stroke="#222" stroke-width="0.6" stroke-linecap="round" fill="none"/><path d="M84 277C85.3 275.2 89 275.1 92 274C95 272.9 100.6 269.7 101.8 270.2C103 270.7 100.6 275 99 277C97.4 279 94.5 280.8 92 282C89.5 283.2 85.3 285.3 84 284.5C82.7 283.7 82.7 278.8 84 277Z" fill="#fff" stroke="#111" stroke-width="0.9" stroke-linejoin="round"/><path d="M89 275.5C89.2 276.7 90.2 281.3 90.5 282.5" stroke="#333" stroke-width="0.7" stroke-linecap="round" fill="none"/><path d="M94.5 273.5C94.8 274.6 95.8 278.9 96 280" stroke="#333" stroke-width="0.7" stroke-linecap="round" fill="none"/><path d="M197.4 218.2C198.1 221.7 200.1 223.2 200.1 225.5A2.7 2.7 0 0 1 194.7 225.5C194.7 223.2 196.7 221.7 197.4 218.2Z" fill="#fff" stroke="#222" stroke-width="0.8"/><path d="M192 230.5C192.7 234 194.7 235.5 194.7 237.8A2.7 2.7 0 0 1 189.3 237.8C189.3 235.5 191.3 234 192 230.5Z" fill="#fff" stroke="#222" stroke-width="0.8"/><path d="M275.3 216.5C276.3 221.6 279.2 223.8 279.2 227.1A3.9 3.9 0 0 1 271.4 227.1C271.4 223.8 274.3 221.6 275.3 216.5Z" fill="#fff" stroke="#222" stroke-width="0.8"/><path d="M288.9 225C289.7 229.2 292.1 231 292.1 233.8A3.2 3.2 0 0 1 285.7 233.8C285.7 231 288.1 229.2 288.9 225Z" fill="#fff" stroke="#222" stroke-width="0.8"/><path d="M281.6 237.3C282.4 241.5 284.8 243.3 284.8 246.1A3.2 3.2 0 0 1 278.4 246.1C278.4 243.3 280.8 241.5 281.6 237.3Z" fill="#fff" stroke="#222" stroke-width="0.8"/><path d="M196.5 250C198 248.8 201.1 247.9 205 247.5C208.9 247.1 215 247.3 220 247.3C225 247.3 230 247.5 235 247.5C240 247.5 245 247.3 250 247.3C255 247.3 261.1 247 265 247.5C268.9 248 272.2 248.8 273.5 250.5C274.8 252.2 273.9 255.8 273 258C272.1 260.2 271 262.8 268 264C265 265.2 259.2 265.2 255 265C250.8 264.8 246.5 263.8 243 263C239.5 262.2 236.8 260.8 234 260.5C231.2 260.2 228.7 260.3 226 261C223.3 261.7 221.5 263.9 218 264.5C214.5 265.1 208.3 265.6 205 264.8C201.7 264.1 199.5 261.6 198 260C196.5 258.4 196.2 256.7 196 255C195.8 253.3 195 251.2 196.5 250Z" fill="#ffd0d0"/><ellipse cx="219.5" cy="249.5" rx="3.4" ry="2.4" fill="#f0c4b4" transform="rotate(30 219.5 249.5)"/><ellipse cx="246" cy="249" rx="3.8" ry="2.6" fill="#f0c4b4" transform="rotate(-30 246 249)"/><path d="M203.3 263.3L200.5 270.5" stroke="#ff7f5c" stroke-width="1.1"/><path d="M205.3 263.3L202.5 270.5" stroke="#ff7f5c" stroke-width="1.1"/><path d="M207.3 263.3L204.5 270.5" stroke="#ff7f5c" stroke-width="1.1"/><path d="M209.3 263.3L206.5 270.5" stroke="#ff7f5c" stroke-width="1.1"/><path d="M211.3 263.3L208.5 270.5" stroke="#ff7f5c" stroke-width="1.1"/><path d="M213.3 263.3L210.5 270.5" stroke="#ff7f5c" stroke-width="1.1"/><path d="M215.3 263.3L212.5 270.5" stroke="#ff7f5c" stroke-width="1.1"/><path d="M217.3 263.3L214.5 270.5" stroke="#ff7f5c" stroke-width="1.1"/><path d="M246.8 262L244 269.8" stroke="#ff7f5c" stroke-width="1.1"/><path d="M249.2 262L246.4 269.8" stroke="#ff7f5c" stroke-width="1.1"/><path d="M251.7 262L248.9 269.8" stroke="#ff7f5c" stroke-width="1.1"/><path d="M254.1 262L251.3 269.8" stroke="#ff7f5c" stroke-width="1.1"/><path d="M256.6 262L253.8 269.8" stroke="#ff7f5c" stroke-width="1.1"/><path d="M259 262L256.2 269.8" stroke="#ff7f5c" stroke-width="1.1"/><path d="M261.5 262L258.7 269.8" stroke="#ff7f5c" stroke-width="1.1"/><path d="M263.9 262L261.1 269.8" stroke="#ff7f5c" stroke-width="1.1"/><path d="M266.4 262L263.6 269.8" stroke="#ff7f5c" stroke-width="1.1"/><path d="M268.8 262L266 269.8" stroke="#ff7f5c" stroke-width="1.1"/><path d="M196.7 248.3C197 247.3 197.2 244.4 198.5 242.6C199.9 240.8 202.4 238.7 204.8 237.5C207.2 236.3 210.1 235.9 212.7 235.6C215.3 235.3 219.3 235.7 220.6 235.8L220.8 238.2C219.5 238.4 215.7 239 213.3 239.4C210.9 239.9 208.5 240.3 206.4 241.1C204.3 241.9 202 243.2 200.5 244.4C198.9 245.7 197.7 247.8 197.1 248.5Z" fill="#000"/><path d="M238 234.1C239.4 234 243.4 233.6 246.3 233.9C249.2 234.2 252.5 234.9 255.4 235.8C258.3 236.7 261 237.9 263.6 239.3C266.3 240.8 270 243.5 271.3 244.4L271.1 244.8C269.6 244.4 265.2 243.1 262.4 242.3C259.6 241.4 257 240.5 254.2 239.8C251.4 239 248.4 238.3 245.7 237.7C243 237.2 239.1 236.7 237.8 236.5Z" fill="#000"/><path d="M197.3 256.1C198 255.6 199.9 254.1 201.7 253.4C203.6 252.8 206.1 252 208.4 252C210.7 251.9 213.1 252.3 215.3 253.1C217.6 254 221 256.3 222.1 257L221.9 257.4C220.7 257.1 216.9 255.9 214.7 255.5C212.4 255 210.5 254.6 208.4 254.6C206.4 254.7 204.1 255.2 202.3 255.6C200.5 255.9 198.3 256.4 197.5 256.5Z" fill="#000"/><path d="M243.2 257C244.3 256.3 247.3 254 249.7 253.1C252.1 252.3 254.9 251.8 257.5 251.8C260.1 251.8 262.7 252.4 265.2 253.1C267.7 253.8 271.3 255.4 272.6 255.9L272.4 256.3C271.2 256.2 267.3 255.8 264.8 255.5C262.3 255.2 259.9 254.8 257.5 254.8C255.1 254.8 252.7 255 250.3 255.5C248 255.9 244.6 257.1 243.4 257.4Z" fill="#000"/><path d="M200 255.5C199.8 255.8 198.8 256.8 198.5 257" stroke="#111" stroke-width="0.7" stroke-linecap="round" fill="none"/><path d="M204 254.2C203.8 254.5 203.2 255.9 203 256.2" stroke="#111" stroke-width="0.7" stroke-linecap="round" fill="none"/><path d="M268 254.8C268.2 255.1 269.2 256.1 269.5 256.3" stroke="#111" stroke-width="0.7" stroke-linecap="round" fill="none"/><path d="M271 255.8C271.3 256 272.5 256.8 272.8 257" stroke="#111" stroke-width="0.7" stroke-linecap="round" fill="none"/><path d="M226.1 267.6L224.2 271.7L227.5 273.9" stroke="#666" stroke-width="0.7" stroke-linecap="round" stroke-linejoin="round" fill="none"/><path d="M222 282.5C223.1 281.7 225.7 281.4 228 281C230.3 280.6 233.5 280.3 236 280.2C238.5 280.1 241.1 280 243 280.5C244.9 281 246.7 281.8 247.5 283C248.3 284.2 248.6 286.7 248 288C247.4 289.3 246 290.4 244 291C242 291.6 238.7 291.3 236 291.4C233.3 291.5 230.2 291.8 228 291.6C225.8 291.4 224.1 290.9 223 290C221.9 289.1 221.7 287.2 221.5 286C221.3 284.8 220.9 283.3 222 282.5Z" fill="#fff" stroke="#111" stroke-width="0.9" stroke-linejoin="round"/><path d="M225 285C226 284.9 229.2 284.2 231 284.5C232.8 284.8 234.5 286.5 236 286.5C237.5 286.5 238.7 284.5 240 284.5C241.3 284.5 242.8 286.3 244 286.5C245.2 286.7 246.9 285.7 247.5 285.5" stroke="#444" stroke-width="0.6" stroke-linecap="round" fill="none"/><path d="M222.8 283.5C222.8 284.4 222.6 288.1 222.6 289" stroke="#a01010" stroke-width="1.4" stroke-linecap="round" fill="none"/><path d="M343.5 230C344.3 229.2 346.4 226.2 348.4 225C350.4 223.8 353.3 223 355.7 222.8C358.1 222.5 360.5 222.8 362.6 223.5C364.8 224.2 367.1 225.6 368.7 227C370.3 228.3 371.5 230.1 372.2 231.7C373 233.4 372.9 236 373.1 236.9L372.5 237.1C372.1 236.5 370.8 234.5 369.8 233.3C368.7 232.1 367.7 231 366.3 230C364.9 229.1 363.1 228 361.4 227.5C359.6 226.9 357.9 226.6 355.9 226.6C354 226.7 351.6 227 349.6 227.6C347.6 228.3 344.7 229.9 343.7 230.4Z" fill="#000"/><path d="M388.9 236.1C389.1 235 389.1 231.6 390.2 229.6C391.3 227.5 393.6 225.3 395.7 223.9C397.7 222.4 400 221.6 402.5 221C404.9 220.4 407.8 220.1 410.5 220.2C413.1 220.3 415.9 220.8 418.3 221.5C420.6 222.2 423.7 224 424.8 224.5L424.6 224.9C423.5 224.8 420.1 224.3 417.7 224.1C415.4 223.9 412.9 223.7 410.5 223.8C408.2 224 405.6 224.4 403.5 225C401.4 225.6 399.7 226.3 397.9 227.3C396.1 228.4 394.2 229.9 392.8 231.4C391.4 232.9 390 235.5 389.5 236.3Z" fill="#000"/><ellipse cx="371.7" cy="241.6" rx="3" ry="2.3" fill="#ecccc0" transform="rotate(30 371.7 241.6)"/><ellipse cx="391.3" cy="241.1" rx="3.4" ry="2.4" fill="#ecccc0" transform="rotate(-20 391.3 241.1)"/><ellipse cx="359" cy="250.3" rx="12.2" ry="3.5" fill="#ecccc0"/><path d="M372.1 248.1C371.1 248.8 368 251.3 365.8 252.2C363.6 253 361.4 253.4 358.9 253.3C356.5 253.2 353.5 252.6 351.3 251.5C349.1 250.5 346.8 247.7 345.9 246.9L346.1 246.6C347.1 247 350 248.7 352.1 249.4C354.3 250.1 356.9 250.5 359.1 250.7C361.2 250.8 363 250.6 365.2 250.1C367.3 249.6 370.8 248.1 371.9 247.7Z" fill="#000"/><ellipse cx="406.6" cy="249.2" rx="14.6" ry="3.7" fill="#ecccc0" transform="rotate(-3 406.6 249.2)"/><path d="M391.1 247.3C392.4 247.6 396.6 249 399.1 249.4C401.7 249.8 403.9 249.9 406.6 249.6C409.2 249.3 412.3 248.7 414.8 247.8C417.3 247 420.6 245 421.8 244.4L422 244.8C420.9 245.7 418.3 248.8 415.7 250C413.2 251.3 409.7 252.1 406.8 252.4C404 252.7 401.3 252.4 398.7 251.6C396 250.8 392.2 248.4 390.9 247.7Z" fill="#000"/><path d="M378.2 256.6L375.5 262.1L378.2 264.8" stroke="#777" stroke-width="0.7" stroke-linecap="round" stroke-linejoin="round" fill="none"/><path d="M371.7 271C372.2 269.9 373.9 269.9 376 270C378.1 270.1 381.3 271.4 384 271.5C386.7 271.6 389.7 270.6 392 270.3C394.3 270 396.9 268.6 397.6 269.5C398.4 270.4 397.4 274.1 396.5 276C395.6 277.9 394 279.9 392 281C390 282.1 387 282.8 384.5 282.8C382 282.8 378.9 282.1 377 281C375.1 279.9 373.7 278.2 372.8 276.5C371.9 274.8 371.2 272.1 371.7 271Z" fill="#8b0000" stroke="#000" stroke-width="1.1" stroke-linejoin="round"/><path d="M375 271.2C376.2 271 380.8 272.8 384 272.8C387.2 272.8 392.7 270.8 394 271C395.3 271.2 393.7 273.3 392 274C390.3 274.7 386.5 275 384 275C381.5 275 378.5 274.6 377 274C375.5 273.4 373.8 271.4 375 271.2Z" fill="#fff" stroke="#000" stroke-width="0.6" stroke-linejoin="round"/><path d="M376 278.5C376.2 277.8 378.6 276.7 380 276.5C381.4 276.3 383 277.3 384.5 277.3C386 277.3 387.5 276.3 389 276.5C390.5 276.7 393.3 277.8 393.5 278.5C393.7 279.2 391.5 280.4 390 281C388.5 281.6 386.3 282 384.5 282C382.7 282 380.4 281.6 379 281C377.6 280.4 375.8 279.2 376 278.5Z" fill="#ff8f9a"/><radialGradient id="gb1" cx=".6" cy=".25" r=".8"><stop offset="0" stop-color="#9a7ee6"/><stop offset=".6" stop-color="#b9a6ee"/><stop offset="1" stop-color="#f3effc"/></radialGradient><linearGradient id="gb2" x1="0" y1="0" x2="0" y2="1"><stop offset="0" stop-color="#9272e2"/><stop offset=".55" stop-color="#c3b2ef"/><stop offset="1" stop-color="#ffffff"/></linearGradient><radialGradient id="gb3" cx=".65" cy=".7" r=".75"><stop offset="0" stop-color="#8a68e0"/><stop offset=".7" stop-color="#a88fea"/><stop offset="1" stop-color="#e9e2fa"/></radialGradient><path d="M546 212C546.2 210.1 547.5 207.3 549 206C550.5 204.7 553 203.9 555 204C557 204.1 559.7 205.2 561 206.5C562.3 207.8 563.2 210.1 563 212C562.8 213.9 561.6 216.7 560 218C558.4 219.3 555.5 219.9 553.5 219.8C551.5 219.7 549.2 218.8 548 217.5C546.8 216.2 545.8 213.9 546 212Z" fill="url(#gb1)"/><path d="M551 208.5C551.8 208.3 555.2 207.7 556 207.5" stroke="#8a6fe0" stroke-width="0.7" stroke-linecap="round" fill="none"/><path d="M553.5 206C553.6 206.8 553.9 210.2 554 211" stroke="#8a6fe0" stroke-width="0.7" stroke-linecap="round" fill="none"/><path d="M530.5 233C532.8 231.4 539.8 231.6 545 231.5C550.2 231.4 556.6 231.8 562 232.5C567.4 233.2 575.3 233.8 577.6 236C579.9 238.2 577.3 243 576 246C574.7 249 573 252 570 254C567 256 562.3 257.6 558 258C553.7 258.4 548 257.8 544 256.5C540 255.2 536.2 252.6 534 250C531.8 247.4 531.6 243.8 531 241C530.4 238.2 528.2 234.6 530.5 233Z" fill="url(#gb2)"/><path d="M487 242C487.2 240.2 488.3 237.4 490 236C491.7 234.6 494.3 233.7 497 233.3C499.7 232.9 503.2 233 506 233.5C508.8 234 512.2 235 514 236.5C515.8 238 517.2 240.5 517 242.5C516.8 244.5 515.3 247.1 513 248.5C510.7 249.9 506.2 250.8 503 251C499.8 251.2 496.4 250.2 494 249.5C491.6 248.8 489.7 247.8 488.5 246.5C487.3 245.2 486.8 243.8 487 242Z" fill="url(#gb3)"/><path d="M497 241C498.7 241.8 505.3 244.8 507 245.5" stroke="#7a5ad8" stroke-width="0.7" stroke-linecap="round" fill="none"/><path d="M498 246C499.7 245.1 506.3 241.4 508 240.5" stroke="#7a5ad8" stroke-width="0.7" stroke-linecap="round" fill="none"/><path d="M485.7 225.6C487.1 225.7 491.5 226.2 494.4 226.7C497.4 227.1 500.8 228.1 503.3 228.4C505.9 228.7 507.7 228.7 509.6 228.4C511.6 228.2 513.2 227.4 515.3 226.8C517.4 226.2 521.1 225.2 522.2 224.8L522.6 225.6C521.6 226.3 518.8 229 516.7 230.2C514.7 231.4 512.7 232.3 510.4 232.8C508 233.2 505.5 233.3 502.7 232.8C499.9 232.3 496.4 230.9 493.6 229.7C490.7 228.6 486.9 226.7 485.5 226Z" fill="#000"/><path d="M528.1 225.4C529.2 225.6 532.5 226.2 534.7 226.7C536.9 227.2 538.9 228.1 541.4 228.4C543.9 228.7 546.8 228.7 549.8 228.6C552.9 228.5 556.3 228 559.7 227.7C563 227.4 568.4 227 570.1 226.9L570.3 227.3C568.6 228 563.7 230.3 560.3 231.3C557 232.3 553.5 233.1 550.2 233.4C546.9 233.8 543.4 233.7 540.6 233.2C537.8 232.7 535.5 231.5 533.3 230.3C531.2 229.1 528.7 226.9 527.7 226.2Z" fill="#000"/><ellipse cx="507.4" cy="253.5" rx="4" ry="3.3" fill="#5e5e5e" stroke="#1c1c1c" stroke-width="0.8"/><ellipse cx="507.4" cy="253.3" rx="1.8" ry="1.8" fill="#1e1e1e"/><path d="M500 246L516 246L516 251.5L500 250.8Z" fill="#b49fec"/><path d="M492 250.5C493 251.2 495.7 253.8 498 255C500.3 256.2 503.5 257.3 506 257.5C508.5 257.7 511.8 256.2 513 256" stroke="#111" stroke-width="0.9" stroke-linecap="round" fill="none"/><path d="M494 250.5C495.5 250.7 500 251.4 503 251.5C506 251.6 509.7 251.4 512 251C514.3 250.6 516.2 249.3 517 249" stroke="#111" stroke-width="1.2" stroke-linecap="round" fill="none"/><ellipse cx="556.6" cy="245.5" rx="5.4" ry="5.7" fill="#555555" stroke="#161616" stroke-width="1.0"/><ellipse cx="556.6" cy="248.2" rx="3.5" ry="1.9" fill="#868686"/><ellipse cx="556.6" cy="245.3" rx="2.7" ry="3" fill="#1e1e1e"/><ellipse cx="554.7" cy="243.4" rx="1.6" ry="1.6" fill="#fff"/><path d="M536.2 250.2C537.1 249 538.9 245 541.4 243.1C544 241.2 547.9 239.6 551.4 238.7C554.8 237.8 559.1 237.3 562.1 237.5C565 237.6 567.2 239.5 569 239.4C570.7 239.3 571.9 237.3 572.4 236.9L572.7 237.1C572.2 238 571.4 241.8 569.6 242.4C567.8 243.1 564.8 241.1 561.9 241C559 241 555.4 241.3 552.2 242C549.1 242.7 545.5 243.9 543 245.4C540.4 246.8 538 250 537 250.9Z" fill="#000"/><path d="M568.5 242.2C567.7 243 566.1 245.8 563.7 247.3C561.3 248.8 556.7 250.4 554.1 251.1C551.5 251.9 549 251.8 548 251.9" stroke="#111" stroke-width="0.8" stroke-linecap="round" fill="none"/><path d="M552.4 251.5C552.3 251.9 552 253.5 551.9 254" stroke="#222" stroke-width="0.6" stroke-linecap="round" fill="none"/><path d="M520.2 256.6L517.5 263.4L521 266.2" stroke="#777" stroke-width="0.7" stroke-linecap="round" stroke-linejoin="round" fill="none" stroke-dasharray="2.2 1.2"/><path d="M520.2 278.8C521 278.4 523.2 277 525 276.5C526.8 276 529.2 275.9 531 276C532.8 276.1 534.5 276.8 536 277.3C537.5 277.8 539.5 278.6 540.2 278.8" stroke="#333" stroke-width="0.8" stroke-linecap="round" fill="none"/><path d="M527 281.5C528 281.6 532 281.8 533 281.8" stroke="#999" stroke-width="0.6" stroke-linecap="round" fill="none"/><path d="M625 234C626.5 233.5 630.8 232.1 633.7 231.1C636.6 230.1 639.7 229 642.3 228.1C644.9 227.1 647.2 226.1 649.4 225.4C651.6 224.7 654.5 224 655.6 223.7L656.2 225.3C655.3 225.8 652.8 227.6 650.6 228.6C648.5 229.6 646.1 230.5 643.3 231.3C640.6 232.1 637.3 233 634.3 233.5C631.3 234 626.7 234.3 625.2 234.4Z" fill="#000"/><path d="M668.3 223.9C669.4 224.4 672 225.6 674.6 226.4C677.2 227.2 680.4 228.2 684.1 228.9C687.9 229.6 692.6 230.2 697.1 230.7C701.6 231.2 708.8 231.7 711.1 231.9L711.1 232.3C708.7 232.5 701.5 233.3 696.9 233.3C692.3 233.4 687.4 233.1 683.5 232.5C679.6 231.9 676.1 230.8 673.4 229.6C670.7 228.4 668.5 226.1 667.5 225.5Z" fill="#000"/><ellipse cx="649.6" cy="238.9" rx="3.2" ry="2.4" fill="#ecccc0" transform="rotate(30 649.6 238.9)"/><ellipse cx="671.5" cy="238.1" rx="4.5" ry="2.6" fill="#ecccc0" transform="rotate(-25 671.5 238.1)"/><path d="M656.4 245.6C656.4 245.1 651.9 241.1 649.1 239.9C646.4 238.7 643.1 238.4 640.1 238.4C637 238.4 634.2 239.5 631.1 240C628.1 240.5 622.9 239.9 621.7 241.4C620.5 242.9 622.3 247 623.8 249C625.4 250.9 630.1 253.4 630.9 253C631.7 252.6 626.9 248.4 628.5 246.5C630 244.6 636.7 242.1 640.2 241.5C643.7 241 646.6 242.5 649.3 243.2C652 243.9 656.5 246.2 656.4 245.6Z" fill="#ecccc0"/><path d="M655.5 247.3C655.5 246.7 651.8 243.4 649.3 242.4C646.7 241.3 643.2 240.9 640.2 241C637.2 241 633.7 241.7 631.3 242.5C628.8 243.4 625.2 245.5 625.4 246.1C625.7 246.7 630.5 246.3 632.9 246.1C635.4 245.8 637.6 244.5 640.4 244.6C643.1 244.6 646.9 245.9 649.5 246.3C652 246.8 655.6 248 655.5 247.3Z" fill="#c8c8c8"/><ellipse cx="643" cy="246.8" rx="5.4" ry="5.7" fill="#555555" stroke="#161616" stroke-width="1.0"/><ellipse cx="643" cy="249.5" rx="3.5" ry="1.9" fill="#868686"/><ellipse cx="643" cy="246.5" rx="2.7" ry="3" fill="#1e1e1e"/><ellipse cx="641.1" cy="244.7" rx="1.6" ry="1.6" fill="#fff"/><path d="M655.3 247.7C654.2 247 651.3 244.4 648.8 243.5C646.3 242.7 643 242.4 640.2 242.5C637.4 242.6 634.3 243.3 631.8 244.1C629.4 244.9 627.2 247.7 625.5 247.6C623.8 247.4 622.3 243.9 621.7 243.1L621.9 242.9C622.4 243.2 623.9 245 625.4 244.7C626.8 244.4 628.2 241.8 630.7 241C633.2 240.1 637 239.3 640.2 239.4C643.3 239.4 647.1 239.9 649.8 241.2C652.4 242.4 654.8 246 655.8 247Z" fill="#000"/><path d="M626.5 247.2C627.4 247.8 629.3 250.2 631.7 251.1C634.1 252 638.4 252.4 640.8 252.5C643.2 252.6 645.3 251.8 646.2 251.7" stroke="#111" stroke-width="0.8" stroke-linecap="round" fill="none"/><path d="M642.3 252.4C642.5 252.8 643.1 254.4 643.3 254.8" stroke="#222" stroke-width="0.6" stroke-linecap="round" fill="none"/><path d="M671.1 245.4C671.1 244.8 676.2 240.3 679.5 238.8C682.8 237.3 686.9 236.8 690.6 236.6C694.3 236.5 698 237.5 701.7 237.8C705.5 238.2 711.5 237.2 713.1 238.8C714.7 240.4 712.8 245 711.1 247.2C709.4 249.4 703.8 252.4 702.8 252C701.9 251.6 707.4 246.8 705.4 244.8C703.4 242.8 694.9 240.4 690.6 240C686.3 239.6 682.8 241.5 679.5 242.4C676.2 243.3 671.1 246 671.1 245.4Z" fill="#ecccc0"/><path d="M672.1 247.2C672.1 246.5 676.4 242.7 679.5 241.4C682.6 240.1 686.9 239.5 690.6 239.4C694.3 239.3 698.6 239.8 701.7 240.6C704.8 241.4 709.4 243.5 709.1 244.2C708.8 244.9 702.9 244.7 699.9 244.6C696.8 244.4 694 243.2 690.6 243.4C687.2 243.6 682.6 245.1 679.5 245.8C676.4 246.4 672.1 247.9 672.1 247.2Z" fill="#c8c8c8"/><ellipse cx="688.1" cy="245.9" rx="6" ry="6.4" fill="#555555" stroke="#161616" stroke-width="1.0"/><ellipse cx="688.1" cy="248.9" rx="3.9" ry="2.2" fill="#868686"/><ellipse cx="688.1" cy="245.6" rx="3" ry="3.3" fill="#1e1e1e"/><ellipse cx="686" cy="243.5" rx="1.8" ry="1.8" fill="#fff"/><path d="M671.8 246.8C673 245.7 675.8 241.7 679 240.2C682.1 238.7 686.7 237.9 690.5 237.7C694.4 237.5 699.1 238 702.2 238.9C705.2 239.7 707.3 242.4 709.1 242.7C710.9 242.9 712.3 240.9 713 240.5L713.2 240.7C712.5 241.5 711.1 245.5 709.1 245.7C707.1 246 704.3 243.1 701.2 242.3C698.2 241.6 694.2 241 690.7 241.1C687.1 241.2 683.1 241.6 680 242.7C677 243.8 673.7 246.8 672.4 247.6Z" fill="#000"/><path d="M708.1 245.4C707 246.2 704.6 248.9 701.7 250C698.8 251.1 693.6 251.8 690.6 252C687.6 252.2 685.1 251.5 683.9 251.4" stroke="#111" stroke-width="0.8" stroke-linecap="round" fill="none"/><path d="M688.8 252C688.6 252.4 687.8 254.2 687.6 254.6" stroke="#222" stroke-width="0.6" stroke-linecap="round" fill="none"/><path d="M660.6 259.4L657.8 265L661.2 268.9" stroke="#333" stroke-width="0.8" stroke-linecap="round" stroke-linejoin="round" fill="none"/><path d="M657 278.8C657.7 278.5 659.5 277.3 661 277C662.5 276.7 664.4 276.6 666 276.8C667.6 277 669.1 277.5 670.5 278C671.9 278.5 673.6 279.6 674.2 279.9" stroke="#555" stroke-width="0.7" stroke-linecap="round" fill="none"/><path d="M662.5 282C663.3 282 666.7 282.2 667.5 282.2" stroke="#aaa" stroke-width="0.6" stroke-linecap="round" fill="none"/><path d="M780.7 220.9C782.2 220.6 787 219.9 789.9 219.5C792.8 219 795.4 218.7 798.2 218.1C801 217.6 803.9 216.8 806.5 216.2C809.1 215.5 812.7 214.5 814 214.2L814.6 216C813.4 216.6 810.1 218.5 807.5 219.4C804.8 220.3 801.7 221 798.8 221.5C795.9 221.9 793.1 222.2 790.1 222.1C787.1 222.1 782.3 221.5 780.7 221.3Z" fill="#000"/><path d="M826.8 213.5C827.8 213.7 830.5 214.6 832.6 215.2C834.8 215.8 836.9 216.5 839.8 217C842.7 217.4 846.4 217.5 850 217.8C853.6 218 859.4 218.3 861.3 218.3L861.3 220.1C859.4 220.3 853.7 221.3 850 221.4C846.3 221.6 842.3 221.3 839.2 220.8C836.1 220.3 833.5 219.5 831.4 218.4C829.2 217.3 827.2 214.9 826.4 214.1Z" fill="#000"/><ellipse cx="810.8" cy="224" rx="3.2" ry="2.5" fill="#ecccc0" transform="rotate(30 810.8 224)"/><ellipse cx="832.6" cy="224" rx="4" ry="2.8" fill="#ecccc0" transform="rotate(-30 832.6 224)"/><path d="M812 232.1C811.9 231.7 807.4 228.5 804.7 227.5C802 226.6 798.6 226.4 795.6 226.4C792.6 226.4 789.7 227.3 786.7 227.8C783.7 228.2 778.9 227.7 777.7 228.9C776.6 230.2 778.1 233.6 779.6 235.2C781 236.7 785.6 238.8 786.3 238.4C787.1 238.1 782.4 234.7 784 233.1C785.5 231.5 792.3 229.4 795.8 228.9C799.2 228.4 802.1 229.7 804.8 230.2C807.5 230.8 812 232.6 812 232.1Z" fill="#ecccc0"/><path d="M811 233.5C811 233 807.4 230.4 804.8 229.5C802.3 228.7 798.7 228.4 795.7 228.5C792.7 228.5 789.3 229.1 786.8 229.8C784.3 230.6 780.7 232.4 780.9 232.8C781.2 233.3 786 232.9 788.5 232.7C790.9 232.5 793.1 231.4 795.9 231.4C798.7 231.4 802.5 232.4 805 232.7C807.5 233.1 811.1 234.1 811 233.5Z" fill="#c8c8c8"/><ellipse cx="792.5" cy="234.1" rx="5" ry="5.2" fill="#555555" stroke="#161616" stroke-width="1.0"/><ellipse cx="792.5" cy="236.6" rx="3.2" ry="1.8" fill="#868686"/><ellipse cx="792.5" cy="233.9" rx="2.5" ry="2.7" fill="#1e1e1e"/><ellipse cx="790.8" cy="232.1" rx="1.5" ry="1.5" fill="#fff"/><path d="M810.8 233.9C809.7 233.4 806.9 231.4 804.4 230.8C801.9 230.2 798.6 230 795.8 230.2C792.9 230.3 789.8 230.8 787.3 231.5C784.9 232.2 782.6 234.6 781 234.4C779.4 234.2 778.3 231.1 777.7 230.4L777.9 230.2C778.4 230.4 779.5 231.6 780.9 231.3C782.3 231 783.8 228.9 786.3 228.1C788.8 227.3 792.6 226.7 795.7 226.7C798.9 226.8 802.6 227.2 805.2 228.2C807.8 229.3 810.3 232.3 811.3 233.1Z" fill="#000"/><path d="M782 233.7C782.9 234.2 784.8 236.1 787.2 236.8C789.5 237.5 793.8 237.8 796.2 237.9C798.6 237.9 800.7 237.3 801.6 237.2" stroke="#111" stroke-width="0.8" stroke-linecap="round" fill="none"/><path d="M797.7 237.8C797.9 238.1 798.6 239.4 798.7 239.7" stroke="#222" stroke-width="0.6" stroke-linecap="round" fill="none"/><path d="M827.3 232.8C827.3 232.3 832.2 228.3 835.3 227C838.4 225.7 842.4 225.1 846 224.8C849.6 224.5 853.2 225.3 856.9 225.4C860.5 225.6 866.5 224.6 868.1 225.8C869.7 227.1 867.9 231 866.3 232.9C864.7 234.8 859.3 237.5 858.3 237.2C857.4 236.9 862.7 232.7 860.7 231.1C858.6 229.5 850.3 227.8 846.1 227.6C841.9 227.4 838.5 229.1 835.4 230C832.3 230.8 827.3 233.3 827.3 232.8Z" fill="#ecccc0"/><path d="M828.3 234.2C828.3 233.6 832.4 230.4 835.4 229.2C838.3 228 842.5 227.3 846.1 227.1C849.7 226.9 853.9 227.2 856.9 227.7C860 228.3 864.5 229.9 864.2 230.5C864 231 858.3 231.1 855.3 231.1C852.3 231.1 849.5 230.1 846.2 230.4C842.9 230.7 838.5 232.1 835.5 232.8C832.5 233.4 828.4 234.8 828.3 234.2Z" fill="#c8c8c8"/><ellipse cx="843.3" cy="233.2" rx="5.6" ry="5.9" fill="#555555" stroke="#161616" stroke-width="1.0"/><ellipse cx="843.3" cy="236" rx="3.7" ry="2" fill="#868686"/><ellipse cx="843.3" cy="232.9" rx="2.8" ry="3.1" fill="#1e1e1e"/><ellipse cx="841.4" cy="231" rx="1.7" ry="1.7" fill="#fff"/><path d="M828 233.7C829.1 232.7 831.8 229.2 834.8 227.8C837.8 226.4 842.2 225.6 846 225.3C849.7 224.9 854.3 225.2 857.3 225.8C860.3 226.4 862.4 228.6 864.2 228.8C866 229.1 867.4 227.5 868 227.2L868.2 227.5C867.6 228.2 866.2 231.8 864.3 232.1C862.4 232.5 859.6 230.1 856.6 229.6C853.6 229.1 849.7 228.8 846.2 228.9C842.8 229.1 838.8 229.6 835.9 230.5C833 231.5 829.9 234 828.7 234.7Z" fill="#000"/><path d="M863.3 231.5C862.3 232.2 860 234.5 857.2 235.5C854.4 236.5 849.3 237.3 846.5 237.6C843.6 237.9 841.1 237.4 840 237.3" stroke="#111" stroke-width="0.8" stroke-linecap="round" fill="none"/><path d="M844.7 237.7C844.5 238 843.8 239.5 843.7 239.9" stroke="#222" stroke-width="0.6" stroke-linecap="round" fill="none"/><path d="M866.300 207.500C867.500 213 872.300 217 872.300 222A6 6 0 0 1 860.300 222C860.300 217 865.100 213 866.300 207.500Z" fill="#5fdcea" stroke="#155e66" stroke-width=".9"/><path d="M861 219.5C861.7 219.7 863.7 220.5 865 220.5C866.3 220.5 868.3 219.8 869 219.6" stroke="#2aa8b8" stroke-width="0.7" stroke-linecap="round" fill="none"/><path d="M818.2 247.1L815.4 255.3L817.6 258" stroke="#888" stroke-width="0.6" stroke-linecap="round" stroke-linejoin="round" fill="none" stroke-dasharray="2.2 1.2"/><path d="M815 268.5C815.9 267.8 818 267.3 820 266.8C822 266.3 824.7 265.9 827 265.5C829.3 265.1 832.1 264.4 834 264.3C835.9 264.2 837.6 264.1 838.5 265C839.4 265.9 839.8 268.6 839.5 270C839.2 271.4 838.6 272.6 837 273.5C835.4 274.4 832.5 274.9 830 275.3C827.5 275.7 824.2 276 822 275.8C819.8 275.6 817.7 274.8 816.5 274C815.3 273.2 815.1 271.9 814.9 271C814.6 270.1 814.1 269.2 815 268.5Z" fill="#fff" stroke="#111" stroke-width="0.9" stroke-linejoin="round"/><path d="M818 270.5C819 270.2 822.2 269 824 269C825.8 269 827.5 270.6 829 270.5C830.5 270.4 831.5 268.7 833 268.5C834.5 268.3 837.2 269.3 838 269.5" stroke="#444" stroke-width="0.6" stroke-linecap="round" fill="none"/><path d="M947.5 239C949.3 237.5 953.4 237.3 958 238C962.6 238.7 970.2 242 975 243C979.8 244 982.8 244.3 987 244C991.2 243.7 994.5 242.3 1000 241C1005.5 239.7 1013.7 237.4 1020 236C1026.3 234.6 1033.8 233.2 1038 232.8C1042.2 232.4 1044.1 231.5 1045.5 233.5C1046.9 235.5 1046.6 240.9 1046.5 245C1046.4 249.1 1046.1 254.8 1045 258C1043.9 261.2 1043.3 262.8 1040 264C1036.7 265.2 1030.8 265.2 1025 265.5C1019.2 265.8 1010.3 266.3 1005 266C999.7 265.7 996.3 264.2 993 263.5C989.7 262.8 987.7 261.9 985 262C982.3 262.1 980.3 263.3 977 264C973.7 264.7 969 266 965 266.2C961 266.4 955.7 266.7 953 265C950.3 263.3 950 259 949 256C948 253 947.2 249.8 947 247C946.8 244.2 945.7 240.5 947.5 239Z" fill="#9e9e9e"/><path d="M957.3 230.6C959 231.6 964.2 235 967.3 236.4C970.4 237.9 973.4 238.3 975.9 239.3C978.4 240.4 981.2 242.1 982.3 242.6L981.7 245C980.4 244.9 976.9 245.4 974.1 244.7C971.3 243.9 967.6 242.8 964.7 240.6C961.8 238.4 958 232.9 956.7 231.4Z" fill="#e3bab0"/><path d="M997.6 240.3C999.1 239.6 1003.5 238.1 1006.6 236.1C1009.7 234 1013 230.8 1016.2 228.1C1019.3 225.3 1022.7 222.2 1025.6 219.3C1028.5 216.4 1032.3 212.2 1033.7 210.8L1034.3 211.2C1033.3 213 1030.8 218.2 1028.4 221.7C1026 225.1 1023 228.7 1019.8 231.9C1016.7 235.2 1013 239.1 1009.4 240.9C1005.8 242.7 1000.2 242.4 998.4 242.7Z" fill="#e3bab0"/><path d="M951.5 240C952.8 238.4 956.9 242.3 960 243.5C963.1 244.7 966.9 246.2 970 247C973.1 247.8 977.5 247.2 978.7 248.5C980 249.8 978.6 252.9 977.5 255C976.4 257.1 974.2 259.6 972 261C969.8 262.4 966.6 263.5 964 263.5C961.4 263.5 958.4 262.8 956.5 261C954.6 259.2 953.3 256.5 952.5 253C951.7 249.5 950.2 241.6 951.5 240Z" fill="#fff" stroke="#111" stroke-width="1.3" stroke-linejoin="round"/><path d="M1003.5 248.5C1004.6 246.4 1010.2 247.2 1014 246C1017.8 244.8 1021.9 242.9 1026 241.5C1030.1 240.1 1036.8 236.6 1038.8 237.5C1040.8 238.4 1038.8 243.9 1038 247C1037.2 250.1 1036 253.5 1034 256C1032 258.5 1029 260.8 1026 262C1023 263.2 1019.1 264.1 1016 263.5C1012.9 262.9 1009.6 261 1007.5 258.5C1005.4 256 1002.4 250.6 1003.5 248.5Z" fill="#fff" stroke="#111" stroke-width="1.3" stroke-linejoin="round"/><path d="M954.5 252C954.4 251.2 955.8 255.6 956.5 255.5C957.2 255.4 957.8 251.3 958.5 251.5C959.2 251.7 960.2 256.7 961 256.5C961.8 256.3 962.7 250.6 963.5 250.5C964.3 250.4 965.2 255.8 966 256C966.8 256.2 967.7 251.5 968.5 251.5C969.3 251.5 970.1 256 971 256C971.9 256 973.2 251.5 974 251.5C974.8 251.5 975.8 254.5 975.5 256C975.2 257.5 973.9 259.4 972 260.5C970.1 261.6 966.5 262.8 964 262.8C961.5 262.8 958.6 262.3 957 260.5C955.4 258.7 954.6 252.8 954.5 252Z" fill="#ff9a1a" stroke="#7a3a00" stroke-width="0.5" stroke-linejoin="round"/><path d="M955.5 256C956 255.4 958.6 257.1 960 257C961.4 256.9 962.7 255.3 964 255.3C965.3 255.3 966.4 257 968 257C969.6 257 972.8 254.9 973.5 255.5C974.2 256.1 973.6 259.3 972 260.5C970.4 261.7 966.5 262.8 964 262.8C961.5 262.8 958.4 261.6 957 260.5C955.6 259.4 955 256.6 955.5 256Z" fill="#cc0500"/><path d="M1008.5 253.5C1008.8 253.2 1010.2 257.3 1011 257C1011.8 256.7 1012.6 251.6 1013.5 251.5C1014.4 251.4 1015.5 256.8 1016.5 256.5C1017.5 256.2 1018.5 249.7 1019.5 249.5C1020.5 249.3 1021.4 255.8 1022.5 255.5C1023.6 255.2 1024.9 248.2 1026 248C1027.1 247.8 1027.9 254.2 1029 254C1030.1 253.8 1031.5 246.8 1032.5 246.5C1033.5 246.2 1034.9 250.3 1035 252C1035.1 253.7 1034.5 254.9 1033 256.5C1031.5 258.1 1028.8 260.4 1026 261.5C1023.2 262.6 1018.8 263.3 1016 262.8C1013.2 262.3 1010.2 260.1 1009 258.5C1007.8 256.9 1008.2 253.8 1008.5 253.5Z" fill="#ff9a1a" stroke="#7a3a00" stroke-width="0.5" stroke-linejoin="round"/><path d="M1009 256.5C1009.9 256.3 1013 257.7 1015 257.5C1017 257.3 1019 255.8 1021 255.5C1023 255.2 1024.9 256.5 1027 256C1029.1 255.5 1032.8 252.2 1033.5 252.5C1034.2 252.8 1032.8 256 1031.5 257.5C1030.2 259 1028.6 260.6 1026 261.5C1023.4 262.4 1018.8 263.2 1016 262.8C1013.2 262.4 1010.7 259.9 1009.5 258.8C1008.3 257.8 1008.1 256.7 1009 256.5Z" fill="#cc0500"/><path d="M947.5 219C948.6 220 952.1 223 954.3 224.8C956.5 226.5 958.5 228.2 960.7 229.7C962.9 231.2 965.3 232.7 967.5 234C969.7 235.3 971.9 236.3 974 237.6C976.1 239 979.2 241.2 980.3 241.9L979.9 242.9C978.6 242.8 974.6 243 972 242.4C969.4 241.7 967 240.4 964.5 239C962.1 237.6 959.5 235.9 957.3 233.9C955.2 231.9 953.4 229.7 951.7 227.2C950 224.8 947.9 220.7 947.1 219.4Z" fill="#000"/><path d="M994.9 238.4C996 237.6 999.6 234.9 1001.8 233.2C1004 231.6 1006 230.2 1008.2 228.5C1010.5 226.7 1012.8 224.8 1015.2 222.8C1017.6 220.8 1020.4 218.3 1022.5 216.5C1024.7 214.7 1026.3 213.4 1028.2 212.1C1030 210.8 1032.8 209.2 1033.8 208.6L1034 209C1033.3 209.8 1031.3 212.1 1029.8 213.9C1028.4 215.6 1027.3 217.3 1025.5 219.5C1023.6 221.6 1021.1 224.5 1018.8 226.8C1016.5 229.1 1014.2 231.3 1011.8 233.1C1009.3 235 1007 236.7 1004.2 237.8C1001.5 238.8 996.8 239.1 995.3 239.4Z" fill="#000"/><ellipse cx="988.5" cy="238.5" rx="3.4" ry="5" fill="#e9c4bc"/><path d="M986.8 234.5C986.8 235.5 987 239.5 987 240.5" stroke="#7a4a44" stroke-width="0.8" stroke-linecap="round" fill="none"/><path d="M989.8 234.5C989.8 235.3 990 238.7 990 239.5" stroke="#7a4a44" stroke-width="0.8" stroke-linecap="round" fill="none"/><path d="M984.8 264.8L982.8 270.3L987 273.6" stroke="#333" stroke-width="0.8" stroke-linecap="round" stroke-linejoin="round" fill="none"/><path d="M976.5 280C978 278.8 981.8 278.9 985 278.5C988.2 278.1 992.2 277.8 996 277.3C999.8 276.8 1004.8 275.8 1008 275.5C1011.2 275.2 1013.3 274.6 1015 275.3C1016.7 276.1 1017.9 277.6 1018.4 280C1018.9 282.4 1018.7 287.5 1018 290C1017.3 292.5 1016 294.2 1014 295C1012 295.8 1009 294.9 1006 294.5C1003 294.1 999.3 292.9 996 292.5C992.7 292.1 988.9 292.2 986 292C983.1 291.8 980.2 292.5 978.5 291.5C976.8 290.5 976.3 287.9 976 286C975.7 284.1 975 281.2 976.5 280Z" fill="#fff" stroke="#111" stroke-width="0.9" stroke-linejoin="round"/><path d="M978 284.5C979.7 284.4 984.7 284.2 988 284C991.3 283.8 994.8 283.2 998 283C1001.2 282.8 1004.7 283.1 1007 282.5C1009.3 281.9 1011.2 280 1012 279.5" stroke="#444" stroke-width="0.6" stroke-linecap="round" fill="none"/><path d="M1007 282.5C1007.7 283.2 1009.3 286.1 1011 286.5C1012.7 286.9 1016 285.2 1017 285" stroke="#444" stroke-width="0.6" stroke-linecap="round" fill="none"/>
<path d="M83.1 324.2C84.5 323.4 88.1 320.8 91.2 319.5C94.2 318.2 97.8 317.1 101.2 316.4C104.7 315.7 108.1 315.4 111.8 315.3C115.5 315.1 121.5 315.4 123.4 315.5L123.4 315.9C121.5 316.3 115.7 317.2 112.2 317.9C108.6 318.7 105.4 319.5 102.2 320.4C99 321.3 95.7 322.4 92.8 323.5C90 324.7 86.2 326.8 84.9 327.4Z" fill="#000"/><ellipse cx="92" cy="330.5" rx="5" ry="2" fill="#ecccc0" transform="rotate(-25 92 330.5)"/><path d="M87.1 337.7C87 337.2 90.9 332.6 93.5 330.9C96.1 329.2 99.6 328.1 102.7 327.5C105.9 326.9 109.2 327.2 112.4 327C115.5 326.9 120.3 325.3 121.8 326.4C123.3 327.5 122.5 331.8 121.4 333.9C120.4 336 116.1 339.4 115.3 339.1C114.4 338.9 118.5 334 116.5 332.6C114.5 331.1 106.9 330.2 103.2 330.4C99.4 330.7 96.7 332.8 94 334C91.4 335.2 87.2 338.3 87.1 337.7Z" fill="#ecccc0"/><path d="M88.4 339.1C88.3 338.5 91.4 334.7 93.9 333.2C96.3 331.6 100 330.5 103.1 329.9C106.2 329.3 110 329.2 112.7 329.4C115.5 329.7 119.7 330.9 119.6 331.5C119.4 332.2 114.4 332.8 111.7 333.1C109.1 333.4 106.5 332.7 103.6 333.3C100.8 334 97 335.9 94.5 336.9C91.9 337.9 88.5 339.8 88.4 339.1Z" fill="#c8c8c8"/><ellipse cx="100.5" cy="335.9" rx="5.2" ry="5.4" fill="#555555" stroke="#161616" stroke-width="1.0"/><ellipse cx="100.5" cy="338.5" rx="3.4" ry="1.9" fill="#868686"/><ellipse cx="100.5" cy="335.7" rx="2.6" ry="2.9" fill="#1e1e1e"/><ellipse cx="98.7" cy="333.9" rx="1.6" ry="1.6" fill="#fff"/><path d="M88 338.8C88.9 337.7 90.8 333.8 93.2 332.1C95.7 330.3 99.5 329.1 102.8 328.3C106.1 327.6 110.2 327.5 112.9 327.8C115.7 328.1 117.8 330.1 119.3 330.1C120.8 330.1 121.5 328.3 121.9 327.9L122.2 328C121.8 328.9 121.4 332.4 119.8 333C118.2 333.5 115.3 331.3 112.6 331.1C109.8 330.8 106.4 330.9 103.4 331.5C100.4 332 97 332.9 94.6 334.2C92.1 335.6 89.7 338.6 88.7 339.4Z" fill="#000"/><path d="M118.7 332.7C117.9 333.5 116.3 336.2 114 337.5C111.7 338.9 107.3 340.2 104.8 340.8C102.3 341.4 100 341.1 99.1 341.2" stroke="#111" stroke-width="0.8" stroke-linecap="round" fill="none"/><path d="M103.2 341C103.1 341.4 102.8 343.1 102.7 343.5" stroke="#222" stroke-width="0.6" stroke-linecap="round" fill="none"/><path d="M84 355C85.3 352.4 89.5 354.7 92 354.5C94.5 354.3 97 353.4 99 353.6C101 353.9 103 354.6 104 356C105 357.4 105.5 360.1 105 362C104.5 363.9 102.7 366.1 101 367.5C99.3 368.9 97.2 369.9 95 370.5C92.8 371.1 89.8 371.1 88 371C86.2 370.9 84.7 372.7 84 370C83.3 367.3 82.7 357.6 84 355Z" fill="#8b0000" stroke="#000" stroke-width="1" stroke-linejoin="round"/><path d="M84 356C85.3 355.1 89.7 355.6 92 355.3C94.3 355.1 97.3 354 98 354.5C98.7 355 97.3 357.5 96 358.5C94.7 359.5 92 360.1 90 360.5C88 360.9 85 361.8 84 361C83 360.2 82.7 356.9 84 356Z" fill="#fff" stroke="#000" stroke-width="0.7" stroke-linejoin="round"/><path d="M84 367C85 363.2 88.4 366.2 90 366.5C91.6 366.8 93 367.1 93.5 369C94 370.9 93.2 375.2 93 378C92.8 380.8 93 384.1 92.5 386C92 387.9 91.4 388.9 90 389.5C88.6 390.1 85 393.2 84 389.5C83 385.8 83 370.8 84 367Z" fill="#ff8f9a" stroke="#000" stroke-width="0.8" stroke-linejoin="round"/><path d="M194 340C195.8 338.2 200.7 337.4 205 337C209.3 336.6 215.5 337.3 220 337.3C224.5 337.3 227.7 337.1 232 337C236.3 336.9 241.3 336.7 246 336.8C250.7 336.9 256.2 336.8 260 337.5C263.8 338.2 267.2 339.2 268.5 341C269.8 342.8 269.1 345.9 268 348C266.9 350.1 265 352.5 262 353.5C259 354.5 253.7 354.6 250 354.2C246.3 353.8 243.2 351.9 240 351C236.8 350.1 234 348.8 231 348.5C228 348.2 225.2 348.2 222 349C218.8 349.8 215.7 352.7 212 353.5C208.3 354.3 202.9 354.9 200 354C197.1 353.1 195.5 350.3 194.5 348C193.5 345.7 192.2 341.8 194 340Z" fill="#ffd0d0"/><ellipse cx="217.5" cy="334" rx="3.2" ry="2.4" fill="#f0c4b4" transform="rotate(30 217.5 334)"/><ellipse cx="238" cy="333.5" rx="4" ry="2.6" fill="#f0c4b4" transform="rotate(-30 238 333.5)"/><path d="M219.4 345C219.5 343.6 216.5 340.9 214.3 339.6C212.1 338.4 209 337.7 206.3 337.4C203.6 337.2 200.4 337.5 198.2 338.1C195.9 338.6 192.7 339.6 192.6 340.9C192.5 342.3 195.5 344.9 197.7 346.1C199.9 347.4 203 348 205.7 348.2C208.4 348.5 211.6 348.2 213.9 347.6C216.2 347.1 219.4 346.3 219.4 345Z" fill="#fff"/><path d="M219.1 345.3C218.2 344.5 215.8 341.8 213.7 340.7C211.5 339.7 208.7 339.2 206.1 339C203.6 338.8 200.8 339.1 198.6 339.7C196.3 340.2 194 342.7 192.5 342.3C191 342 190.1 338.5 189.7 337.7L189.9 337.5C190.3 337.8 191.4 339.7 192.7 339.5C194 339.3 195.5 337.1 197.7 336.4C200 335.8 203.6 335.5 206.5 335.9C209.3 336.2 212.7 337.1 214.9 338.5C217.1 340 218.9 343.6 219.8 344.6Z" fill="#000"/><path d="M193.5 342C194.2 342.7 195.7 345.2 197.7 346.2C199.8 347.3 203.6 348.1 205.7 348.4C207.9 348.8 209.8 348.2 210.6 348.2" stroke="#111" stroke-width="0.8" stroke-linecap="round" fill="none"/><path d="M207.1 348.5C207.2 348.9 207.6 350.5 207.8 350.9" stroke="#222" stroke-width="0.6" stroke-linecap="round" fill="none"/><path d="M235.1 345C234.9 343.6 238.1 340.6 240.4 339.2C242.7 337.8 246 337 248.9 336.6C251.8 336.2 255.2 336.4 257.6 336.9C260.1 337.4 263.6 338.3 263.7 339.7C263.8 341.1 260.7 344 258.4 345.3C256.1 346.7 252.7 347.5 249.9 347.9C247 348.2 243.6 348 241.1 347.5C238.6 347 235.2 346.3 235.1 345Z" fill="#fff"/><path d="M234.7 344.6C235.5 343.5 237.3 339.7 239.7 338C242 336.4 245.6 335.4 248.6 334.9C251.7 334.4 255.5 334.6 258 335.2C260.5 335.7 262.1 338 263.6 338.2C265 338.3 266.3 336.4 266.8 336L267 336.2C266.5 337 265.5 340.8 263.8 341.2C262.2 341.6 259.7 339.2 257.3 338.7C254.8 338.2 251.8 338 249.1 338.3C246.4 338.5 243.4 339.2 241.1 340.4C238.8 341.5 236.4 344.5 235.4 345.3Z" fill="#000"/><path d="M262.8 340.9C262.1 341.6 260.5 344.3 258.4 345.5C256.2 346.7 252.2 347.7 249.9 348.1C247.6 348.5 245.5 348 244.6 348" stroke="#111" stroke-width="0.8" stroke-linecap="round" fill="none"/><path d="M248.4 348.2C248.3 348.6 247.9 350.3 247.8 350.7" stroke="#222" stroke-width="0.6" stroke-linecap="round" fill="none"/><path d="M207.5 347.4C200.1 341.9 204.3 336.8 207.5 340.7C210.7 336.8 214.9 341.9 207.5 347.4Z" fill="#ff5c6c"/><ellipse cx="205.7" cy="341.2" rx="1.3" ry="1.3" fill="#ffd6da"/><path d="M248.5 347.3C240.5 341.3 245 335.8 248.5 340.1C252 335.8 256.5 341.3 248.5 347.3Z" fill="#ff5c6c"/><ellipse cx="246.5" cy="340.6" rx="1.4" ry="1.4" fill="#ffd6da"/><path d="M200.3 350L197.5 357.4" stroke="#ff7f5c" stroke-width="1.1"/><path d="M202.4 350L199.6 357.4" stroke="#ff7f5c" stroke-width="1.1"/><path d="M204.4 350L201.6 357.4" stroke="#ff7f5c" stroke-width="1.1"/><path d="M206.5 350L203.7 357.4" stroke="#ff7f5c" stroke-width="1.1"/><path d="M208.6 350L205.8 357.4" stroke="#ff7f5c" stroke-width="1.1"/><path d="M210.7 350L207.9 357.4" stroke="#ff7f5c" stroke-width="1.1"/><path d="M212.7 350L209.9 357.4" stroke="#ff7f5c" stroke-width="1.1"/><path d="M214.8 350L212 357.4" stroke="#ff7f5c" stroke-width="1.1"/><path d="M245.3 349.6L242.5 356.9" stroke="#ff7f5c" stroke-width="1.1"/><path d="M247.6 349.6L244.8 356.9" stroke="#ff7f5c" stroke-width="1.1"/><path d="M250 349.6L247.2 356.9" stroke="#ff7f5c" stroke-width="1.1"/><path d="M252.3 349.6L249.5 356.9" stroke="#ff7f5c" stroke-width="1.1"/><path d="M254.6 349.6L251.8 356.9" stroke="#ff7f5c" stroke-width="1.1"/><path d="M257 349.6L254.2 356.9" stroke="#ff7f5c" stroke-width="1.1"/><path d="M259.3 349.6L256.5 356.9" stroke="#ff7f5c" stroke-width="1.1"/><path d="M261.6 349.6L258.8 356.9" stroke="#ff7f5c" stroke-width="1.1"/><path d="M264 349.6L261.2 356.9" stroke="#ff7f5c" stroke-width="1.1"/><path d="M266.3 349.6L263.5 356.9" stroke="#ff7f5c" stroke-width="1.1"/><path d="M190.9 337.8C191.1 336.7 191 333.1 192.2 331C193.5 329 195.7 326.7 198.2 325.3C200.8 323.9 204.4 323.1 207.6 322.6C210.8 322.1 215.9 322.4 217.5 322.3L217.9 325.3C216.3 325.5 211.4 326.3 208.4 327C205.5 327.6 202.5 328.3 200.2 329.3C197.9 330.3 196.2 331.5 194.8 333C193.3 334.4 191.9 337.2 191.3 338Z" fill="#000"/><path d="M232.5 320.2C234.2 320.4 238.9 320.2 242.5 320.9C246.1 321.6 250.6 323.1 254.2 324.4C257.7 325.8 260.9 327.3 263.7 328.9C266.5 330.6 269.9 333.6 271.1 334.5L270.9 334.9C269.5 334.4 265.3 333.1 262.3 332.1C259.2 331 256.1 329.9 252.6 328.8C249.2 327.6 244.9 326.1 241.5 325.1C238.1 324.2 233.7 323.5 232.1 323.2Z" fill="#000"/><path d="M223 354.2L220.3 357.5L223.6 360.2" stroke="#777" stroke-width="0.7" stroke-linecap="round" stroke-linejoin="round" fill="none"/><path d="M221 366.5C221.6 366.2 225 368.5 227 369C229 369.5 231.2 369.6 233 369.3C234.8 369.1 236.6 368.2 238 367.5C239.4 366.8 241 364.6 241.5 365C242 365.4 241.9 368.6 241 370C240.1 371.4 238 372.8 236 373.5C234 374.2 231.1 374.7 229 374.3C226.9 373.9 224.8 372.3 223.5 371C222.2 369.7 220.4 366.8 221 366.5Z" fill="#8b0000" stroke="#000" stroke-width="1" stroke-linejoin="round"/><path d="M233.5 370C233.8 369.1 235 368 236 367.5C237 367 238.8 366.6 239.5 367C240.2 367.4 240.8 369 240.5 370C240.2 371 238.5 372.3 237.5 372.8C236.5 373.3 235.2 373.3 234.5 372.8C233.8 372.3 233.2 370.9 233.5 370Z" fill="#ff8f9a" stroke="#000" stroke-width="0.6" stroke-linejoin="round"/><path d="M344.9 314.7C346.1 314.1 349.3 311.9 351.7 311.2C354.1 310.4 356.7 310.1 359.3 310.3C362 310.5 364.9 311.3 367.6 312.3C370.4 313.4 374.4 315.9 375.8 316.6L375 318.6C373.6 318.2 369.1 316.8 366.4 316.1C363.7 315.3 361.2 314.5 358.9 314.1C356.5 313.8 354.6 313.9 352.3 314C350 314.2 346.3 315 345.1 315.1Z" fill="#000"/><path d="M391.7 316.6C392.9 315.8 396.4 313.1 399.2 311.7C402.1 310.3 405.5 309 408.9 308.5C412.2 307.9 415.8 308 419.1 308.6C422.5 309.2 427.4 311.4 429 312L429 312.4C427.3 312.4 422.1 312 418.9 312C415.6 312 412.6 312 409.5 312.5C406.5 313.1 403.6 314.3 400.8 315.3C397.9 316.3 394.1 318 392.7 318.6Z" fill="#000"/><ellipse cx="369" cy="325.5" rx="4.5" ry="2.4" fill="#ecccc0" transform="rotate(35 369 325.5)"/><ellipse cx="399" cy="325" rx="5" ry="2.6" fill="#ecccc0" transform="rotate(-35 399 325)"/><ellipse cx="357" cy="333.5" rx="9" ry="1.3" fill="#ecccc0" transform="rotate(-5 357 333.5)"/><ellipse cx="412" cy="333.5" rx="10" ry="1.3" fill="#ecccc0" transform="rotate(5 412 333.5)"/><path d="M344.3 332.3C345.3 332.4 348.3 333 350.3 333.2C352.3 333.3 354.2 333.4 356.2 333.1C358.2 332.8 360.2 332.2 362.5 331.6C364.8 331 368.6 329.9 369.8 329.5L370 330.1C368.9 330.8 365.7 333.3 363.5 334.4C361.3 335.4 358.9 336.2 356.6 336.5C354.3 336.8 351.8 336.7 349.7 336C347.6 335.4 345.1 333.3 344.1 332.7Z" fill="#000"/><path d="M395.8 330.7C396.9 331 400.4 332.2 402.4 332.6C404.4 333 405.7 333 407.9 332.9C410.1 332.8 413.1 332.2 415.8 331.9C418.4 331.5 421.7 330.9 423.9 330.9C426.1 330.9 428.2 331.9 429 332.1L429 332.5C428.2 332.6 426.2 332.7 424.1 333.1C422 333.5 418.9 334.2 416.2 334.7C413.6 335.3 410.5 336.2 408.1 336.3C405.6 336.4 403.7 336.2 401.6 335.4C399.5 334.6 396.6 332 395.6 331.3Z" fill="#000"/><path d="M378.1 343.4L375 350.1L378.1 354.2" stroke="#999" stroke-width="0.6" stroke-linecap="round" stroke-linejoin="round" fill="none"/><path d="M375.4 365C376.2 365.3 378.6 366.8 380 367C381.4 367.2 382.9 367.2 384 366.5C385.1 365.8 385.9 363.9 386.5 362.5C387.1 361.1 387.4 359 387.6 358.3" stroke="#333" stroke-width="0.7" stroke-linecap="round" fill="none"/><path d="M387.6 358.3C387.7 359.2 387.6 362.3 388 364C388.4 365.7 388.9 367.1 390 368.5C391.1 369.9 393.6 371.9 394.3 372.6" stroke="#333" stroke-width="0.7" stroke-linecap="round" fill="none"/><ellipse cx="364.5" cy="362.9" rx="2.6" ry="2.1" fill="#f7c66b" stroke="#7a5a1a" stroke-width="0.6" transform="rotate(30 364.5 362.9)"/><ellipse cx="362.6" cy="369.9" rx="1.8" ry="1.5" fill="#f7c66b" stroke="#7a5a1a" stroke-width="0.6"/><ellipse cx="396.2" cy="364.5" rx="2" ry="1.7" fill="#f7c66b" stroke="#7a5a1a" stroke-width="0.6"/><path d="M485.8 315.5C487.3 314.6 491.3 311.7 494.6 310.5C497.8 309.3 502 308.5 505.3 308.2C508.6 307.9 511.5 308.2 514.3 308.8C517.1 309.3 520.8 311.1 522.1 311.6L521.3 314.4C520 314.1 516.3 313.2 513.7 312.8C511 312.5 508.6 312.3 505.5 312.4C502.5 312.5 498.7 312.9 495.4 313.5C492.2 314.1 487.6 315.5 486 315.9Z" fill="#000"/><path d="M538.7 317.7C540 318.2 543.7 319.8 546.8 320.7C549.9 321.6 554 322.5 557.3 323C560.7 323.6 563.6 323.7 567 324.1C570.4 324.5 576.1 325 578 325.2L578 326.2C576.2 326.6 570.6 328.1 567 328.5C563.4 328.9 560.1 328.9 556.5 328.4C552.8 327.8 548.4 326.6 545.2 325.3C542 324 538.7 321.1 537.3 320.3Z" fill="#000"/><path d="M527 315C527.2 315.8 528.1 318.4 528.5 320C528.9 321.6 529.3 323.8 529.5 324.5" stroke="#aaa" stroke-width="0.6" stroke-linecap="round" fill="none"/><path d="M530.5 316C530.7 317 531.3 321 531.5 322" stroke="#bbb" stroke-width="0.6" stroke-linecap="round" fill="none"/><ellipse cx="521" cy="326.5" rx="2.4" ry="3" fill="#f0cfc8"/><ellipse cx="539.5" cy="326.5" rx="2.6" ry="3" fill="#f0cfc8"/><path d="M522 330.5C523.3 330.4 527.4 330.2 530 330.2C532.6 330.2 536.2 330.6 537.5 330.7" stroke="#c4c4c4" stroke-width="0.8" stroke-linecap="round" fill="none"/><path d="M522 332.2C523.3 332.1 527.4 331.9 530 331.9C532.6 331.9 536.2 332.3 537.5 332.4" stroke="#c4c4c4" stroke-width="0.8" stroke-linecap="round" fill="none"/><path d="M522 334C523.3 333.9 527.4 333.7 530 333.7C532.6 333.7 536.2 334.1 537.5 334.2" stroke="#c4c4c4" stroke-width="0.8" stroke-linecap="round" fill="none"/><path d="M522 335.8C523.3 335.8 527.4 335.5 530 335.5C532.6 335.5 536.2 335.9 537.5 336" stroke="#c4c4c4" stroke-width="0.8" stroke-linecap="round" fill="none"/><path d="M522 337.6C523.3 337.6 527.4 337.3 530 337.3C532.6 337.3 536.2 337.7 537.5 337.8" stroke="#c4c4c4" stroke-width="0.8" stroke-linecap="round" fill="none"/><path d="M522.5 334.1C522.5 333.5 518 329.2 515.1 327.7C512.3 326.3 508.6 325.7 505.3 325.4C502 325.2 498.7 326 495.4 326.2C492 326.4 486.7 325.3 485.2 326.7C483.8 328.1 485.3 332.4 486.7 334.5C488.2 336.5 493.1 339.5 493.9 339.1C494.8 338.8 490 334.2 491.8 332.4C493.7 330.7 501.3 328.7 505.2 328.5C509.1 328.3 512.1 330.1 515 331C517.9 332 522.5 334.6 522.5 334.1Z" fill="#ecccc0"/><path d="M521.5 335.7C521.5 335 517.7 331.5 515 330.2C512.3 328.9 508.5 328.2 505.2 328C501.9 327.7 498.1 328.1 495.3 328.7C492.5 329.3 488.3 331.2 488.6 331.8C488.8 332.4 494 332.4 496.8 332.4C499.6 332.4 502.1 331.3 505.1 331.6C508.1 331.9 512.2 333.4 514.9 334.1C517.6 334.8 521.4 336.3 521.5 335.7Z" fill="#c8c8c8"/><ellipse cx="507.5" cy="333.5" rx="5" ry="5.2" fill="#555555" stroke="#161616" stroke-width="1.0"/><ellipse cx="507.5" cy="336" rx="3.2" ry="1.8" fill="#868686"/><ellipse cx="507.5" cy="333.3" rx="2.5" ry="2.7" fill="#1e1e1e"/><ellipse cx="505.8" cy="331.6" rx="1.5" ry="1.5" fill="#fff"/><path d="M521.1 336C520 335.3 517.1 332.5 514.5 331.4C511.8 330.3 508.2 329.8 505.1 329.7C502 329.5 498.4 329.8 495.7 330.5C492.9 331.1 490.3 333.6 488.5 333.3C486.7 333 485.7 329.3 485.1 328.5L485.3 328.2C485.8 328.6 487 330.5 488.6 330.2C490.2 330 492.1 327.6 494.9 327C497.7 326.3 501.9 325.9 505.3 326.3C508.8 326.6 512.9 327.4 515.6 328.9C518.4 330.4 520.7 334.2 521.8 335.3Z" fill="#000"/><path d="M489.5 332.9C490.4 333.6 492.4 336.2 495 337.3C497.5 338.4 502.2 339.2 504.8 339.5C507.4 339.8 509.8 339.2 510.8 339.2" stroke="#111" stroke-width="0.8" stroke-linecap="round" fill="none"/><path d="M506.5 339.6C506.6 340 507.2 341.6 507.4 342" stroke="#222" stroke-width="0.6" stroke-linecap="round" fill="none"/><path d="M539.6 333.1C539.6 332.6 544.8 328.9 548 327.7C551.3 326.6 555.3 326.4 558.9 326.4C562.5 326.5 566 327.5 569.7 328C573.3 328.5 579.3 328 580.8 329.5C582.3 330.9 580.2 334.9 578.4 336.7C576.6 338.5 571 340.9 570.1 340.5C569.2 340.1 574.8 336.2 572.9 334.3C571 332.5 563 329.9 558.8 329.4C554.6 328.8 551.1 330.3 547.9 330.9C544.7 331.5 539.5 333.6 539.6 333.1Z" fill="#ecccc0"/><path d="M540.5 334.7C540.5 334.1 544.9 331 547.9 330.1C551 329.1 555.2 328.8 558.8 328.8C562.4 328.9 566.6 329.6 569.5 330.4C572.5 331.3 576.9 333.4 576.6 334C576.2 334.5 570.5 334.1 567.6 333.8C564.6 333.5 561.9 332.3 558.6 332.3C555.3 332.3 550.8 333.4 547.7 333.8C544.7 334.2 540.4 335.3 540.5 334.7Z" fill="#c8c8c8"/><ellipse cx="554" cy="334.1" rx="5" ry="5.2" fill="#555555" stroke="#161616" stroke-width="1.0"/><ellipse cx="554" cy="336.6" rx="3.2" ry="1.8" fill="#868686"/><ellipse cx="554" cy="333.9" rx="2.5" ry="2.7" fill="#1e1e1e"/><ellipse cx="552.3" cy="332.2" rx="1.5" ry="1.5" fill="#fff"/><path d="M540 334C541.3 333.1 544.2 329.5 547.4 328.3C550.5 327 555 326.5 558.8 326.5C562.7 326.5 567.2 327.2 570.2 328.1C573.2 329 574.9 331.4 576.7 331.9C578.4 332.4 580 331.1 580.6 330.9L580.8 331.2C580.1 332 578.4 335.8 576.4 336.1C574.5 336.3 571.8 333.6 568.9 332.8C565.9 332 562.2 331.3 558.8 331.2C555.4 331 551.5 331.1 548.5 331.8C545.5 332.5 542.2 334.8 540.9 335.4Z" fill="#000"/><path d="M575.5 335C574.4 335.6 572 337.8 569.1 338.6C566.2 339.4 561.1 339.8 558.2 339.8C555.3 339.9 552.9 339.1 551.8 339" stroke="#111" stroke-width="0.8" stroke-linecap="round" fill="none"/><path d="M556.4 339.7C556.2 340.1 555.4 341.6 555.2 342" stroke="#222" stroke-width="0.6" stroke-linecap="round" fill="none"/><path d="M524.4 344.7L522 350L524 352.5" stroke="#999" stroke-width="0.6" stroke-linecap="round" stroke-linejoin="round" fill="none" stroke-dasharray="2 1.2"/><path d="M521.7 358.3C521.8 359.1 522.3 361.6 522.5 363C522.7 364.4 522.9 365.8 523 366.4" stroke="#333" stroke-width="0.7" stroke-linecap="round" fill="none"/><path d="M523 366C523.5 365.4 524.9 363.3 526 362.5C527.1 361.7 528.5 361.2 529.8 361C531.1 360.8 532.6 361.5 534 361.5C535.4 361.5 537.3 361.1 538 361" stroke="#333" stroke-width="0.7" stroke-linecap="round" fill="none"/><path d="M539.8 352.8C539.8 353.7 539.4 356.5 539.5 358C539.6 359.5 540.1 361.1 540.5 362C540.9 362.9 541.8 363.4 542 363.7" stroke="#333" stroke-width="0.7" stroke-linecap="round" fill="none"/><ellipse cx="512.7" cy="360.2" rx="2" ry="1.8" fill="#f7c66b" stroke="#7a5a1a" stroke-width="0.6"/><ellipse cx="506.8" cy="365.8" rx="2.8" ry="2" fill="#f7c66b" stroke="#7a5a1a" stroke-width="0.6" transform="rotate(-20 506.8 365.8)"/><ellipse cx="552" cy="356.9" rx="2.6" ry="2" fill="#f7c66b" stroke="#7a5a1a" stroke-width="0.6" transform="rotate(20 552 356.9)"/><ellipse cx="560.4" cy="358.3" rx="2" ry="1.8" fill="#f7c66b" stroke="#7a5a1a" stroke-width="0.6"/><ellipse cx="553.7" cy="363.7" rx="3" ry="2.1" fill="#f7c66b" stroke="#7a5a1a" stroke-width="0.6" transform="rotate(10 553.7 363.7)"/><path d="M628.5 343C628.7 343.5 631.8 347.4 634 349C636.2 350.6 639.3 352.2 642 352.5C644.7 352.8 647.8 352.2 650 351C652.2 349.8 655.3 345.5 655 345C654.7 344.5 650.5 347.4 648 348C645.5 348.6 642.5 348.8 640 348.5C637.5 348.2 634.9 346.9 633 346C631.1 345.1 628.3 342.5 628.5 343Z" fill="#8f8f8f"/><path d="M676 345C676 345.5 679.3 349.2 682 350.5C684.7 351.8 688.7 353 692 353C695.3 353 699.2 352.1 702 350.5C704.8 348.9 708.8 343.9 708.5 343.5C708.2 343.1 702.9 347.1 700 348C697.1 348.9 694 349.1 691 349C688 348.9 684.5 348.2 682 347.5C679.5 346.8 676 344.5 676 345Z" fill="#8f8f8f"/><path d="M627.3 327.7C628.7 327 632.7 325.2 635.5 323.9C638.3 322.6 641.7 320.9 644.2 319.7C646.6 318.6 648.3 317.8 650.2 317C652.1 316.2 654.6 315.4 655.5 315.1L656.3 316.3C655.5 316.9 653.5 318.9 651.8 320C650.1 321.2 648.4 322.2 645.8 323.3C643.3 324.4 639.6 325.9 636.5 326.7C633.4 327.5 629 327.9 627.5 328.1Z" fill="#000"/><path d="M669.3 313.5C670.5 314 673.9 315.8 676.8 316.8C679.6 317.9 682.8 318.9 686.3 319.9C689.7 320.9 693.3 321.8 697.2 322.7C701.2 323.7 708 325 710.1 325.5L710.1 325.9C707.9 325.9 700.9 326.2 696.8 325.9C692.6 325.5 688.7 324.9 685.1 323.9C681.6 322.9 678 321.7 675.2 320.2C672.5 318.6 669.6 315.6 668.5 314.7Z" fill="#000"/><ellipse cx="653.2" cy="329.8" rx="3.4" ry="2.5" fill="#ecccc0" transform="rotate(30 653.2 329.8)"/><ellipse cx="674.8" cy="330.3" rx="4.2" ry="2.7" fill="#ecccc0" transform="rotate(-25 674.8 330.3)"/><path d="M657.9 339.2C657.8 338.7 652.9 335 650.1 334C647.2 332.9 643.7 332.8 640.6 333C637.5 333.1 634.5 334.4 631.5 335C628.4 335.7 623.5 335.3 622.4 336.9C621.3 338.4 623.1 342.5 624.7 344.4C626.3 346.2 631.2 348.5 631.9 348C632.6 347.6 627.5 343.7 629.1 341.7C630.6 339.7 637.4 336.8 640.9 336C644.5 335.3 647.6 336.7 650.4 337.2C653.2 337.8 657.9 339.8 657.9 339.2Z" fill="#ecccc0"/><path d="M657 341C657 340.3 653 337.3 650.3 336.4C647.6 335.5 644 335.3 640.9 335.5C637.8 335.7 634.2 336.5 631.7 337.5C629.2 338.5 625.6 340.9 625.9 341.5C626.2 342.1 631.1 341.4 633.7 341C636.2 340.6 638.4 339.2 641.2 339.1C644.1 339 648.1 340 650.7 340.3C653.4 340.6 657.1 341.6 657 341Z" fill="#c8c8c8"/><ellipse cx="643" cy="341.8" rx="6" ry="6.4" fill="#3a3a3a" stroke="#161616" stroke-width="1.0"/><ellipse cx="643" cy="344.8" rx="3.9" ry="2.2" fill="#555"/><ellipse cx="643" cy="341.5" rx="3" ry="3.3" fill="#1e1e1e"/><ellipse cx="640.9" cy="339.4" rx="1.8" ry="1.8" fill="#fff"/><path d="M656.8 341.4C655.6 340.8 652.5 338.4 649.9 337.7C647.2 337 643.9 336.9 641 337.2C638.1 337.4 634.9 338.2 632.4 339.2C629.9 340.2 627.7 343.1 626.1 343C624.4 342.9 623.1 339.4 622.5 338.6L622.7 338.4C623.2 338.7 624.4 340.4 625.8 340C627.1 339.5 628.6 336.9 631.1 335.9C633.6 334.9 637.5 333.9 640.8 333.8C644 333.6 648 333.9 650.8 335.1C653.5 336.2 656.2 339.7 657.3 340.6Z" fill="#000"/><path d="M627 342.5C628 343.1 630.1 345.3 632.6 346.1C635.1 346.8 639.6 347 642.1 347C644.6 346.9 646.7 346 647.6 345.8" stroke="#111" stroke-width="0.8" stroke-linecap="round" fill="none"/><path d="M643.6 346.8C643.8 347.2 644.6 348.7 644.8 349.1" stroke="#222" stroke-width="0.6" stroke-linecap="round" fill="none"/><path d="M672.5 340.9C672.5 340.3 677.5 335.5 680.7 333.9C684 332.3 688.2 331.5 692 331.2C695.8 330.8 699.6 331.6 703.5 331.8C707.3 331.9 713.4 330.6 715.1 332.1C716.8 333.6 715.2 338.3 713.5 340.6C711.9 342.9 706.3 346.2 705.3 345.8C704.4 345.5 709.8 340.4 707.6 338.5C705.4 336.6 696.6 334.7 692.2 334.5C687.7 334.3 684.2 336.4 680.9 337.5C677.6 338.6 672.5 341.5 672.5 340.9Z" fill="#ecccc0"/><path d="M673.6 342.7C673.6 342 677.8 338 680.9 336.5C684 335.1 688.4 334.2 692.2 333.9C695.9 333.6 700.4 333.9 703.6 334.5C706.8 335.1 711.7 337 711.4 337.7C711.1 338.4 705.1 338.5 701.9 338.6C698.7 338.6 695.8 337.5 692.4 337.9C688.9 338.2 684.2 340.1 681.1 340.9C678 341.7 673.6 343.4 673.6 342.7Z" fill="#c8c8c8"/><ellipse cx="691" cy="341" rx="6.5" ry="6.8" fill="#3a3a3a" stroke="#161616" stroke-width="1.0"/><ellipse cx="691" cy="344.2" rx="4.2" ry="2.3" fill="#555"/><ellipse cx="691" cy="340.7" rx="3.2" ry="3.6" fill="#1e1e1e"/><ellipse cx="688.8" cy="338.4" rx="1.9" ry="1.9" fill="#fff"/><path d="M673.2 342.2C674.4 341 677.1 336.9 680.3 335.2C683.4 333.5 688 332.5 692 332.1C695.9 331.7 700.8 332 704 332.6C707.2 333.3 709.4 335.9 711.3 336.1C713.1 336.3 714.4 334.2 715.1 333.8L715.3 334C714.7 334.9 713.5 339 711.5 339.4C709.5 339.8 706.4 337 703.2 336.4C700 335.8 695.9 335.5 692.3 335.7C688.7 336 684.6 336.6 681.5 337.9C678.5 339.1 675.3 342.3 674 343.2Z" fill="#000"/><path d="M710.4 339C709.4 339.8 707 342.6 704.1 343.9C701.2 345.1 695.8 346.1 692.8 346.5C689.8 346.9 687.1 346.3 686 346.3" stroke="#111" stroke-width="0.8" stroke-linecap="round" fill="none"/><path d="M690.9 346.6C690.7 347 690.1 348.8 689.9 349.3" stroke="#222" stroke-width="0.6" stroke-linecap="round" fill="none"/><path d="M661.3 354.2L658.6 359.6L661.3 363.7" stroke="#888" stroke-width="0.7" stroke-linecap="round" stroke-linejoin="round" fill="none"/><path d="M658.6 373.9C659.2 373.6 660.7 372.6 662 372.3C663.3 372 664.8 371.7 666.2 371.8C667.6 371.9 669.1 372.4 670.5 372.8C671.9 373.2 674.1 374.2 674.8 374.5" stroke="#555" stroke-width="0.7" stroke-linecap="round" fill="none"/><path d="M664 376.5C664.8 376.6 667.8 376.8 668.5 376.8" stroke="#aaa" stroke-width="0.6" stroke-linecap="round" fill="none"/><path d="M786.5 312L789.5 310L797.5 324.5L795.8 326Z" fill="#ffc414" stroke="#111" stroke-width="0.8" stroke-linejoin="round"/><path d="M778.4 324.5L780.5 321.5L794.6 329.8L793.6 331.6Z" fill="#ffc414" stroke="#111" stroke-width="0.8" stroke-linejoin="round"/><path d="M777.3 341L793.5 336.2L794.3 338.4L778.8 344.2Z" fill="#ffc414" stroke="#111" stroke-width="0.8" stroke-linejoin="round"/><path d="M799.4 326.4C800.1 325.8 801.7 323.5 803.6 322.6C805.4 321.7 808.1 320.9 810.6 321C813 321.2 815.6 322.2 818 323.4C820.4 324.6 822.9 326.3 825.1 328.1C827.3 329.9 830.3 333.3 831.3 334.3L829.9 336.1C828.7 335.3 825 332.9 822.7 331.5C820.4 330.1 818.1 328.6 816 327.6C813.9 326.6 812 325.7 810 325.4C808.1 325 806.2 325.2 804.4 325.4C802.7 325.6 800.4 326.6 799.6 326.8Z" fill="#000"/><path d="M843.6 325.8C844.6 324.8 847.7 321.5 849.8 319.8C851.9 318.1 853.8 316.8 856.1 315.8C858.4 314.8 860.8 314 863.7 313.7C866.5 313.3 869.8 313.4 873 313.7C876.2 314 881.3 315.2 883 315.5L883 315.9C881.3 316 876.1 316.1 873 316.3C869.9 316.6 866.9 316.9 864.3 317.5C861.8 318.1 859.9 318.9 857.9 319.8C855.9 320.7 854.4 321.9 852.2 323.2C850 324.5 846 326.7 844.8 327.4Z" fill="#000"/><ellipse cx="831.5" cy="338.5" rx="2" ry="3" fill="#ecccc0"/><ellipse cx="848" cy="337" rx="3" ry="4.2" fill="#ecccc0" transform="rotate(30 848 337)"/><path d="M832.3 342.4C832.3 341.7 827.5 336.9 824.8 335.4C822 334 818.8 333.7 815.9 333.8C813 334 810 335.4 807.4 336.1C804.7 336.8 800.6 336.1 799.7 338.1C798.8 340 800.3 345.3 801.7 347.7C803.1 350.1 807.6 353.2 808.2 352.7C808.8 352.1 804 347 805.3 344.5C806.7 342 813 338.6 816.3 337.7C819.6 336.9 822.5 338.8 825.2 339.6C827.9 340.4 832.4 343.1 832.3 342.4Z" fill="#ecccc0"/><path d="M831.6 344.6C831.5 343.7 827.7 339.8 825.1 338.5C822.5 337.2 819.1 336.9 816.2 337C813.3 337.2 810 338.2 807.7 339.3C805.4 340.5 802 343.4 802.4 344.1C802.7 344.9 807.2 344.2 809.6 343.8C812 343.4 814 341.7 816.7 341.6C819.3 341.6 823.1 343 825.6 343.5C828.1 344 831.7 345.4 831.6 344.6Z" fill="#c8c8c8"/><ellipse cx="813" cy="344.9" rx="6" ry="6.4" fill="#555555" stroke="#161616" stroke-width="1.0"/><ellipse cx="813" cy="347.9" rx="3.9" ry="2.2" fill="#868686"/><ellipse cx="813" cy="344.6" rx="3" ry="3.3" fill="#1e1e1e"/><ellipse cx="810.9" cy="342.5" rx="1.8" ry="1.8" fill="#fff"/><path d="M831.1 345C830 344.2 826.9 340.8 824.5 339.8C822 338.8 818.9 338.7 816.3 338.9C813.6 339.1 810.9 339.9 808.6 341.1C806.3 342.2 804 345.9 802.5 345.8C801.1 345.6 800.3 341.2 799.8 340.2L800.1 340.1C800.4 340.5 801.1 342.9 802.2 342.5C803.3 342.1 804.5 338.8 806.8 337.6C809.1 336.4 813 335.3 816.1 335.2C819.3 335.1 823.1 335.7 825.7 337.2C828.4 338.7 831 343 832 344.1Z" fill="#000"/><path d="M803.5 345.4C804.4 346.2 806.5 349.2 808.8 350.2C811.2 351.2 815.4 351.6 817.7 351.7C820.1 351.7 822 350.6 822.8 350.4" stroke="#111" stroke-width="0.8" stroke-linecap="round" fill="none"/><path d="M819.2 351.5C819.4 352 820.2 354 820.4 354.5" stroke="#222" stroke-width="0.6" stroke-linecap="round" fill="none"/><path d="M846.1 347.6C845.9 347 849.5 340.4 852.2 337.9C855 335.3 858.9 333.5 862.5 332.3C866.1 331.1 870.2 331.1 873.8 330.5C877.5 329.9 882.4 327.3 884.3 328.7C886.3 330 886.4 335.6 885.6 338.5C884.8 341.4 880.5 346.3 879.5 346.1C878.5 345.9 882.4 338.9 879.7 337.3C877.1 335.6 868 335.3 863.6 336.1C859.2 336.8 856.3 340 853.4 341.9C850.5 343.8 846.3 348.3 846.1 347.6Z" fill="#ecccc0"/><path d="M847.6 349.4C847.4 348.6 850.4 343.2 853.1 340.8C855.7 338.5 859.8 336.6 863.4 335.4C867 334.2 871.4 333.6 874.7 333.6C878 333.6 883.3 334.7 883.2 335.5C883.1 336.4 877.3 337.9 874.2 338.6C871.1 339.3 867.9 338.7 864.7 339.8C861.4 341 857.3 344.1 854.5 345.7C851.6 347.3 847.9 350.2 847.6 349.4Z" fill="#c8c8c8"/><ellipse cx="868.3" cy="341.8" rx="6.5" ry="6.8" fill="#555555" stroke="#161616" stroke-width="1.0"/><ellipse cx="868.3" cy="345" rx="4.2" ry="2.3" fill="#868686"/><ellipse cx="868.3" cy="341.5" rx="3.2" ry="3.6" fill="#1e1e1e"/><ellipse cx="866.1" cy="339.2" rx="1.9" ry="1.9" fill="#fff"/><path d="M847 349C847.9 347.5 849.4 342.2 852 339.7C854.7 337.1 859 334.9 862.8 333.5C866.5 332.2 871.4 331.5 874.7 331.6C878.1 331.6 881 334 882.7 333.9C884.4 333.7 884.4 331.2 884.8 330.6L885.1 330.7C884.8 331.8 885.4 336.4 883.7 337.2C881.9 338.1 878 335.6 874.7 335.7C871.4 335.7 867.4 336.2 864 337.2C860.6 338.3 856.7 339.9 854.1 342C851.5 344.1 849.2 348.5 848.2 349.8Z" fill="#000"/><path d="M882.6 337.2C881.8 338.3 880.3 342 877.7 344.1C875.2 346.2 870.3 348.4 867.4 349.5C864.6 350.6 861.8 350.5 860.7 350.7" stroke="#111" stroke-width="0.8" stroke-linecap="round" fill="none"/><path d="M865.6 350.1C865.6 350.6 865.4 352.8 865.4 353.3" stroke="#222" stroke-width="0.6" stroke-linecap="round" fill="none"/><path d="M834.2 356.4L832 362.9L834.2 365" stroke="#999" stroke-width="0.6" stroke-linecap="round" stroke-linejoin="round" fill="none" stroke-dasharray="2 1.2"/><path d="M833.4 378C834.2 377.7 836.2 376.6 838 376.3C839.8 376 841.8 375.7 844 376C846.2 376.3 850.2 377.7 851.5 378" stroke="#222" stroke-width="0.9" stroke-linecap="round" fill="none"/><path d="M839.5 380.8C840.2 380.8 842.8 380.8 843.5 380.8" stroke="#222" stroke-width="0.8" stroke-linecap="round" fill="none"/><path d="M83.1 421.2C84.7 420.1 89.5 416.4 93 414.8C96.5 413.1 100.3 411.7 104 411.3C107.8 410.8 111.6 411.1 115.3 412.1C119 413 124.4 416.1 126.2 416.9L126 417.3C124.1 417.1 118.3 416.1 114.7 415.9C111.2 415.8 108 415.8 104.8 416.3C101.5 416.9 98.3 417.9 95 419.2C91.7 420.6 86.6 423.5 84.9 424.4Z" fill="#000"/><ellipse cx="91" cy="432.5" rx="3" ry="2.2" fill="#ecccc0" transform="rotate(-30 91 432.5)"/><path d="M86.2 440.7C86 440 90.2 433.5 93.2 431.1C96.2 428.7 100.3 427.3 104 426.5C107.7 425.6 111.6 426.2 115.5 426C119.3 425.8 125.2 423.5 127.1 425.1C129 426.8 128.2 432.8 126.9 435.8C125.7 438.8 120.7 443.5 119.7 443.2C118.6 442.9 123.2 436 120.7 433.9C118.2 431.8 109.2 430.3 104.7 430.6C100.2 430.9 97.1 433.9 94 435.5C90.9 437.2 86.3 441.5 86.2 440.7Z" fill="#ecccc0"/><path d="M87.5 442.8C87.4 441.9 90.9 436.5 93.8 434.4C96.6 432.2 100.9 430.7 104.6 429.9C108.3 429 112.8 428.9 116.1 429.4C119.3 429.8 124.5 431.6 124.3 432.5C124.2 433.4 118.2 434.2 115 434.6C111.9 435 108.8 433.9 105.4 434.8C102 435.6 97.7 438.3 94.7 439.7C91.7 441 87.7 443.7 87.5 442.8Z" fill="#c8c8c8"/><path d="M87 442.4C88 440.9 90 435.6 92.9 433.2C95.8 430.8 100.3 429 104.2 428.1C108.1 427.1 113 427 116.3 427.5C119.6 427.9 122.2 430.9 124 430.9C125.9 430.8 126.8 427.9 127.4 427.3L127.6 427.4C127.1 428.5 126.6 433.5 124.6 434.1C122.6 434.7 119.1 431.7 115.8 431.3C112.5 430.9 108.5 431 105 431.7C101.4 432.4 97.5 433.6 94.7 435.5C91.9 437.4 89.2 441.9 88.1 443.2Z" fill="#000"/><path d="M123.6 434.1C122.7 435.3 120.8 439 118.1 440.9C115.4 442.8 110.2 444.6 107.3 445.4C104.4 446.2 101.6 445.8 100.4 445.8" stroke="#111" stroke-width="0.8" stroke-linecap="round" fill="none"/><path d="M105.4 445.7C105.3 446.3 105 448.6 104.9 449.2" stroke="#222" stroke-width="0.6" stroke-linecap="round" fill="none"/><ellipse cx="96.8" cy="442.3" rx="5" ry="5" fill="#2a2a2a" stroke="#111" stroke-width="0.8"/><ellipse cx="95.3" cy="440.8" rx="1.5" ry="1.5" fill="#fff"/><path d="M84 467C85 464.8 88.4 465.7 90 466C91.6 466.3 93.2 467.7 93.5 469C93.8 470.3 92.8 472.5 92 474C91.2 475.5 89.8 477.2 88.5 478C87.2 478.8 84.8 480.8 84 479C83.2 477.2 83 469.2 84 467Z" fill="#b01010" stroke="#000" stroke-width="0.9" stroke-linejoin="round"/><path d="M84 477C84.7 475.1 87.1 476 88 476.5C88.9 477 89.5 478.4 89.5 480C89.5 481.6 88.9 484.7 88 486C87.1 487.3 84.7 489.5 84 488C83.3 486.5 83.3 478.9 84 477Z" fill="#ff8f9a" stroke="#000" stroke-width="0.7" stroke-linejoin="round"/><linearGradient id="gm1" x1="0" y1="0" x2="0" y2="1"><stop offset="0" stop-color="#ece6f6"/><stop offset=".22" stop-color="#bdb4d2"/><stop offset=".55" stop-color="#6a6674"/><stop offset="1" stop-color="#474747"/></linearGradient><path d="M190 440C190.2 436 190.5 430.9 192 428C193.5 425.1 195.2 423.5 199 422.5C202.8 421.5 209.5 422.1 215 422C220.5 421.9 226.2 421.8 232 421.8C237.8 421.8 244.8 421.8 250 422C255.2 422.2 259.9 421.7 263 423C266.1 424.3 267.2 426.8 268.5 430C269.8 433.2 270.7 437.8 271 442C271.3 446.2 271.3 451.3 270.5 455C269.7 458.7 268.4 461.7 266 464C263.6 466.3 259.7 468.2 256 469C252.3 469.8 247.3 469.2 244 468.5C240.7 467.8 238.4 465.9 236 465C233.6 464.1 231.7 462.9 229.5 463C227.3 463.1 225.6 464.5 223 465.5C220.4 466.5 217.5 468.5 214 469C210.5 469.5 205.3 469.7 202 468.5C198.7 467.3 195.9 464.8 194 462C192.1 459.2 191.2 455.7 190.5 452C189.8 448.3 189.8 444 190 440Z" fill="url(#gm1)"/><path d="M220.3 457.7C220.4 456.4 217.5 453.8 215.4 452.6C213.4 451.3 210.4 450.6 207.8 450.3C205.2 450 202.1 450.3 199.9 450.8C197.7 451.3 194.6 452.1 194.5 453.4C194.4 454.7 197.3 457.2 199.4 458.4C201.5 459.6 204.5 460.3 207.1 460.6C209.7 460.9 212.7 460.6 214.9 460.1C217.1 459.7 220.2 459 220.3 457.7Z" fill="#fff"/><path d="M220.3 457.7C220.3 457.1 217.5 453.8 215.4 452.6C213.4 451.3 210.4 450.6 207.8 450.3C205.2 450 202.1 450.3 199.9 450.8C197.7 451.3 194.4 452.8 194.5 453.4C194.7 454 198.8 454.1 201 454.1C203.2 454.2 205.2 453.3 207.6 453.6C209.9 453.9 213.1 455.5 215.2 456.1C217.3 456.8 220.3 458.3 220.3 457.7Z" fill="#c8c8c8"/><ellipse cx="207.9" cy="455.3" rx="4.8" ry="5" fill="#3a3a3a" stroke="#161616" stroke-width="1.0"/><ellipse cx="207.9" cy="457.7" rx="3.1" ry="1.7" fill="#555"/><ellipse cx="207.9" cy="455.1" rx="2.4" ry="2.6" fill="#1e1e1e"/><ellipse cx="206.3" cy="453.4" rx="1.4" ry="1.4" fill="#fff"/><path d="M220 458C219.1 457.3 216.9 454.6 214.9 453.6C212.8 452.5 210 452 207.6 451.8C205.2 451.6 202.5 451.8 200.3 452.3C198.1 452.8 195.8 455 194.4 454.7C193.1 454.4 192.5 451 192.1 450.3L192.4 450.1C192.7 450.5 193.4 452.2 194.6 452.1C195.8 451.9 197.4 449.8 199.6 449.3C201.8 448.7 205.2 448.5 208 448.9C210.7 449.2 213.9 450.1 216 451.5C218.2 453 219.8 456.4 220.6 457.4Z" fill="#000"/><path d="M195.5 454.5C196.1 455.1 197.5 457.5 199.4 458.5C201.3 459.6 205 460.4 207.1 460.8C209.1 461.1 211 460.6 211.8 460.6" stroke="#111" stroke-width="0.8" stroke-linecap="round" fill="none"/><path d="M208.3 460.9C208.5 461.3 208.9 462.8 209 463.1" stroke="#222" stroke-width="0.6" stroke-linecap="round" fill="none"/><path d="M232.8 458.3C232.6 457 235.6 454.1 237.8 452.7C240 451.3 243.2 450.5 246 450.1C248.8 449.6 252.1 449.8 254.5 450.2C256.9 450.7 260.2 451.4 260.4 452.8C260.5 454.1 257.5 456.9 255.3 458.3C253.1 459.6 249.9 460.4 247.1 460.8C244.4 461.2 241.1 461.1 238.7 460.6C236.3 460.2 232.9 459.6 232.8 458.3Z" fill="#fff"/><path d="M232.8 458.3C232.7 457.7 235.6 454.1 237.8 452.7C240 451.3 243.2 450.5 246 450.1C248.8 449.6 252.1 449.8 254.5 450.2C256.9 450.7 260.5 452.2 260.4 452.8C260.2 453.4 255.8 453.7 253.4 453.8C251.1 453.9 248.9 453.1 246.4 453.5C243.8 453.9 240.5 455.7 238.2 456.5C236 457.3 232.9 458.9 232.8 458.3Z" fill="#c8c8c8"/><ellipse cx="246" cy="455.3" rx="5" ry="5.2" fill="#3a3a3a" stroke="#161616" stroke-width="1.0"/><ellipse cx="246" cy="457.8" rx="3.2" ry="1.8" fill="#555"/><ellipse cx="246" cy="455.1" rx="2.5" ry="2.7" fill="#1e1e1e"/><ellipse cx="244.3" cy="453.3" rx="1.5" ry="1.5" fill="#fff"/><path d="M232.4 458C233.2 456.9 234.9 453.2 237.2 451.6C239.4 450 242.8 449 245.8 448.5C248.7 448 252.4 448.1 254.8 448.6C257.2 449.1 258.9 451.2 260.2 451.4C261.6 451.5 262.4 449.6 262.9 449.2L263.1 449.4C262.7 450.2 262 453.8 260.5 454.2C259 454.6 256.5 452.3 254.2 451.9C251.8 451.4 248.8 451.3 246.2 451.6C243.6 451.9 240.7 452.6 238.5 453.8C236.3 455 234 457.8 233.1 458.6Z" fill="#000"/><path d="M259.5 453.9C258.8 454.7 257.4 457.2 255.3 458.4C253.3 459.6 249.4 460.6 247.1 461C244.9 461.5 242.9 461 242.1 461" stroke="#111" stroke-width="0.8" stroke-linecap="round" fill="none"/><path d="M245.8 461.2C245.7 461.6 245.3 463.2 245.2 463.6" stroke="#222" stroke-width="0.6" stroke-linecap="round" fill="none"/><path d="M192.3 446.2C192.6 445 192.9 441.1 194.3 439C195.8 436.8 198.4 434.8 201 433.5C203.5 432.2 206.8 431.5 209.6 431.1C212.5 430.8 216.7 431.3 218.1 431.3L218.3 434.3C217 434.5 212.9 434.9 210.4 435.5C207.8 436 205.1 436.6 202.8 437.5C200.5 438.4 198.4 439.6 196.7 441C195 442.5 193.4 445.5 192.7 446.4Z" fill="#000"/><path d="M232.4 430.7C234.2 430.8 239.7 430.4 243.4 430.8C247 431.3 250.9 432.3 254.1 433.5C257.4 434.7 260.1 436.1 262.7 437.8C265.4 439.4 268.6 442.4 269.8 443.4L269.6 443.8C268.2 443.3 264.1 441.8 261.3 440.8C258.4 439.9 255.8 438.8 252.7 437.9C249.6 437 246.1 435.9 242.6 435.2C239.2 434.5 233.9 433.9 232.2 433.7Z" fill="#000"/><path d="M222.3 465.3L220.9 470L223 473.5" stroke="#777" stroke-width="0.7" stroke-linecap="round" stroke-linejoin="round" fill="none"/><path d="M212.3 477C213.4 476.6 217.2 479.5 220 480.5C222.8 481.5 226 482.6 229 482.8C232 483 234.8 482.6 238 481.5C241.2 480.4 246.6 475.8 248 476C249.4 476.2 247.7 480.9 246.5 483C245.3 485.1 243.8 487.2 241 488.5C238.2 489.8 233.7 491 230 491C226.3 491 221.8 489.8 219 488.5C216.2 487.2 214.6 484.9 213.5 483C212.4 481.1 211.2 477.4 212.3 477Z" fill="#fff" stroke="#111" stroke-width="0.9" stroke-linejoin="round"/><path d="M215 482.5C216.5 483 221.2 485.2 224 485.5C226.8 485.8 229.7 484.3 232 484.5C234.3 484.7 235.8 486.8 238 486.5C240.2 486.2 244.2 483.2 245.5 482.5" stroke="#444" stroke-width="0.6" stroke-linecap="round" fill="none"/><path d="M345 430.7C346.3 430.2 350 428.4 352.9 427.8C355.7 427.3 359.3 427.3 362 427.6C364.8 427.9 366.9 428.6 369.1 429.6C371.3 430.5 374.2 432.6 375.2 433.2L374.4 435C373.3 434.7 370 433.6 367.9 433C365.7 432.4 364 431.8 361.6 431.4C359.1 431.1 355.9 430.8 353.1 430.8C350.4 430.7 346.4 431.1 345 431.1Z" fill="#000"/><path d="M384.4 434.6C385.7 433.8 389.4 430.8 392.4 429.6C395.4 428.3 398.8 427.5 402.3 427.2C405.7 426.9 409.6 427.1 413.1 427.7C416.7 428.3 421.9 430.2 423.6 430.7L423.6 431.1C421.8 431.1 416.4 430.8 412.9 430.9C409.4 430.9 405.9 431 402.7 431.4C399.5 431.7 396.5 432.2 393.6 433C390.7 433.9 386.6 435.8 385.2 436.4Z" fill="#000"/><ellipse cx="371.3" cy="439" rx="3.2" ry="2.4" fill="#ecccc0" transform="rotate(30 371.3 439)"/><ellipse cx="390.3" cy="439" rx="3.6" ry="2.5" fill="#ecccc0" transform="rotate(-25 390.3 439)"/><ellipse cx="359.1" cy="448.8" rx="11.8" ry="3.2" fill="#ecccc0" transform="rotate(-2 359.1 448.8)"/><path d="M371.6 446.5C370.6 447.1 367.7 449.5 365.7 450.4C363.6 451.2 361.4 451.7 359.1 451.6C356.8 451.6 353.8 451.2 351.7 450.3C349.6 449.4 347.2 446.9 346.4 446.3L346.5 445.9C347.5 446.3 350.3 447.6 352.4 448.1C354.5 448.6 357 448.9 359.1 449C361.2 449 363 448.8 365 448.3C367 447.8 370.3 446.4 371.4 446Z" fill="#000"/><ellipse cx="405.6" cy="448.1" rx="14.6" ry="3.7" fill="#ecccc0" transform="rotate(-2 405.6 448.1)"/><path d="M390.1 445.9C391.4 446.3 395.6 447.7 398.1 448.1C400.7 448.6 402.9 448.7 405.5 448.4C408.1 448.2 411.2 447.6 413.8 446.8C416.3 446 419.6 444.1 420.8 443.6L421 443.9C420 444.8 417.3 447.9 414.7 449.1C412.2 450.4 408.6 451.1 405.7 451.4C402.9 451.6 400.2 451.2 397.6 450.4C394.9 449.6 391.2 447 389.9 446.4Z" fill="#000"/><path d="M378.1 454.5L375.4 459.3L378.1 462" stroke="#999" stroke-width="0.6" stroke-linecap="round" stroke-linejoin="round" fill="none"/><path d="M375.4 472.3C375.8 472 377.1 470.8 378 470.5C378.9 470.2 380 470.1 381 470.3C382 470.5 383.1 471 384 471.5C384.9 472 386.2 473.1 386.7 473.4" stroke="#222" stroke-width="0.9" stroke-linecap="round" fill="none"/><path d="M345 469.8L364.2 476.1L346 484.5Z" fill="#fff" stroke="#111" stroke-width="1.6" stroke-linejoin="round"/><ellipse cx="331.5" cy="471.5" rx="5.5" ry="5.5" fill="#111"/><ellipse cx="338.5" cy="470" rx="5.7" ry="5.7" fill="#111"/><ellipse cx="344.5" cy="473.5" rx="5.1" ry="5.1" fill="#111"/><ellipse cx="329.8" cy="478.5" rx="5.3" ry="5.3" fill="#111"/><ellipse cx="331.2" cy="485.5" rx="5.3" ry="5.3" fill="#111"/><ellipse cx="337.5" cy="488.2" rx="5.1" ry="5.1" fill="#111"/><ellipse cx="343.2" cy="484.8" rx="5.1" ry="5.1" fill="#111"/><ellipse cx="337" cy="479" rx="8.4" ry="8.4" fill="#111"/><path d="M345 470.6L363 476.1L346 483.7Z" fill="#fff"/><ellipse cx="331.5" cy="471.5" rx="4.6" ry="4.6" fill="#fff"/><ellipse cx="338.5" cy="470" rx="4.8" ry="4.8" fill="#fff"/><ellipse cx="344.5" cy="473.5" rx="4.2" ry="4.2" fill="#fff"/><ellipse cx="329.8" cy="478.5" rx="4.4" ry="4.4" fill="#fff"/><ellipse cx="331.2" cy="485.5" rx="4.4" ry="4.4" fill="#fff"/><ellipse cx="337.5" cy="488.2" rx="4.2" ry="4.2" fill="#fff"/><ellipse cx="343.2" cy="484.8" rx="4.2" ry="4.2" fill="#fff"/><ellipse cx="337" cy="479" rx="7.5" ry="7.5" fill="#fff"/><ellipse cx="342.5" cy="479" rx="4.5" ry="5" fill="#fff"/><path d="M329 482C329.2 482.5 329.8 484.2 330.5 485C331.2 485.8 332.6 486.2 333 486.5" stroke="#333" stroke-width="0.7" stroke-linecap="round" fill="none"/><path d="M504 432.6C505.2 431.7 508.7 428.3 511.4 427C514.2 425.7 517.4 424.9 520.3 424.8C523.1 424.8 525.9 425.6 528.5 426.5C531.2 427.5 534.9 429.8 536.2 430.5L535.4 432.3C534.1 431.9 530 430.6 527.5 430.1C525 429.5 522.8 428.8 520.3 428.8C517.8 428.7 515.2 429.3 512.6 430C509.9 430.7 505.6 432.5 504.2 433Z" fill="#000"/><path d="M546.2 430.1C547.6 429.3 551.3 426.4 554.5 425.2C557.6 424.1 561.5 423.2 565 423.2C568.5 423.2 572.1 424 575.5 425.4C578.9 426.7 583.8 430.2 585.5 431.2L585.3 431.6C583.5 431.1 577.9 429.3 574.5 428.6C571.1 427.9 568.2 427.4 565 427.4C561.8 427.4 558.5 428 555.5 428.8C552.5 429.5 548.4 431.2 547 431.7Z" fill="#000"/><ellipse cx="531" cy="440.5" rx="2.4" ry="1.8" fill="#ecccc0" transform="rotate(30 531 440.5)"/><ellipse cx="552" cy="441" rx="3.4" ry="2.3" fill="#ecccc0" transform="rotate(-30 552 441)"/><path d="M535 446.6C535 446.2 531.1 443.1 528.8 442.1C526.5 441.2 523.8 440.9 521.3 440.9C518.8 440.8 516.3 441.6 513.8 442C511.3 442.3 507.3 441.8 506.3 442.9C505.3 444.1 506.6 447.3 507.8 448.8C509 450.3 512.8 452.3 513.4 452C514 451.7 510.2 448.5 511.5 447C512.8 445.5 518.4 443.6 521.4 443.3C524.3 442.9 526.6 444.1 528.9 444.7C531.2 445.2 535 447 535 446.6Z" fill="#ecccc0"/><path d="M534 447.9C534 447.4 531 444.9 528.9 444C526.8 443.2 523.8 442.8 521.3 442.8C518.8 442.8 515.9 443.3 513.9 443.9C511.8 444.6 508.7 446.2 509 446.7C509.2 447.1 513.1 446.9 515.2 446.7C517.3 446.5 519.1 445.6 521.4 445.6C523.7 445.7 526.9 446.7 529 447.1C531.1 447.4 534 448.4 534 447.9Z" fill="#c8c8c8"/><path d="M533.7 448.3C532.8 447.8 530.4 445.9 528.4 445.3C526.3 444.7 523.7 444.5 521.3 444.5C519 444.6 516.5 445 514.4 445.7C512.3 446.3 510.4 448.4 509 448.2C507.7 448 506.7 445 506.3 444.3L506.5 444.1C506.9 444.3 507.8 445.4 508.9 445.1C510.1 444.8 511.3 442.9 513.3 442.2C515.4 441.6 518.7 441 521.3 441.1C524 441.2 527.2 441.7 529.4 442.7C531.6 443.8 533.5 446.7 534.3 447.5Z" fill="#000"/><path d="M510 447.5C510.7 448 512.2 449.9 514.1 450.6C516 451.3 519.6 451.6 521.6 451.7C523.7 451.8 525.4 451.3 526.1 451.2" stroke="#111" stroke-width="0.8" stroke-linecap="round" fill="none"/><path d="M522.9 451.7C523 452 523.6 453.2 523.7 453.5" stroke="#222" stroke-width="0.6" stroke-linecap="round" fill="none"/><path d="M550.1 447.9C550 447.4 554.1 443 556.9 441.4C559.6 439.8 563.2 438.9 566.4 438.3C569.7 437.7 572.9 438.1 576.4 437.9C579.8 437.7 585.4 436.1 587 437.2C588.6 438.3 587.3 442.4 586 444.4C584.6 446.5 579.9 449.6 579 449.4C578.1 449.2 582.5 444.6 580.4 443.2C578.4 441.8 570.7 440.8 566.8 441C562.9 441.3 560.1 443.3 557.3 444.4C554.5 445.6 550.2 448.4 550.1 447.9Z" fill="#ecccc0"/><path d="M551.3 449.3C551.2 448.7 554.6 445.1 557.2 443.6C559.7 442.2 563.5 441.1 566.7 440.6C570 440 573.9 439.9 576.7 440.2C579.5 440.4 583.8 441.6 583.6 442.2C583.4 442.8 578.2 443.4 575.5 443.7C572.8 443.9 570.2 443.2 567.2 443.8C564.2 444.4 560.3 446.3 557.7 447.2C555 448.1 551.4 449.9 551.3 449.3Z" fill="#c8c8c8"/><path d="M550.9 448.8C551.8 447.7 553.9 444 556.4 442.3C559 440.7 563 439.4 566.4 438.8C569.8 438.1 574 437.9 576.9 438.3C579.7 438.6 581.7 440.5 583.4 440.6C585.1 440.6 586.5 438.9 587.1 438.6L587.3 438.8C586.7 439.6 585.7 443.3 583.9 443.8C582.1 444.4 579.3 442.3 576.5 442.1C573.7 441.8 570.2 441.9 567.1 442.4C564 442.8 560.4 443.7 557.9 444.9C555.3 446.1 552.8 448.9 551.7 449.7Z" fill="#000"/><path d="M582.8 443.3C581.9 444.1 580.2 446.6 577.8 447.9C575.3 449.2 570.8 450.4 568.2 451C565.6 451.5 563.2 451.2 562.2 451.3" stroke="#111" stroke-width="0.8" stroke-linecap="round" fill="none"/><path d="M566.6 451.2C566.4 451.6 566 453.1 565.9 453.5" stroke="#222" stroke-width="0.6" stroke-linecap="round" fill="none"/><path d="M538 458.5L536.5 464L538 466.5" stroke="#aaa" stroke-width="0.6" stroke-linecap="round" stroke-linejoin="round" fill="none" stroke-dasharray="2 1.2"/><path d="M496 439.5C493.4 439.4 490.2 440.2 488 441.5C485.8 442.8 483.8 444.8 482.5 447C481.2 449.2 480.5 452.3 480.5 455C480.5 457.7 481.2 460.7 482.5 463C483.8 465.3 486.1 467.6 488 469C489.9 470.4 492.4 470.3 494 471.5C495.6 472.7 496.5 474.2 497.5 476C498.5 477.8 498.8 480.2 500 482C501.2 483.8 503 485.9 505 486.5C507 487.1 510 486.4 512 485.5C514 484.6 515.3 482.5 517 481C518.7 479.5 520.2 477.4 522 476.5C523.8 475.6 526.2 475.8 528 475.8C529.8 475.8 532 476 532.5 476.5C533 477 532.4 478.3 531 479C529.6 479.7 526 479.7 524 480.5C522 481.3 520.8 482.9 519 484C517.2 485.1 515 486.7 513 486.8C511 486.9 507.4 486 507 484.5C506.6 483 509.7 480.1 510.5 478C511.3 475.9 512 474 512 472C512 470 511.1 467.8 510.5 466C509.9 464.2 508.4 462.8 508.5 461C508.6 459.2 510.7 457.7 510.8 455.5C510.9 453.3 510.2 450.2 509 448C507.8 445.8 505.7 443.4 503.5 442C501.3 440.6 498.6 439.6 496 439.5Z" fill="#fff" stroke="#111" stroke-width="0.9" stroke-linejoin="round"/><ellipse cx="492" cy="457.5" rx="3.3" ry="3.8" fill="#fff" stroke="#111" stroke-width="0.8"/><ellipse cx="502.5" cy="453" rx="3.3" ry="3.8" fill="#fff" stroke="#111" stroke-width="0.8" transform="rotate(-20 502.5 453)"/><ellipse cx="500" cy="462.5" rx="2" ry="3.3" fill="#fff" stroke="#111" stroke-width="0.8" transform="rotate(-25 500 462.5)"/><path d="M541 476C541.4 474.6 543.7 474.6 545 474.8C546.3 475.1 548.2 476.1 549 477.5C549.8 478.9 550.4 481.6 550 483C549.6 484.4 547.8 485.5 546.5 485.6C545.2 485.7 543.4 485.1 542.5 483.5C541.6 481.9 540.6 477.4 541 476Z" fill="#a00808" stroke="#111" stroke-width="1" stroke-linejoin="round"/><path d="M542 477C542 476.4 544 475.8 545 476C546 476.2 548 477.4 548 478C548 478.6 546 479.7 545 479.5C544 479.3 542 477.6 542 477Z" fill="#fff"/><path d="M620.1 429.3C621.7 429.1 626.8 428.7 629.9 428.3C633.1 427.9 636.5 427.4 639.2 426.8C641.9 426.2 644.1 425.3 646.3 424.6C648.6 423.9 651.7 422.9 652.8 422.5L653.6 424.1C652.6 424.7 649.9 426.9 647.7 428C645.4 429.1 642.9 430.1 640 430.6C637.1 431.2 633.4 431.4 630.1 431.3C626.7 431.1 621.8 430 620.1 429.7Z" fill="#000"/><path d="M666.5 421.7C667.9 422.1 671.8 423.5 674.6 424.1C677.4 424.8 679.5 425.3 683.2 425.7C686.9 426.1 692.1 426.5 697 426.7C701.8 427 709.6 427.1 712.2 427.2L712.2 427.6C709.7 428 701.9 429.5 697 429.9C692.1 430.3 686.7 430.4 682.8 430.1C678.8 429.7 676.2 429 673.4 427.9C670.6 426.7 667.1 424 665.9 423.3Z" fill="#000"/><ellipse cx="649.1" cy="438.2" rx="3.4" ry="2.6" fill="#ecccc0" transform="rotate(30 649.1 438.2)"/><ellipse cx="672.1" cy="438.7" rx="4.2" ry="2.7" fill="#ecccc0" transform="rotate(-20 672.1 438.7)"/><path d="M653.9 448.5C653.9 448 649.1 443.9 646.2 442.6C643.3 441.4 639.7 441 636.5 441C633.3 441.1 630.1 442.2 627 442.7C623.9 443.2 618.9 442.5 617.7 444.1C616.4 445.7 618.1 450 619.6 452.1C621.1 454.1 626 456.7 626.8 456.3C627.5 455.9 622.5 451.5 624.2 449.5C625.8 447.5 633 444.8 636.7 444.3C640.4 443.7 643.5 445.3 646.4 446.1C649.3 446.8 654 449.1 653.9 448.5Z" fill="#ecccc0"/><path d="M653 450.3C653 449.6 649.1 446.2 646.4 445.1C643.6 444 639.9 443.7 636.7 443.7C633.5 443.7 629.8 444.4 627.1 445.3C624.5 446.2 620.6 448.5 620.9 449.1C621.2 449.7 626.3 449.3 628.9 449C631.6 448.8 633.9 447.4 636.9 447.5C639.8 447.5 643.9 448.8 646.6 449.3C649.3 449.7 653.1 451 653 450.3Z" fill="#c8c8c8"/><ellipse cx="638" cy="450.2" rx="6.3" ry="6.6" fill="#3a3a3a" stroke="#161616" stroke-width="1.0"/><ellipse cx="638" cy="453.3" rx="4.1" ry="2.3" fill="#555"/><ellipse cx="638" cy="449.9" rx="3.1" ry="3.4" fill="#1e1e1e"/><ellipse cx="635.8" cy="447.7" rx="1.9" ry="1.9" fill="#fff"/><path d="M652.7 450.7C651.6 450 648.5 447.3 645.8 446.4C643.2 445.5 639.7 445.3 636.7 445.4C633.7 445.5 630.3 446.2 627.7 447C625.1 447.9 622.7 450.8 621 450.6C619.3 450.5 618.2 446.7 617.6 445.9L617.9 445.7C618.4 446 619.4 447.9 620.9 447.6C622.3 447.2 623.9 444.6 626.6 443.6C629.2 442.7 633.3 441.9 636.7 442C640 442 644.1 442.5 646.9 443.9C649.7 445.2 652.3 448.9 653.3 449.9Z" fill="#000"/><path d="M622 450.2C622.9 450.9 625.1 453.4 627.6 454.3C630.2 455.2 634.7 455.6 637.3 455.7C639.9 455.8 642.1 455 643 454.9" stroke="#111" stroke-width="0.8" stroke-linecap="round" fill="none"/><path d="M638.9 455.7C639.1 456.1 639.8 457.7 640 458.1" stroke="#222" stroke-width="0.6" stroke-linecap="round" fill="none"/><path d="M670 449.3C670 448.7 675 443.6 678.3 441.8C681.6 440.1 685.9 439.2 689.8 438.8C693.7 438.3 697.6 439.1 701.6 439.2C705.5 439.3 711.7 437.9 713.4 439.4C715.2 440.9 713.6 445.8 712 448.2C710.4 450.7 704.8 454.2 703.8 453.8C702.8 453.5 708.3 448.1 706 446.2C703.7 444.2 694.6 442.4 690.1 442.3C685.5 442.2 681.9 444.4 678.6 445.6C675.2 446.7 670 449.9 670 449.3Z" fill="#ecccc0"/><path d="M671.1 451.1C671.1 450.4 675.3 446.2 678.5 444.6C681.6 443 686.1 442.1 690 441.6C693.9 441.2 698.5 441.5 701.8 442.1C705.1 442.7 710.1 444.6 709.8 445.3C709.5 446 703.4 446.2 700.1 446.3C696.9 446.4 693.9 445.3 690.3 445.8C686.8 446.2 682 448.2 678.8 449.1C675.6 450 671.2 451.9 671.1 451.1Z" fill="#c8c8c8"/><ellipse cx="688" cy="448.8" rx="6.7" ry="7" fill="#3a3a3a" stroke="#161616" stroke-width="1.0"/><ellipse cx="688" cy="452.2" rx="4.4" ry="2.4" fill="#555"/><ellipse cx="688" cy="448.5" rx="3.3" ry="3.7" fill="#1e1e1e"/><ellipse cx="685.7" cy="446.2" rx="2" ry="2" fill="#fff"/><path d="M670.7 450.6C671.9 449.4 674.7 445.1 677.8 443.3C681 441.5 685.8 440.3 689.8 439.8C693.9 439.3 698.8 439.5 702.1 440.2C705.4 440.8 707.8 443.5 709.7 443.6C711.6 443.8 712.8 441.6 713.4 441.1L713.7 441.4C713 442.3 712 446.5 709.9 446.9C707.9 447.3 704.7 444.5 701.4 444C698.1 443.4 693.9 443.1 690.2 443.5C686.5 443.8 682.3 444.5 679.2 445.9C676 447.2 672.8 450.6 671.6 451.6Z" fill="#000"/><path d="M708.9 446.6C707.8 447.5 705.5 450.4 702.5 451.8C699.5 453.2 694 454.3 690.9 454.7C687.8 455.2 685.1 454.6 683.9 454.6" stroke="#111" stroke-width="0.8" stroke-linecap="round" fill="none"/><path d="M689 454.9C688.8 455.3 688.2 457.2 688 457.7" stroke="#222" stroke-width="0.6" stroke-linecap="round" fill="none"/><path d="M657.2 462L654.5 469.4L657.2 472.9" stroke="#888" stroke-width="0.7" stroke-linecap="round" stroke-linejoin="round" fill="none"/><path d="M655.3 484.5C655.9 484.2 657.7 482.9 659 482.5C660.3 482.1 661.6 481.9 663 482.1C664.4 482.3 666 482.7 667.5 483.5C669 484.3 671.3 486.4 672.1 487" stroke="#222" stroke-width="0.9" stroke-linecap="round" fill="none"/><path d="M671 485.5C671.3 484.8 673 485.1 673.5 486C674 486.9 674.3 489.3 674.3 491C674.3 492.7 673.5 494.3 673.5 496C673.5 497.7 674.5 499.2 674.5 501C674.5 502.8 673.8 505.7 673.3 506.5C672.8 507.3 671.5 507.1 671.3 506C671 504.9 671.9 501.8 671.8 500C671.7 498.2 670.8 496.7 670.8 495C670.8 493.3 671.5 491.6 671.5 490C671.5 488.4 670.7 486.2 671 485.5Z" fill="#cc0a0a"/><path d="M782.7 414C783.2 413.3 784.5 412.2 785.5 412.3C786.5 412.4 787.6 412.9 789 414.5C790.4 416.1 792.4 419.3 794 422C795.6 424.7 797.7 428.5 798.5 430.5C799.3 432.5 799.3 433.3 799 434C798.7 434.7 797.8 435.4 796.5 434.5C795.2 433.6 792.8 430.8 791 428.5C789.2 426.2 786.9 423 785.5 421C784.1 419 783.3 417.7 782.8 416.5C782.3 415.3 782.2 414.7 782.7 414Z" fill="#ffc414" stroke="#111" stroke-width="0.8" stroke-linejoin="round"/><ellipse cx="800.3" cy="437.8" rx="2.2" ry="2.2" fill="#ffc414" stroke="#111" stroke-width="0.8"/><path d="M781.5 438.5C781.8 437.8 782.6 436.6 783.5 436.5C784.4 436.4 785.6 436.9 787 438C788.4 439.1 790.6 441.5 792 443C793.4 444.5 795 446 795.5 447C796 448 795.6 448.8 795 449C794.4 449.2 793.5 448.8 792 448C790.5 447.2 787.7 445.2 786 444C784.3 442.8 782.8 441.9 782 441C781.2 440.1 781.2 439.2 781.5 438.5Z" fill="#ffc414" stroke="#111" stroke-width="0.8" stroke-linejoin="round"/><ellipse cx="798.1" cy="450.9" rx="1.8" ry="1.8" fill="#ffc414" stroke="#111" stroke-width="0.8"/><path d="M802.1 429.9C803 429.2 805.3 426.7 807.7 425.9C810 425.2 813.6 424.7 816.2 425.3C818.8 425.8 821.2 427.6 823.3 429.1C825.4 430.5 827 432.4 828.9 433.8C830.8 435.3 833.7 437.2 834.6 437.8L833.8 439.6C832.6 439.2 829 438.3 826.9 437.2C824.7 436 822.7 434.2 820.7 432.9C818.8 431.7 817.2 430.2 815.2 429.5C813.1 428.9 810.5 428.9 808.3 429.1C806.2 429.2 803.3 430.1 802.3 430.3Z" fill="#000"/><path d="M846.3 437.5C847.2 436.4 849.8 433 851.8 431.3C853.7 429.6 855.8 428.3 858.1 427.3C860.4 426.3 862.6 425.6 865.6 425.1C868.6 424.6 872.5 424.3 875.9 424.5C879.4 424.6 884.5 425.5 886.2 425.8L886.2 426.2C884.5 426.4 879.4 426.7 876.1 427.1C872.8 427.6 869.1 428.2 866.4 428.9C863.7 429.6 861.9 430.3 859.9 431.3C857.9 432.3 856.3 433.4 854.2 434.7C852.2 435.9 848.6 438.2 847.5 438.9Z" fill="#000"/><ellipse cx="835" cy="441.5" rx="1.8" ry="2.6" fill="#ecccc0"/><ellipse cx="850.5" cy="441" rx="3" ry="3.6" fill="#ecccc0" transform="rotate(30 850.5 441)"/><path d="M834.3 449.1C834.3 448.3 829.4 443.1 826.5 441.6C823.7 440.1 820.3 439.7 817.3 439.9C814.3 440 811.3 441.6 808.5 442.3C805.7 443 801.6 442.3 800.7 444.3C799.7 446.4 801.3 452.1 802.7 454.7C804.2 457.3 808.8 460.6 809.4 460C810 459.4 805 453.9 806.4 451.3C807.8 448.6 814.3 444.9 817.7 444C821.1 443.2 824.2 445.2 827 446.1C829.7 446.9 834.4 449.8 834.3 449.1Z" fill="#ecccc0"/><path d="M833.6 451.4C833.5 450.5 829.5 446.2 826.9 444.9C824.2 443.5 820.6 443.2 817.6 443.3C814.6 443.4 811.2 444.5 808.8 445.7C806.5 447 803 450 803.3 450.8C803.7 451.6 808.4 450.9 810.9 450.5C813.3 450.1 815.4 448.3 818.2 448.2C820.9 448.2 824.8 449.7 827.4 450.3C830 450.8 833.7 452.3 833.6 451.4Z" fill="#c8c8c8"/><path d="M833.1 451.9C832 450.9 828.8 447.3 826.2 446.2C823.6 445.1 820.5 444.9 817.7 445.1C815 445.3 812.1 446.2 809.7 447.4C807.4 448.7 805 452.6 803.5 452.5C802 452.3 801.2 447.6 800.8 446.6L801 446.5C801.4 446.9 802 449.6 803.2 449.2C804.3 448.8 805.6 445.3 807.9 444C810.3 442.7 814.3 441.5 817.6 441.5C820.8 441.4 824.8 442 827.5 443.6C830.3 445.2 832.9 449.7 834 451Z" fill="#000"/><path d="M804.5 452.2C805.4 453.1 807.6 456.2 810.1 457.4C812.5 458.5 816.9 458.9 819.3 459C821.7 459 823.7 457.9 824.6 457.6" stroke="#111" stroke-width="0.8" stroke-linecap="round" fill="none"/><path d="M820.8 458.8C821 459.3 821.8 461.5 822 462" stroke="#222" stroke-width="0.6" stroke-linecap="round" fill="none"/><path d="M848.1 455.1C847.9 454.4 851.5 447.5 854.3 444.8C857.1 442.1 861.1 440.2 864.8 439C868.5 437.7 872.7 437.8 876.4 437.2C880.2 436.6 885.1 433.9 887.1 435.3C889.2 436.8 889.4 442.8 888.6 445.9C887.8 448.9 883.4 454.1 882.4 453.9C881.4 453.6 885.3 446.3 882.6 444.5C879.8 442.6 870.4 442.2 865.9 443C861.4 443.8 858.5 447.1 855.5 449.1C852.5 451.1 848.3 455.9 848.1 455.1Z" fill="#ecccc0"/><path d="M849.7 457C849.4 456.2 852.5 450.4 855.2 447.9C857.9 445.5 862 443.5 865.7 442.3C869.4 441 874 440.4 877.4 440.5C880.8 440.6 886.2 441.8 886.1 442.7C886 443.5 880 445.1 876.9 445.8C873.7 446.5 870.5 445.8 867.1 447C863.7 448.3 859.6 451.5 856.7 453.1C853.8 454.8 849.9 457.9 849.7 457Z" fill="#c8c8c8"/><path d="M849.1 456.7C849.9 455 851.5 449.5 854.1 446.8C856.8 444.1 861.2 441.8 865.1 440.4C869 439 874 438.3 877.4 438.4C880.8 438.5 883.9 441.1 885.6 441C887.3 440.8 887.3 438 887.6 437.5L887.9 437.6C887.7 438.7 888.4 443.5 886.6 444.4C884.8 445.2 880.7 442.6 877.3 442.5C874 442.5 869.9 443 866.3 444.1C862.8 445.2 858.9 446.9 856.2 449.1C853.6 451.3 851.3 456 850.3 457.4Z" fill="#000"/><path d="M885.6 444.4C884.7 445.6 883.2 449.6 880.6 451.7C878 453.9 873 456.3 870.1 457.4C867.2 458.6 864.3 458.4 863.1 458.6" stroke="#111" stroke-width="0.8" stroke-linecap="round" fill="none"/><path d="M868.2 457.9C868.2 458.5 868 460.9 868 461.4" stroke="#222" stroke-width="0.6" stroke-linecap="round" fill="none"/><ellipse cx="821.2" cy="453.1" rx="3" ry="3" fill="#bbb" stroke="#111" stroke-width="1"/><ellipse cx="821.2" cy="453.1" rx="1.4" ry="1.4" fill="#111"/><ellipse cx="863.2" cy="451.7" rx="3.2" ry="3.2" fill="#bbb" stroke="#111" stroke-width="1"/><ellipse cx="863.2" cy="451.7" rx="1.4" ry="1.4" fill="#111"/><path d="M836.9 462L834.7 469.4L836.3 471.5" stroke="#999" stroke-width="0.6" stroke-linecap="round" stroke-linejoin="round" fill="none" stroke-dasharray="2 1.2"/><path d="M837.5 484C837.8 482.3 838.8 481.1 840 480.3C841.2 479.6 843.5 479.1 845 479.5C846.5 479.9 848.4 481.1 849.3 482.5C850.2 483.9 850.6 486.3 850.4 488C850.2 489.7 849.2 491.6 848 492.5C846.8 493.4 844.6 494 843 493.7C841.4 493.4 839.4 492.1 838.5 490.5C837.6 488.9 837.2 485.7 837.5 484Z" fill="#a00808" stroke="#111" stroke-width="1.1" stroke-linejoin="round"/><path d="M839.5 482.5C839.4 481.8 842.1 480.5 843.5 480.5C844.9 480.5 847.9 481.8 848 482.5C848.1 483.2 845.4 484.5 844 484.5C842.6 484.5 839.6 483.2 839.5 482.5Z" fill="#fff" stroke="#111" stroke-width="0.5" stroke-linejoin="round"/><path d="M83 534.9C84.3 533.6 87.8 529.4 90.8 527.3C93.9 525.1 97.7 523 101.1 522.1C104.4 521.1 107.8 521.2 111 521.6C114.3 522 119 524 120.6 524.5L120.6 524.9C119 525 114 524.8 111 525C107.9 525.2 105.3 525.4 102.3 526.3C99.4 527.3 96 528.9 93.2 530.7C90.3 532.5 86.3 536 85 537.1Z" fill="#000"/><path d="M84 540.5C85.8 536.9 91 539.8 95 539.5C99 539.2 103.8 539 108 539C112.2 539 117 538.8 120 539.3C123 539.8 125 540 125.8 542C126.6 544 126 548.1 125 551C124 553.9 122.5 557.1 120 559.5C117.5 561.9 113.7 564.1 110 565.5C106.3 566.9 101.7 567.9 98 567.8C94.3 567.7 90.3 566.1 88 565C85.7 563.9 84.7 565.1 84 561C83.3 556.9 82.2 544.1 84 540.5Z" fill="#1c1c1c"/><ellipse cx="104" cy="552" rx="9" ry="9.5" fill="#333"/><ellipse cx="103.5" cy="551.5" rx="5" ry="5.5" fill="#151515"/><path d="M88 546C90 545.6 95.7 543.8 100 543.5C104.3 543.2 110.2 543.8 114 544C117.8 544.2 121.5 544.8 123 545" stroke="#444" stroke-width="1" stroke-linecap="round" fill="none"/><path d="M113 548C114 548.8 118.5 551 119 553C119.5 555 116.5 558.8 116 560" stroke="#4a4a4a" stroke-width="0.8" stroke-linecap="round" fill="none"/><rect x="89" y="549.5" width="2.2" height="2.2" fill="#e8e8e8"/><rect x="92.2" y="549.5" width="2.2" height="2.2" fill="#e8e8e8"/><rect x="88.2" y="552.7" width="2.2" height="2.2" fill="#e8e8e8"/><rect x="91.4" y="552.7" width="2.2" height="2.2" fill="#e8e8e8"/><rect x="89" y="555.9" width="2.2" height="2.2" fill="#e8e8e8"/><rect x="92.2" y="555.9" width="2.2" height="2.2" fill="#e8e8e8"/><rect x="88.2" y="559.1" width="2.2" height="2.2" fill="#e8e8e8"/><rect x="91.4" y="559.1" width="2.2" height="2.2" fill="#e8e8e8"/><path d="M84 582C84.4 581.8 86.1 580.8 86.5 580.5" stroke="#555" stroke-width="0.7" stroke-linecap="round" fill="none"/><linearGradient id="gm2" x1="0" y1="0" x2="0" y2="1"><stop offset="0" stop-color="#fbfaff"/><stop offset=".22" stop-color="#c9c0dc"/><stop offset=".52" stop-color="#767084"/><stop offset="1" stop-color="#444"/></linearGradient><path d="M186 540C186.2 536 186.5 531 188 528C189.5 525 191.3 523.1 195 522C198.7 520.9 204.5 521.4 210 521.3C215.5 521.2 222 521.2 228 521.2C234 521.2 240.7 521.1 246 521.3C251.3 521.5 256.6 521.2 260 522.5C263.4 523.8 265 525.9 266.5 529C268 532.1 268.7 536.8 269 541C269.3 545.2 269.3 550.2 268.5 554C267.7 557.8 266.4 561.4 264 564C261.6 566.6 257.5 568.7 254 569.5C250.5 570.3 246.3 569.7 243 569C239.7 568.3 236.7 566.4 234 565.5C231.3 564.6 229.3 563.4 227 563.5C224.7 563.6 222.8 565 220 566C217.2 567 213.7 569.4 210 569.8C206.3 570.2 201.3 569.8 198 568.5C194.7 567.2 191.9 564.8 190 562C188.1 559.2 187.2 555.7 186.5 552C185.8 548.3 185.8 544 186 540Z" fill="url(#gm2)"/><path d="M186.2 538C187.5 537.7 191.4 536.5 194.2 536.5C196.9 536.6 200 537.4 202.6 538.3C205.1 539.2 207.4 540.3 209.5 542C211.6 543.6 214.2 546.9 215.2 547.9L214.6 548.7C213.4 548.1 209.8 546.2 207.5 545C205.3 543.9 203.5 542.9 201.2 541.9C198.9 541 196.3 540 193.8 539.5C191.3 538.9 187.5 538.6 186.2 538.4Z" fill="#000"/><path d="M228.2 546.5C229.4 545.5 232.5 542.5 235.2 540.9C238 539.2 241.3 537.7 244.7 536.8C248.2 535.9 252.1 535.4 255.8 535.2C259.5 535.1 265.1 535.7 267 535.9L267 536.3C265.2 536.7 259.7 537.6 256.2 538.4C252.7 539.1 249.1 539.8 245.9 540.8C242.6 541.8 239.6 543.1 236.8 544.1C233.9 545.2 230.1 546.8 228.8 547.3Z" fill="#000"/><path d="M193 556.5C193.7 555.6 197.5 555.3 200 555.5C202.5 555.7 205.6 556.6 208 557.5C210.4 558.4 214 560 214.5 561C215 562 212.9 563.1 211 563.5C209.1 563.9 205.5 563.9 203 563.5C200.5 563.1 197.7 562.2 196 561C194.3 559.8 192.3 557.4 193 556.5Z" fill="#b40606"/><path d="M231.5 560.5C231.7 559.5 235.4 557.9 238 557C240.6 556.1 243.8 555.4 247 555C250.2 554.6 256.3 554 257.5 554.8C258.7 555.5 255.9 558.2 254 559.5C252.1 560.8 248.8 562 246 562.6C243.2 563.2 239.4 563.4 237 563C234.6 562.6 231.3 561.5 231.5 560.5Z" fill="#b40606"/><path d="M191.5 554.3C192.6 554 195.6 552.7 198.1 552.8C200.6 552.8 204.2 553.8 206.5 554.6C208.7 555.4 210.2 556.3 211.6 557.5C213.1 558.6 214.6 560.7 215.2 561.3L214.8 561.7C214.1 561.3 211.9 560.3 210.4 559.5C208.8 558.8 207.6 558.1 205.5 557.4C203.4 556.7 200.2 555.7 197.9 555.2C195.5 554.8 192.6 554.8 191.5 554.7Z" fill="#000"/><path d="M230.4 560.8C231.4 559.9 234 556.6 236.4 555.3C238.8 553.9 242.1 553.2 244.7 552.7C247.3 552.2 249.6 552.2 251.9 552.3C254.2 552.3 257.4 552.9 258.5 553.1L258.5 553.5C257.4 553.7 254.3 554.3 252.1 554.7C249.9 555.1 247.7 555.4 245.3 555.9C242.9 556.4 240 556.8 237.6 557.7C235.1 558.6 231.8 560.6 230.6 561.2Z" fill="#000"/><path d="M196 562.5C197.3 562.8 201.3 564.3 204 564.5C206.7 564.7 210.7 563.7 212 563.5" stroke="#111" stroke-width="0.8" stroke-linecap="round" fill="none"/><path d="M235 564C236.5 564 241 564.4 244 563.8C247 563.2 251.5 561 253 560.5" stroke="#111" stroke-width="0.8" stroke-linecap="round" fill="none"/><path d="M217.5 567.5L215.5 572L217 574.5" stroke="#888" stroke-width="0.7" stroke-linecap="round" stroke-linejoin="round" fill="none"/><path d="M215.5 584.3C216.2 584.5 218.2 585.4 220 585.5C221.8 585.6 223.8 585.6 226 585.2C228.2 584.8 231.9 583.4 233.1 583" stroke="#333" stroke-width="0.9" stroke-linecap="round" fill="none"/><path d="M338.7 534.5C339.9 534 343.3 532.2 345.9 531.7C348.4 531.2 351.4 531.2 354 531.5C356.6 531.8 359.1 532.6 361.6 533.6C364.1 534.5 367.7 536.7 368.9 537.3L368.3 539.1C366.9 538.8 362.9 537.7 360.4 537C358 536.4 355.8 535.7 353.4 535.3C351 534.9 348.6 534.7 346.1 534.7C343.7 534.6 340.1 534.9 338.9 534.9Z" fill="#000"/><path d="M378.9 539.2C380.3 538.3 384.3 535.2 387.3 533.8C390.3 532.4 393.3 531.3 396.7 530.9C400.2 530.5 404.5 530.8 408.1 531.4C411.8 532 417 533.9 418.7 534.5L418.7 534.9C416.9 534.9 411.4 534.6 407.9 534.6C404.3 534.6 400.5 534.6 397.3 535.1C394.1 535.5 391.6 536.2 388.7 537.2C385.8 538.2 381.3 540.3 379.9 541Z" fill="#000"/><ellipse cx="365.1" cy="542.8" rx="3.2" ry="2.4" fill="#ecccc0" transform="rotate(30 365.1 542.8)"/><ellipse cx="384.8" cy="542.8" rx="3.6" ry="2.5" fill="#ecccc0" transform="rotate(-25 384.8 542.8)"/><ellipse cx="352.3" cy="552.1" rx="11.8" ry="3.2" fill="#ecccc0"/><path d="M364.9 550.2C363.9 550.8 361 553.1 358.8 553.9C356.7 554.7 354.6 555 352.2 554.9C349.9 554.8 347 554.3 344.9 553.3C342.8 552.3 340.6 549.8 339.7 549.1L339.9 548.8C340.9 549.2 343.6 550.6 345.7 551.2C347.8 551.8 350.3 552.2 352.4 552.3C354.5 552.4 356.2 552.2 358.3 551.8C360.3 551.4 363.6 550.1 364.7 549.8Z" fill="#000"/><ellipse cx="400.1" cy="550.8" rx="15" ry="3.7" fill="#ecccc0" transform="rotate(-4 400.1 550.8)"/><path d="M384.1 549.2C385.5 549.5 389.8 550.8 392.4 551.1C395.1 551.4 397.4 551.5 400.1 551.1C402.8 550.8 406 550.1 408.6 549.2C411.2 548.3 414.5 546.3 415.7 545.7L415.9 546.1C414.9 547 412.2 550.2 409.6 551.5C407 552.8 403.3 553.7 400.4 554C397.5 554.4 394.7 554.1 392 553.4C389.2 552.7 385.3 550.3 383.9 549.6Z" fill="#000"/><path d="M343 553.5C344.2 553.9 347.5 555.7 350 556C352.5 556.3 356.7 555.6 358 555.5" stroke="#333" stroke-width="0.7" stroke-linecap="round" fill="none"/><path d="M388 555C389.7 555.2 394.7 556.6 398 556.5C401.3 556.4 406.3 554.8 408 554.5" stroke="#333" stroke-width="0.7" stroke-linecap="round" fill="none"/><path d="M371.5 557.5L369.5 562L371 563.5" stroke="#999" stroke-width="0.6" stroke-linecap="round" stroke-linejoin="round" fill="none" stroke-dasharray="2 1.2"/><path d="M371.5 571C371.8 571.6 372.9 573.3 373 574.5C373.1 575.7 371.8 576.9 372 578C372.2 579.1 373.9 580.1 374.5 581C375.1 581.9 375.3 583.1 375.5 583.5" stroke="#666" stroke-width="0.6" stroke-linecap="round" fill="none"/><path d="M360.5 568.6C360.2 567.5 354.3 566.3 352 564.5C349.7 562.7 348.5 559.9 346.5 558C344.5 556.1 342.3 554 340 553.3C337.7 552.6 334.7 553 332.5 554C330.3 555 328.1 557.3 327 559.5C325.9 561.7 325.6 564.6 326 567C326.4 569.4 327.8 572.2 329.5 574C331.2 575.8 333.8 577.2 336 577.8C338.2 578.4 340.8 578 343 577.5C345.2 577 347.2 575.6 349 574.5C350.8 573.4 352.1 572 354 571C355.9 570 360.8 569.7 360.5 568.6Z" fill="#7ef4f8" stroke="#111" stroke-width="1.3" stroke-linejoin="round"/><path d="M491.5 545C491.8 541.3 492.1 536.8 494 534C495.9 531.2 498.7 529.8 503 528.5C507.3 527.2 513.8 526.5 520 526C526.2 525.5 533.3 525.2 540 525.3C546.7 525.4 554.2 525.7 560 526.5C565.8 527.3 571.2 528.2 575 530C578.8 531.8 581.4 534.2 583 537C584.6 539.8 585 543.5 584.8 547C584.6 550.5 583.6 554.7 582 558C580.4 561.3 578.2 564.5 575 567C571.8 569.5 567.2 571.8 563 573C558.8 574.2 553.8 574.6 550 574.5C546.2 574.4 542.8 573.3 540 572.5C537.2 571.7 535.7 569.5 533.5 569.5C531.3 569.5 529.8 571.5 527 572.5C524.2 573.5 520.7 575.1 517 575.4C513.3 575.6 508.5 575.6 505 574C501.5 572.4 498.2 569 496 566C493.8 563 492.8 559.5 492 556C491.2 552.5 491.2 548.7 491.5 545Z" fill="#acacac"/><path d="M493.1 541.3C494.3 540.5 497.6 537.5 500.5 536.4C503.5 535.2 507.6 534.4 510.8 534.4C514 534.4 516.8 535.1 519.6 536.1C522.3 537.2 526.2 539.9 527.5 540.6L526.7 542.4C525.3 542 521.1 540.5 518.4 539.9C515.8 539.3 513.6 538.8 510.8 538.8C508 538.8 504.4 539.2 501.5 539.6C498.5 540.1 494.7 541.4 493.3 541.7Z" fill="#222"/><path d="M536.2 539.2C537.5 538.4 541.4 535.3 544.4 534.1C547.4 533 551.1 532.3 554.3 532.5C557.5 532.7 560.6 533.8 563.6 535.2C566.5 536.6 570.5 539.8 571.9 540.7L571.7 541.1C570.2 540.7 565.4 539.1 562.4 538.4C559.5 537.7 556.9 537 554.1 536.9C551.3 536.8 548.4 537.2 545.6 537.9C542.7 538.5 538.5 540.5 537 541Z" fill="#222"/><ellipse cx="522" cy="547.5" rx="2.6" ry="2" fill="#c49a90" transform="rotate(30 522 547.5)"/><ellipse cx="543" cy="547" rx="3.2" ry="2.2" fill="#c49a90" transform="rotate(-30 543 547)"/><path d="M497 556.5C497.2 555.2 501.1 552.8 503.8 552C506.4 551.2 509.8 550.8 513.2 551.5C516.6 552.2 523.1 555.2 524 556.5C524.9 557.8 520.9 558.8 518.6 559.5C516.4 560.2 513.2 560.9 510.5 561C507.8 561.1 504.6 560.8 502.4 560C500.1 559.2 496.8 557.8 497 556.5Z" fill="#9a9a9a"/><path d="M539 555.3C539.3 554 544.1 551.6 547.5 550.8C550.9 550 555.1 550.1 559.4 550.3C563.6 550.5 571.9 550.5 573 551.8C574.1 553.1 569 557 566.2 558.3C563.4 559.6 559.4 559.7 556 559.8C552.6 559.9 548.6 559.5 545.8 558.8C543 558 538.7 556.6 539 555.3Z" fill="#9a9a9a"/><path d="M496.8 556.3C497.8 555.4 500.2 552.4 502.5 551.2C504.9 550.1 508.3 549.6 511 549.6C513.7 549.6 516.3 550.1 518.5 551.1C520.7 552.1 523.2 555 524.2 555.7L523.8 556.3C522.8 555.9 519.6 554.4 517.5 553.9C515.4 553.3 513.3 553 511 553C508.7 553 505.8 553.1 503.5 553.8C501.2 554.4 498.2 556.3 497.2 556.7Z" fill="#2a2a2a"/><path d="M539.3 555.8C540.3 554.8 542.8 551.2 545.4 549.8C548 548.5 551.6 548.1 554.8 547.8C558 547.4 561.6 547.8 564.8 547.7C568.1 547.6 572.8 547.3 574.5 547.3L574.5 547.7C573 548.3 568.4 550.3 565.2 550.9C561.9 551.5 558.3 551.1 555.2 551.4C552.1 551.7 549.2 552 546.6 552.8C544 553.6 540.8 555.7 539.7 556.2Z" fill="#2a2a2a"/><path d="M499 557C499.7 557.9 501.2 561.2 503 562.5C504.8 563.8 507.7 564.5 510 564.5C512.3 564.5 515.8 562.8 517 562.5" stroke="#444" stroke-width="0.8" stroke-linecap="round" fill="none"/><path d="M546 560.5C547.3 561 551.2 563.5 554 563.8C556.8 564 560.3 563.3 563 562C565.7 560.7 568.8 557 570 556" stroke="#444" stroke-width="0.8" stroke-linecap="round" fill="none"/><path d="M505 564C504.9 564.4 504.6 566.1 504.5 566.5" stroke="#444" stroke-width="0.6" stroke-linecap="round" fill="none"/><path d="M560 563.5C560.1 563.9 560.4 565.6 560.5 566" stroke="#444" stroke-width="0.6" stroke-linecap="round" fill="none"/><path d="M533 566L531 571L533 574" stroke="#999" stroke-width="0.6" stroke-linecap="round" stroke-linejoin="round" fill="none"/><path d="M525.7 586.2C526.6 586.1 529.1 585.4 531 585.3C532.9 585.2 534.9 585.4 537 585.8C539.1 586.2 542.8 587.2 543.9 587.5" stroke="#222" stroke-width="0.9" stroke-linecap="round" fill="none"/><path d="M619.9 550.1C620.3 549 620.8 545.6 622.2 543.7C623.5 541.9 625.1 540 628 538.9C631 537.7 635.6 537.1 639.8 536.9C644 536.8 651 537.8 653.2 538L653.2 541.6C651 541.7 644.1 542 640.2 542.3C636.2 542.6 632.1 542.9 629.6 543.5C627 544.2 626.4 545.1 624.8 546.3C623.3 547.4 621.1 549.7 620.3 550.3Z" fill="#000"/><path d="M669.6 538.3C671.4 537.7 676.6 535.4 680.7 534.8C684.8 534.3 690.2 534.3 694.2 535.1C698.2 535.8 701.7 537.4 704.8 539.2C707.9 541.1 711.6 545 712.9 546.2L712.7 546.6C711.1 546 706.4 543.9 703.2 542.8C700 541.7 697.1 540.6 693.4 540.1C689.8 539.7 685.1 539.9 681.3 540.2C677.4 540.5 672.2 541.6 670.4 541.9Z" fill="#000"/><ellipse cx="651.8" cy="557.2" rx="2.6" ry="3.2" fill="#ecccc0" transform="rotate(-20 651.8 557.2)"/><ellipse cx="672.1" cy="556.4" rx="3" ry="4" fill="#ecccc0" transform="rotate(30 672.1 556.4)"/><path d="M654.6 560C654.5 559.3 648.9 554.5 645.7 553.2C642.5 551.9 638.8 551.9 635.5 552.3C632.2 552.7 629 554.5 626 555.5C622.9 556.5 618.2 556.1 617.2 558.2C616.3 560.4 618.5 565.9 620.3 568.4C622.1 570.8 627.4 573.7 628.1 573.1C628.7 572.5 622.9 567.4 624.2 564.6C625.6 561.8 632.5 557.6 636.2 556.4C639.9 555.3 643.4 557 646.5 557.6C649.5 558.3 654.7 560.8 654.6 560Z" fill="#ecccc0"/><path d="M654 562.4C653.9 561.5 649.3 557.6 646.3 556.5C643.3 555.3 639.3 555.3 636.1 555.7C632.8 556.1 629.1 557.4 626.6 558.9C624 560.3 620.4 563.7 620.9 564.4C621.3 565.2 626.4 564.1 629.1 563.5C631.7 562.8 633.9 560.8 636.9 560.6C639.9 560.3 644.4 561.5 647.2 561.8C650 562.1 654.2 563.3 654 562.4Z" fill="#c8c8c8"/><ellipse cx="638" cy="564" rx="7" ry="7.4" fill="#3a3a3a" stroke="#161616" stroke-width="1.0"/><ellipse cx="638" cy="567.5" rx="4.6" ry="2.5" fill="#555"/><ellipse cx="638" cy="563.6" rx="3.5" ry="3.9" fill="#1e1e1e"/><ellipse cx="635.6" cy="561.2" rx="2.1" ry="2.1" fill="#fff"/><path d="M653.6 563C652.3 562.1 648.6 558.8 645.7 557.9C642.8 557 639.3 557.2 636.3 557.6C633.3 558.1 630.1 559.2 627.6 560.6C625.1 562.1 622.8 566.2 621.2 566.2C619.5 566.2 618.1 561.5 617.5 560.5L617.7 560.4C618.2 560.8 619.3 563.3 620.6 562.7C621.9 562.2 623 558.6 625.6 557.1C628.1 555.6 632.3 554.1 635.8 553.7C639.4 553.4 643.7 553.7 646.8 555C649.9 556.4 653.2 560.7 654.4 561.9Z" fill="#000"/><path d="M622.1 565.8C623.2 566.5 625.8 569.5 628.6 570.4C631.4 571.3 636.2 571.3 638.8 571.2C641.5 571 643.6 569.7 644.5 569.4" stroke="#111" stroke-width="0.8" stroke-linecap="round" fill="none"/><path d="M640.4 570.9C640.7 571.4 641.7 573.5 642 574" stroke="#222" stroke-width="0.6" stroke-linecap="round" fill="none"/><path d="M670.7 564.4C670.6 563.7 675 557.1 678.1 554.7C681.2 552.3 685.6 550.9 689.5 550C693.4 549.1 697.6 549.6 701.5 549.4C705.5 549.1 711.1 546.9 713.1 548.6C715 550.2 714.4 556.2 713.2 559.2C712 562.2 706.8 566.9 705.8 566.6C704.8 566.3 709.6 559.3 707 557.2C704.4 555.2 694.9 553.8 690.2 554.1C685.5 554.4 682.2 557.4 678.9 559.2C675.6 560.9 670.8 565.1 670.7 564.4Z" fill="#ecccc0"/><path d="M672.1 566.5C671.9 565.6 675.7 560.1 678.7 558C681.7 555.8 686.2 554.2 690.1 553.4C694 552.5 698.7 552.4 702.1 552.8C705.6 553.2 711 554.9 710.8 555.8C710.6 556.7 704.3 557.6 701 558C697.7 558.4 694.5 557.4 690.9 558.3C687.4 559.1 682.8 561.9 679.6 563.3C676.5 564.7 672.2 567.3 672.1 566.5Z" fill="#c8c8c8"/><ellipse cx="689.2" cy="562.7" rx="7.6" ry="7.9" fill="#3a3a3a" stroke="#161616" stroke-width="1.0"/><ellipse cx="689.2" cy="566.5" rx="4.9" ry="2.7" fill="#555"/><ellipse cx="689.2" cy="562.3" rx="3.8" ry="4.2" fill="#1e1e1e"/><ellipse cx="686.5" cy="559.6" rx="2.3" ry="2.3" fill="#fff"/><path d="M671.5 566C672.5 564.4 674.7 559.1 677.7 556.6C680.7 554.2 685.5 552.4 689.6 551.4C693.7 550.3 698.9 550.2 702.4 550.6C705.9 551 708.7 554 710.5 554C712.3 554 712.9 551.2 713.3 550.7L713.6 550.8C713.2 552 713.1 557 711.1 557.6C709.2 558.3 705.3 555.3 701.9 554.9C698.5 554.6 694.2 554.7 690.5 555.4C686.8 556.1 682.6 557.4 679.7 559.3C676.7 561.2 673.8 565.6 672.6 566.9Z" fill="#000"/><path d="M710.1 557.5C709.1 558.6 707.1 562.4 704.2 564.3C701.3 566.2 695.9 568 692.8 568.9C689.7 569.7 686.8 569.3 685.6 569.4" stroke="#111" stroke-width="0.8" stroke-linecap="round" fill="none"/><path d="M690.8 569.2C690.7 569.8 690.3 572.1 690.2 572.7" stroke="#222" stroke-width="0.6" stroke-linecap="round" fill="none"/><path d="M657.2 576.2L654.5 583.5L657.2 587" stroke="#666" stroke-width="0.7" stroke-linecap="round" stroke-linejoin="round" fill="none"/><path d="M655.3 600.6C655.9 600.2 657.7 599 659 598.5C660.3 598 661.7 597.8 663 597.8C664.3 597.8 665.7 598 667 598.5C668.3 599 670.2 600.2 670.8 600.6" stroke="#222" stroke-width="0.9" stroke-linecap="round" fill="none"/><path d="M851.5 529.5V556" stroke="#000" stroke-width="1.3"/><path d="M854.5 532V557.5" stroke="#000" stroke-width="1.3"/><path d="M856.5 531V556.5" stroke="#000" stroke-width="1.3"/><path d="M859.5 533V558" stroke="#000" stroke-width="1.3"/><path d="M862.5 531.5V557" stroke="#000" stroke-width="1.3"/><path d="M865.5 530V558.5" stroke="#000" stroke-width="1.3"/><path d="M867.5 532V559" stroke="#000" stroke-width="1.3"/><path d="M870.5 533.5V558" stroke="#000" stroke-width="1.3"/><path d="M873.5 533V560" stroke="#000" stroke-width="1.3"/><path d="M875.5 532V559.5" stroke="#000" stroke-width="1.3"/><path d="M878.5 533.5V560.5" stroke="#000" stroke-width="1.3"/><path d="M881.5 534V560" stroke="#000" stroke-width="1.3"/><path d="M884.5 534.5V560.5" stroke="#000" stroke-width="1.3"/><path d="M790.7 544C791.5 543.2 793.4 540.4 795.4 539.4C797.4 538.4 800.3 537.7 802.7 538C805 538.4 807.5 540.1 809.5 541.6C811.4 543 813 545.4 814.4 546.8C815.9 548.3 817 549.4 818.2 550.4C819.4 551.3 821.2 552.2 821.8 552.5L821.6 553.3C820.8 553.3 818.5 553.7 816.8 553.2C815.1 552.7 813.3 551.4 811.6 550.2C809.8 548.9 808.2 546.7 806.5 545.4C804.9 544.2 803.4 543 801.7 542.6C800.1 542.1 798.4 542.3 796.6 542.6C794.8 542.9 791.9 544.1 790.9 544.4Z" fill="#000"/><path d="M834.5 551.5C835.4 550.6 837.9 548.2 840 546.5C842.1 544.7 844.7 542.3 847.1 540.8C849.5 539.3 851.8 538.1 854.3 537.3C856.7 536.5 859.5 536.2 861.6 536.1C863.8 536.1 865.4 536.4 867.3 537.1C869.1 537.7 871.8 539.4 872.7 539.8L872.5 540.4C871.6 540.3 868.5 540 866.7 539.9C865 539.9 863.8 540 862 540.3C860.1 540.6 857.8 540.9 855.7 541.7C853.7 542.4 851.8 543.5 849.5 544.8C847.2 546.1 844.4 548.3 842 549.5C839.6 550.8 836.1 551.7 834.9 552.1Z" fill="#000"/><ellipse cx="820.6" cy="559.1" rx="1.8" ry="3" fill="#ecccc0" transform="rotate(-15 820.6 559.1)"/><ellipse cx="838.8" cy="557.7" rx="2.6" ry="3.6" fill="#ecccc0" transform="rotate(30 838.8 557.7)"/><ellipse cx="807.1" cy="571.8" rx="13" ry="10.5" fill="#fff" stroke="#111" stroke-width="0.9"/><ellipse cx="851.8" cy="571.8" rx="14.5" ry="11" fill="#fff" stroke="#111" stroke-width="0.9"/><path d="M825.3 574.5L823.5 581L824.5 583.5" stroke="#bbb" stroke-width="0.6" stroke-linecap="round" stroke-linejoin="round" fill="none"/><path d="M823.3 598C823.8 597.4 824.9 595.3 826 594.5C827.1 593.7 828.5 593 829.8 593C831.1 593 832.5 593.9 834 594.8C835.5 595.7 838 597.8 838.8 598.4" stroke="#222" stroke-width="0.9" stroke-linecap="round" fill="none"/><linearGradient id="gm3" x1="0" y1="0" x2="0" y2="1"><stop offset="0" stop-color="#f4f0fa"/><stop offset=".5" stop-color="#cfc6e2"/><stop offset="1" stop-color="#9a92b0"/></linearGradient><path d="M84 641.5L100 640.3L116 640.8L124 642.5L128 646L131 655L132.8 665L132.8 680L84 680Z" fill="url(#gm3)"/><path d="M93.4 663.2C94.5 662.2 97.7 658.9 100.3 657.4C103 655.8 106.1 654.7 109.4 653.9C112.6 653.1 116.4 652.7 119.8 652.6C123.3 652.5 128.4 653.4 130.1 653.5L130.1 654.3C128.5 654.6 123.5 655.4 120.2 656C116.8 656.6 113.3 657 110.2 657.7C107.2 658.4 104.4 659.3 101.7 660.2C98.9 661.2 95 663.1 93.6 663.6Z" fill="#000"/><path d="M96.1 675.8C97.6 676 101.8 677.1 105.1 677.3C108.4 677.5 112.2 677.2 115.8 676.8C119.4 676.4 125.1 675.1 126.9 674.8L127.1 675.2C125.3 675.9 119.9 678.5 116.2 679.2C112.5 680 108.3 680.2 104.9 679.7C101.5 679.2 97.4 676.8 95.9 676.2Z" fill="#000"/><path d="M190.4 655.7C190.4 654.6 189.9 651.1 190.7 648.9C191.5 646.8 192.7 644.6 195.1 643.1C197.5 641.6 200.9 640.6 205.3 639.8C209.8 638.9 219.2 638.3 221.9 638L222.7 642.8C220 643.4 210.8 645.3 206.7 646.2C202.5 647.2 200 647.7 197.9 648.5C195.8 649.3 195.5 649.8 194.3 651.1C193.1 652.3 191.4 655.1 190.8 655.9Z" fill="#000"/><path d="M240.6 638C242.9 638 249.9 637.6 254.5 638.2C259.1 638.8 264.7 640 268.2 641.6C271.7 643.2 273.6 645.6 275.5 647.9C277.3 650.1 278.7 653.9 279.4 655.1L279 655.5C277.9 654.7 274.7 652.5 272.5 651.1C270.3 649.8 269 648.5 265.8 647.4C262.6 646.4 257.8 645.5 253.5 644.8C249.2 644 242.4 643.2 240.2 642.8Z" fill="#000"/><ellipse cx="219.6" cy="662" rx="2.2" ry="3.6" fill="#f0b8a8" transform="rotate(-35 219.6 662)"/><ellipse cx="243.9" cy="660.2" rx="2.2" ry="3.6" fill="#f0b8a8" transform="rotate(40 243.9 660.2)"/><path d="M209.7 669.4L209.8 669.7L209.8 670L209.7 670.4L209.5 670.8L209.1 671.1L208.7 671.3L208.2 671.4L207.6 671.3L207 671.1L206.5 670.6L206.1 670.1L205.9 669.4L205.8 668.6L206 667.8L206.4 667.1L207 666.4L207.8 666L208.7 665.7L209.7 665.7L210.7 665.9L211.7 666.4L212.5 667.2L213 668.2L213.3 669.4L213.3 670.6L213 671.9L212.3 673L211.3 673.9L210.1 674.6L208.7 675L207.2 674.9L205.8 674.5L204.4 673.7L203.4 672.5L202.6 671L202.2 669.4L202.3 667.7L202.8 666L203.8 664.5L205.2 663.3L206.8 662.4L208.7 662L210.7 662.1L212.6 662.7L214.3 663.8L215.6 665.4L216.6 667.3L217 669.4L216.9 671.6L216.2 673.7L214.9 675.6L213.2 677.1L211.1 678.2L208.7 678.6L206.3 678.5L203.9 677.7L201.8 676.3L200.2 674.3L199 672L198.5 669.4L198.7 666.7L199.6 664.2L201.2 661.9L203.3 660.1L205.9 658.8L208.7 658.3L211.6 658.5L214.4 659.5L216.9 661.2L218.8 663.6L220.1 666.3L220.7 669.4" stroke="#000" stroke-width="2" fill="none" stroke-linecap="round" stroke-linejoin="round"/><path d="M257.1 668.8L257.2 669.1L257.2 669.5L257.1 669.8L256.9 670.2L256.6 670.5L256.1 670.8L255.6 670.8L255 670.8L254.4 670.5L253.9 670.1L253.4 669.5L253.2 668.8L253.1 668L253.3 667.2L253.7 666.4L254.3 665.7L255.1 665.2L256.1 664.9L257.1 664.9L258.2 665.2L259.2 665.7L260 666.5L260.6 667.6L260.9 668.8L260.9 670.1L260.6 671.4L259.9 672.6L258.8 673.5L257.6 674.2L256.1 674.6L254.6 674.5L253 674.1L251.7 673.2L250.5 672L249.7 670.5L249.4 668.8L249.4 667L250 665.3L251 663.7L252.4 662.4L254.1 661.5L256.1 661.1L258.1 661.2L260.1 661.8L261.9 663L263.3 664.6L264.3 666.6L264.8 668.8L264.6 671.1L263.9 673.3L262.6 675.3L260.8 676.9L258.5 677.9L256.1 678.4L253.6 678.3L251.1 677.4L249 675.9L247.2 673.9L246 671.5L245.5 668.8L245.7 666L246.7 663.3L248.3 661L250.5 659.1L253.2 657.8L256.1 657.3L259.1 657.5L262 658.5L264.6 660.3L266.6 662.7L268 665.6L268.6 668.8" stroke="#000" stroke-width="2" fill="none" stroke-linecap="round" stroke-linejoin="round"/><path d="M332.7 636.7C334 637.5 338.2 640.1 340.9 641.7C343.7 643.3 346.5 645.1 349.3 646.3C352 647.6 354.5 648.4 357.5 649.4C360.5 650.3 365.6 651.6 367.3 652.1L367.1 653.1C365.4 653.2 359.8 654.1 356.5 653.6C353.2 653.2 350.2 651.8 347.3 650.3C344.4 648.7 341.6 646.5 339.1 644.3C336.6 642.1 333.5 638.3 332.3 637.1Z" fill="#000"/><path d="M379.3 652.1C380.8 651.5 385.1 649.9 388.3 648.5C391.6 647.1 395.4 645.4 398.6 643.7C401.9 642.1 405.1 640.1 407.9 638.4C410.6 636.7 412.7 634.9 415.2 633.4C417.7 631.9 421.4 630.1 422.7 629.4L422.9 629.8C421.9 630.7 418.9 633.6 416.8 635.6C414.7 637.5 412.8 639.6 410.1 641.6C407.4 643.7 404.2 646 400.8 647.9C397.4 649.7 393.2 651.6 389.7 652.5C386.1 653.3 381.2 653 379.5 653.1Z" fill="#000"/><path d="M366.9 662.1C366.7 661.2 361.9 657.6 358.9 656.6C356 655.7 352.2 655.9 349 656.5C345.9 657.1 342.4 658.7 340.1 660.3C337.7 661.9 334.5 665.5 334.9 666.2C335.4 666.9 340.3 665.5 342.8 664.7C345.3 663.9 347.3 661.8 350.2 661.3C353.1 660.8 357.5 661.8 360.2 661.9C363 662 367.1 663 366.9 662.1Z" fill="#c8c8c8"/><path d="M366.5 662.6C365.2 661.9 361.4 658.8 358.5 658C355.6 657.3 352.2 657.7 349.3 658.3C346.5 658.9 343.5 660.3 341.1 661.9C338.8 663.4 336.9 667.7 335.3 667.8C333.8 667.9 332.4 663.3 331.8 662.4L332 662.2C332.4 662.6 333.4 665.2 334.5 664.6C335.7 664 336.6 660.3 339 658.7C341.3 657 345.3 655.3 348.7 654.7C352.1 654.1 356.3 654.1 359.4 655.2C362.5 656.4 365.9 660.5 367.2 661.6Z" fill="#000"/><path d="M336.3 667.4C337.4 668.1 340.1 670.9 342.9 671.6C345.6 672.4 350.3 672.1 352.8 671.8C355.4 671.4 357.3 670 358.2 669.7" stroke="#111" stroke-width="0.8" stroke-linecap="round" fill="none"/><path d="M354.4 671.4C354.7 671.9 355.8 673.9 356.1 674.4" stroke="#222" stroke-width="0.6" stroke-linecap="round" fill="none"/><path d="M385.1 669.2C384.9 668.3 387.9 662.6 390.5 660.2C393.1 657.7 397.1 655.8 400.7 654.6C404.3 653.4 408.8 652.8 412.1 652.9C415.4 653 420.7 654.2 420.6 655.1C420.6 656 414.7 657.4 411.6 658.2C408.5 658.9 405.4 658.1 402.1 659.3C398.8 660.5 394.8 663.7 392 665.4C389.1 667 385.4 670 385.1 669.2Z" fill="#c8c8c8"/><path d="M384.6 668.8C385.4 667.2 386.8 661.7 389.4 659C392 656.3 396.3 654.1 400.1 652.7C403.9 651.4 408.8 650.7 412.2 650.8C415.5 650.9 418.5 653.6 420.2 653.4C421.8 653.3 421.8 650.5 422.1 649.9L422.4 650C422.2 651.1 422.9 656 421.1 656.8C419.4 657.6 415.3 655 412 654.9C408.7 654.9 404.8 655.4 401.3 656.4C397.9 657.5 394.1 659.1 391.5 661.3C388.9 663.5 386.7 668.2 385.7 669.5Z" fill="#000"/><path d="M420.1 656.8C419.3 658 417.8 662 415.3 664.1C412.8 666.3 407.9 668.6 405.1 669.7C402.2 670.8 399.4 670.7 398.3 670.9" stroke="#111" stroke-width="0.8" stroke-linecap="round" fill="none"/><path d="M403.2 670.2C403.2 670.8 403.1 673.1 403.1 673.7" stroke="#222" stroke-width="0.6" stroke-linecap="round" fill="none"/><ellipse cx="354.2" cy="666.7" rx="3.3" ry="3.3" fill="#555" stroke="#111" stroke-width="1"/><ellipse cx="354.2" cy="666.7" rx="1.6" ry="1.6" fill="#111"/><ellipse cx="353.2" cy="665.5" rx="0.8" ry="0.8" fill="#fff"/><ellipse cx="401.7" cy="664.8" rx="3.8" ry="3.8" fill="#555" stroke="#111" stroke-width="1"/><ellipse cx="401.7" cy="664.8" rx="1.9" ry="1.9" fill="#111"/><ellipse cx="400.6" cy="663.5" rx="0.9" ry="0.9" fill="#fff"/><path d="M426 637.5C427.1 643.5 430.6 646 430.6 649.9A4.6 4.6 0 0 1 421.4 649.9C421.4 646 424.9 643.5 426 637.5Z" fill="#fff" stroke="#888" stroke-width="0.7"/><path d="M437 652.5C437.8 656.9 440.4 658.8 440.4 661.6A3.4 3.4 0 0 1 433.6 661.6C433.6 658.8 436.2 656.9 437 652.5Z" fill="#fff" stroke="#888" stroke-width="0.7"/><path d="M416.5 671V680" stroke="#000" stroke-width="1.3"/><path d="M419.5 669V680" stroke="#000" stroke-width="1.3"/><path d="M422.5 668V680" stroke="#000" stroke-width="1.3"/><path d="M425.5 667.5V680" stroke="#000" stroke-width="1.3"/><path d="M428.5 668.5V680" stroke="#000" stroke-width="1.3"/><path d="M431.5 671V680" stroke="#000" stroke-width="1.3"/>
<path d="M1166 352C1168 370 1172 383 1177 393C1184 412 1198 436 1216.800 456.200C1206 436 1197 416 1192 396C1202 428 1222 455 1244.700 469.400C1254 477 1263 483 1272.600 487C1262 476 1252 465 1246 453C1256 474 1268 490 1280 503.200C1291 488 1300 470 1306 448C1309 435 1310.500 420 1311 405C1313 420 1320 433 1330 441.500C1329 432 1332 424 1332.900 416.500C1336 404 1338 392 1338.800 381L1343.200 396C1347 386 1349 378 1348.200 369.400C1346 358 1343 352 1338.800 346C1334 336 1332 326 1330 316.500L1324 290L1300 262L1240 300Z" fill="#393939" stroke="#0c0c0c" stroke-width="1" stroke-linejoin="round"/><path d="M1186 366Q1191.8 407.6 1213 448Q1193 409.8 1186 366Z" fill="#2a2a2a"/><path d="M1214 362Q1220.9 409.7 1244 456Q1220.5 412.3 1214 362Z" fill="#2a2a2a"/><path d="M1248 360Q1250.8 414.4 1270 468Q1250.2 416.2 1248 360Z" fill="#2a2a2a"/><path d="M1280 366Q1272.7 426 1281 486Q1273.5 426.1 1280 366Z" fill="#2a2a2a"/><path d="M1300 350Q1293.4 397 1302 444Q1295 397.2 1300 350Z" fill="#2a2a2a"/><path d="M1318 326Q1314.1 371.1 1325 416Q1316.5 371.5 1318 326Z" fill="#2a2a2a"/><path d="M1332 340Q1328 356.2 1338 372Q1332.1 356.9 1332 340Z" fill="#2a2a2a"/><path d="M1191 393C1196 414 1205 436 1216.800 456.200C1208 442 1200 426 1195 408Z" fill="#fff"/><path d="M1246 453C1253 467 1262 478 1272.600 487C1264 481 1256 472 1250 462Z" fill="#fff"/><path d="M1205 372C1206 377 1208.2 392.3 1211 402C1213.8 411.7 1217.8 421.7 1222 430C1226.2 438.3 1233.7 448.3 1236 452" stroke="#0c0c0c" stroke-width="0.7" stroke-linecap="round" fill="none"/><path d="M1240 372C1241 378.3 1243.3 398.3 1246 410C1248.7 421.7 1252 432 1256 442C1260 452 1267.7 465.3 1270 470" stroke="#0c0c0c" stroke-width="0.7" stroke-linecap="round" fill="none"/><path d="M1270 380C1271 386.7 1274.2 406.7 1276 420C1277.8 433.3 1279.8 448.3 1281 460C1282.2 471.7 1282.7 485 1283 490" stroke="#0c0c0c" stroke-width="0.7" stroke-linecap="round" fill="none"/><path d="M1300 372C1300.7 376.7 1303.5 390.3 1304 400C1304.5 409.7 1304.2 420.3 1303 430C1301.8 439.7 1298 453.3 1297 458" stroke="#0c0c0c" stroke-width="0.7" stroke-linecap="round" fill="none"/><path d="M1318 330C1318.8 335.8 1321.5 353.3 1323 365C1324.5 376.7 1326.2 389.2 1327 400C1327.8 410.8 1327.8 425 1328 430" stroke="#0c0c0c" stroke-width="0.7" stroke-linecap="round" fill="none"/><path d="M1326.500 253.500C1336 267 1348 283 1355.500 295C1357.500 299.500 1356.500 303 1353 304.500C1349 306.500 1345 308 1342 307.800C1338 306.500 1335 304.500 1333 302.500C1329 296 1325 289 1321.500 281" stroke="#0c0c0c" stroke-width="7" fill="none" stroke-linejoin="round"/><path d="M1326.500 253.500C1336 267 1348 283 1355.500 295C1357.500 299.500 1356.500 303 1353 304.500C1349 306.500 1345 308 1342 307.800C1338 306.500 1335 304.500 1333 302.500C1329 296 1325 289 1321.500 281" stroke="#b5473e" stroke-width="5.400" fill="none" stroke-linejoin="round"/><path d="M1279 296C1288 290 1306 291 1310 299C1311 309 1300 320 1288 324.500C1283 325 1280 322 1279 318Z" fill="#ffeedc" stroke="#0c0c0c" stroke-width="0.9" stroke-linejoin="round"/><path d="M1281 299C1290 296 1299 297 1301 302C1298 307 1290 309 1282 309.500Z" fill="#e3b3ad"/><path d="M1136.700 217.900C1145 206 1160 203 1166.600 215.800C1176 204 1195 205 1200 212.600L1216.400 223.700L1212.400 250.300L1218.700 232.900L1237.200 237.500L1259.100 247.900L1256.500 257.600C1260 280 1264 300 1266.800 325.300C1252 338 1232 351 1209 356.500C1195 360 1180 360.500 1166 357C1150 352.500 1136 344 1129.400 334.500C1124 326 1122 318 1122 308L1121.500 272L1125.200 252.500C1127 240 1131 228 1136.700 217.900Z" fill="#ffeedc" stroke="#0c0c0c" stroke-width="1" stroke-linejoin="round"/><path d="M1133 228C1137 216 1146 210.500 1156 210.500C1162 210.500 1165 213 1166.600 217.500C1169 212 1174 209.800 1181 209.500C1190 209 1197 210 1202 213.500C1208 217.500 1213 222 1216 227" stroke="#dfb3ab" stroke-width="5" fill="none"/><path d="M1117.7 251.1C1119.1 250.6 1122.9 248.7 1125.8 248C1128.7 247.3 1132.2 247 1135.2 247C1138.2 247.1 1140.8 247.5 1143.8 248.3C1146.9 249.1 1150.2 250.1 1153.3 251.6C1156.4 253.1 1160.2 255.2 1162.6 257.4C1164.9 259.5 1166.2 261.8 1167.5 264.5C1168.8 267.2 1170.1 272 1170.6 273.5L1170.2 273.7C1169.2 272.5 1166.3 268.5 1164.5 266.5C1162.7 264.5 1161.5 263.1 1159.2 261.6C1156.9 260.1 1153.5 258.6 1150.7 257.4C1147.8 256.3 1144.8 255.4 1142.2 254.7C1139.5 254 1137.4 253.4 1134.8 253C1132.1 252.6 1129 252.6 1126.2 252.4C1123.4 252.2 1119.3 252 1117.9 251.9Z" fill="#000"/><path d="M1193 269.3C1193.4 267.9 1194 263.5 1195.4 260.8C1196.8 258.2 1198.7 255.4 1201.4 253.5C1204 251.5 1207.4 250.2 1211.1 249.1C1214.8 248.1 1219.2 247.6 1223.6 247.1C1228.1 246.7 1233.4 246.5 1237.8 246.5C1242.2 246.5 1246.3 246.7 1249.9 246.9C1253.5 247.1 1257.8 247.7 1259.4 247.9L1259.4 248.5C1257.9 248.8 1253.6 249.6 1250.1 250.1C1246.5 250.6 1242.4 251 1238.2 251.5C1233.9 252 1228.6 252.6 1224.4 253.3C1220.2 253.9 1216.2 254.6 1212.9 255.5C1209.6 256.4 1207 257.2 1204.6 258.5C1202.3 259.8 1200.5 261.3 1198.6 263.2C1196.7 265 1194.3 268.5 1193.4 269.5Z" fill="#000"/><ellipse cx="1165.3" cy="276.7" rx="3" ry="4.2" fill="#e9bdb6" transform="rotate(-35 1165.3 276.7)"/><ellipse cx="1199" cy="276.5" rx="3.2" ry="5" fill="#e9bdb6" transform="rotate(40 1199 276.5)"/><path d="M1123 274.5C1123.8 271.3 1130.5 276.1 1135 277C1139.5 277.9 1145.2 278.2 1150 280C1154.8 281.8 1162.3 285.3 1164 288C1165.7 290.7 1162.3 293.8 1160 296C1157.7 298.2 1153.7 300.7 1150 301.5C1146.3 302.3 1141.3 301.9 1138 301C1134.7 300.1 1132.5 300.4 1130 296C1127.5 291.6 1122.2 277.7 1123 274.5Z" fill="#fff"/><path d="M1124 275C1124.8 274.2 1131.7 276.6 1136 277.5C1140.3 278.4 1145.5 278.8 1150 280.5C1154.5 282.2 1162.7 287.2 1163 288C1163.3 288.8 1155.8 286.3 1152 285.5C1148.2 284.7 1143.5 283.6 1140 283C1136.5 282.4 1133.7 283.3 1131 282C1128.3 280.7 1123.2 275.8 1124 275Z" fill="#c9c9c9"/><ellipse cx="1148.3" cy="288.5" rx="8.6" ry="9" fill="#4e4e4e" stroke="#161616" stroke-width="1.3"/><ellipse cx="1148.3" cy="292.5" rx="5.5" ry="4" fill="#7c7c7c"/><ellipse cx="1148.3" cy="288.3" rx="4.3" ry="4.8" fill="#1c1c1c"/><ellipse cx="1150.5" cy="284.3" rx="2.8" ry="2.8" fill="#fff"/><ellipse cx="1145.5" cy="293.5" rx="1.2" ry="1.2" fill="#eee"/><path d="M1120.6 271.6C1121.8 271.8 1124.8 272.2 1127.4 272.6C1130.1 272.9 1133.3 273.1 1136.5 273.6C1139.7 274.2 1143.4 274.6 1146.7 275.6C1149.9 276.6 1153.4 278.1 1156 279.4C1158.5 280.7 1160.6 282 1162.1 283.6C1163.7 285.2 1164.8 288.3 1165.3 289.2L1164.7 289.8C1163.9 289.2 1161.7 287.4 1159.9 286.4C1158.1 285.4 1156.5 284.6 1154 283.6C1151.6 282.6 1148.4 281.3 1145.3 280.4C1142.2 279.5 1138.7 279.1 1135.5 278.4C1132.4 277.6 1129.1 277 1126.6 276C1124 275 1121.4 273 1120.4 272.4Z" fill="#000"/><path d="M1121.5 272.3C1122.1 273.5 1124.3 276.9 1125.6 279.5C1126.9 282 1128.3 285 1129.4 287.6C1130.5 290.1 1131.8 293.6 1132.3 294.9L1131.7 295.1C1131 294 1129 290.9 1127.6 288.4C1126.2 286 1124.6 283.1 1123.4 280.5C1122.2 277.9 1121 274 1120.5 272.7Z" fill="#000"/><path d="M1130.4 296C1131.3 296.8 1133.7 299.4 1136 300.5C1138.3 301.6 1141.3 302.6 1144 302.8C1146.7 303 1150.7 301.7 1152 301.5" stroke="#111" stroke-width="1" stroke-linecap="round" fill="none"/><path d="M1130 296.5C1129.6 296.8 1127.9 298.2 1127.5 298.5" stroke="#111" stroke-width="0.8" stroke-linecap="round" fill="none"/><path d="M1140 302.5C1139.9 302.9 1139.6 304.4 1139.5 304.8" stroke="#111" stroke-width="0.7" stroke-linecap="round" fill="none"/><path d="M1122 271C1124 271 1130 270.5 1134 270.8C1138 271.1 1142 271.8 1146 273C1150 274.2 1156 277.2 1158 278" stroke="#7a4a44" stroke-width="0.7" stroke-linecap="round" fill="none"/><path d="M1196.5 287.5C1197.2 285.2 1202.1 281.2 1206 279C1209.9 276.8 1215 275.2 1220 274C1225 272.8 1230.8 272.2 1236 271.5C1241.2 270.8 1249.3 268.2 1251 270C1252.7 271.8 1248.2 278.3 1246 282C1243.8 285.7 1241.3 289.5 1238 292C1234.7 294.5 1230.3 296.2 1226 297C1221.7 297.8 1216 297.2 1212 296.5C1208 295.8 1204.6 294 1202 292.5C1199.4 291 1195.8 289.8 1196.5 287.5Z" fill="#fff"/><path d="M1197 287C1197.5 285.8 1202.2 281.6 1206 279.5C1209.8 277.4 1215 275.8 1220 274.5C1225 273.2 1231 272.7 1236 272C1241 271.3 1249.3 269.7 1250 270.5C1250.7 271.3 1244 275.6 1240 277C1236 278.4 1230.7 278.2 1226 279C1221.3 279.8 1215.8 280.8 1212 282C1208.2 283.2 1205.5 285.7 1203 286.5C1200.5 287.3 1196.5 288.2 1197 287Z" fill="#c9c9c9"/><ellipse cx="1220.6" cy="287" rx="9.3" ry="9.6" fill="#4e4e4e" stroke="#161616" stroke-width="1.3"/><ellipse cx="1220.6" cy="291.5" rx="6" ry="4.2" fill="#7c7c7c"/><ellipse cx="1220.6" cy="286.8" rx="4.7" ry="5.2" fill="#1c1c1c"/><ellipse cx="1223" cy="282.5" rx="3" ry="3" fill="#fff"/><ellipse cx="1217.5" cy="292.5" rx="1.3" ry="1.3" fill="#eee"/><path d="M1195.2 288.2C1195.8 287.2 1197 283.7 1198.8 281.7C1200.6 279.6 1203.1 277.4 1205.8 275.8C1208.6 274.2 1212 273 1215.3 272C1218.5 271 1222 270.3 1225.5 269.7C1229.1 269.1 1233.4 268.7 1236.7 268.4C1240.1 268.1 1242.8 268.1 1245.8 268.1C1248.7 268.1 1253 268.2 1254.5 268.3L1254.5 268.7C1253.2 269.3 1249.1 271.1 1246.2 271.9C1243.4 272.6 1240.6 272.7 1237.3 273.2C1234 273.7 1229.9 274.2 1226.5 274.9C1223 275.5 1219.8 276.1 1216.7 277C1213.7 277.9 1210.8 279 1208.2 280.2C1205.6 281.4 1203.3 282.9 1201.2 284.3C1199.2 285.8 1196.7 288 1195.8 288.8Z" fill="#000"/><path d="M1252.2 270.5C1251.6 271.9 1250.2 276 1248.6 278.6C1247.1 281.3 1244.7 284.3 1242.7 286.6C1240.7 288.8 1237.7 291.2 1236.7 292.2L1236.3 291.8C1237.1 290.8 1239.6 287.9 1241.3 285.4C1243 283 1244.9 280 1246.4 277.4C1247.8 274.7 1249.2 270.8 1249.8 269.5Z" fill="#000"/><path d="M1203 293C1204.3 293.6 1208 295.7 1211 296.5C1214 297.3 1217.7 298 1221 298C1224.3 298 1228.3 297.4 1231 296.5C1233.7 295.6 1236 293.2 1237 292.5" stroke="#111" stroke-width="1" stroke-linecap="round" fill="none"/><path d="M1232 296.5C1232.4 296.9 1234.1 298.6 1234.5 299" stroke="#111" stroke-width="0.8" stroke-linecap="round" fill="none"/><path d="M1224 298C1224.1 298.4 1224.4 300.1 1224.5 300.5" stroke="#111" stroke-width="0.7" stroke-linecap="round" fill="none"/><path d="M1201 279C1203.2 277.8 1209.2 273.3 1214 271.5C1218.8 269.7 1223.7 268.8 1230 268C1236.3 267.2 1248.3 267 1252 266.8" stroke="#7a4a44" stroke-width="0.7" stroke-linecap="round" fill="none"/><path d="M1175.6 303C1175.1 303.9 1173.3 306.6 1172.5 308.5C1171.7 310.4 1170.7 312.9 1170.6 314.5C1170.5 316.1 1171.3 317.1 1172 318C1172.7 318.9 1174.2 319.8 1174.6 320.2" stroke="#444" stroke-width="0.8" stroke-linecap="round" fill="none"/><path d="M1167.6 333.5C1169 333.8 1173.3 334.9 1176 335.3C1178.7 335.7 1181.3 335.7 1184 335.6C1186.7 335.5 1189.3 335 1192 334.5C1194.7 334 1198.7 332.9 1200 332.6" stroke="#555" stroke-width="0.7" stroke-linecap="round" fill="none"/><path d="M1178.5 342C1180.2 342 1187.1 342 1188.8 342" stroke="#999" stroke-width="0.6" stroke-linecap="round" fill="none"/><path d="M1089.500 264.100C1091 252 1092.500 242 1094.700 233C1097 221 1100 210 1103.100 200.600C1106 190 1110 178 1114.700 168.200C1120 155 1126 146 1133.200 139.300C1141 131 1150 126 1158.600 123.100L1164.400 117.400C1170 113 1177 111 1184 110.400C1192 109 1200 108 1209.400 108.100C1220 108 1232 110 1241.800 112.700C1251 115.500 1261 120 1269.500 125.400C1279 131 1288 138 1294.900 145.100C1301 152 1307 160 1311.100 168.200C1315 176 1318.500 185 1320.300 193.600C1322.500 203 1324 212 1325 221.400C1329 225 1331 230 1330.700 235.200C1332 245 1332 253 1330.700 260.600C1329 269 1326.500 276 1322.700 281.400C1319 286 1315 289 1311.100 290.700C1305 294 1299 296.500 1293 297.500C1287 298 1282 297.500 1278 297C1278.500 308 1278 316 1277.600 325C1279 337 1282 348 1286 357.600L1294.700 390C1286 376 1280 364 1275.600 352C1273.500 344 1272 336 1271.200 328L1268.200 357.600C1266 346 1264.500 334 1263.800 322C1262 306 1261 292 1260 278L1256.500 257.600L1259.100 247.900C1251 244.500 1244 241 1237.200 237.500C1230 234 1224 232 1218.700 232.900L1212.400 250.300C1213 241 1214.500 232 1216.400 223.700C1212 218.500 1207 215 1202.500 212.600C1198 209.500 1194 208.500 1189.300 208.400C1183 208 1177 208.500 1172.500 209.500L1166.600 215.800L1162 209.500C1157 209.500 1153 209.800 1149.400 210.500C1144 212 1140 214.500 1136.700 217.900C1131 228 1127 240 1125.200 252.500L1122 271.500C1121 278 1121 284 1122 290.400C1122.500 297 1123 303 1124.100 309.300C1125.500 317 1127 324 1129.400 330.300L1135.100 353.400C1132 348 1129.500 343 1127.300 338.700C1124.500 331 1122.500 324 1121 317.700L1122 334.500L1124.100 363.900L1123.100 391.300C1121.500 386 1121.200 382 1121 378.600C1118.500 364 1116.800 350 1115.700 336.600C1113.500 320 1112 304 1111.500 288.300L1111.500 275.700L1107.300 307.200C1104 298 1102.500 291 1102 284C1100.500 273 1100 263 1100 252.500L1100 237.800C1096 246 1092.500 255 1089.500 264.100Z" fill="#393939" stroke="#0c0c0c" stroke-width="1.1" stroke-linejoin="round"/><path d="M1163.500 118.500C1166 108 1174 101 1186 98C1198 95.500 1210 97 1219.800 105.300C1210 101 1199 100.300 1189 103.500C1179 107 1171 112 1166.500 120Z" fill="#393939" stroke="#0c0c0c" stroke-width="0.9" stroke-linejoin="round"/><path d="M1170 119C1195 112 1230 113 1262 126C1285 137 1302 155 1312 180C1298 158 1280 143 1256 133C1230 123.500 1200 121 1170 128Z" fill="#2a2a2a"/><path d="M1168 136C1190 127 1222 130 1243 142C1262 153 1278 170 1292 196C1276 176 1260 163 1240 154C1218 145 1194 143 1172 150Z" fill="#2a2a2a"/><path d="M1170 162C1192 151 1218 152 1240 164C1262 177 1280 198 1296 226C1278 206 1262 193 1242 183C1220 173 1196 171 1174 178Z" fill="#2a2a2a"/><path d="M1172 190C1194 179 1216 182 1236 195C1256 209 1274 226 1300 238C1278 236 1258 228 1240 216C1220 204 1198 198 1176 204Z" fill="#2a2a2a"/><path d="M1196 204C1214 203 1232 214 1246 230C1262 246 1282 258 1306 258C1286 266 1264 262 1246 248C1232 236 1216 222 1200 214Z" fill="#2a2a2a"/><path d="M1252 232C1270 246 1296 252 1322 246C1318 256 1300 262 1280 258C1268 254 1258 246 1252 232Z" fill="#2a2a2a"/><path d="M1264 262C1282 272 1304 274 1326 264C1320 278 1304 286 1286 284C1276 282 1268 274 1264 262Z" fill="#2a2a2a"/><path d="M1160 125C1150 140 1146 160 1150 185C1140 165 1140 145 1150 128Z" fill="#2a2a2a"/><path d="M1150 160C1132 168 1118 185 1110 212C1120 194 1134 182 1152 178C1138 190 1128 205 1122 226C1132 212 1146 202 1160 200C1148 210 1140 222 1136 236L1142 214C1150 208 1158 206 1166 208L1166 196Z" fill="#2a2a2a"/><path d="M1106 216C1101 235 1099 255 1101 280C1104 262 1106 245 1112 228Z" fill="#2a2a2a"/><path d="M1114 236C1112 262 1113 290 1118 320C1118 292 1118 266 1122 244Z" fill="#2a2a2a"/><path d="M1222 132C1240 137 1256 148 1266 163C1275 172 1280 178 1284 184C1276 178 1270 176 1268 178C1266 186 1268 196 1270 204C1262 192 1256 180 1252 168C1246 154 1236 142 1222 132Z" fill="#5e5e5e"/><path d="M1240 128C1254 136 1264 146 1270 156C1262 150 1252 142 1240 128Z" fill="#5e5e5e"/><path d="M1140 135C1143 140 1146 146 1149.500 150C1144 147 1141 142 1140 135Z" fill="#5e5e5e"/><path d="M1112 206C1118 192 1130 178 1150 168C1134 180 1124 192 1116 208Z" fill="#5e5e5e"/><path d="M1222 188C1234 198 1242 212 1248 228C1252 236 1256 242 1260 246C1252 242 1246 234 1242 226C1236 212 1230 200 1222 188Z" fill="#5e5e5e"/><path d="M1166 215C1165.7 210.8 1164 199.2 1164 190C1164 180.8 1164.7 169.2 1166 160C1167.3 150.8 1169.7 142 1172 135C1174.3 128 1178.7 120.8 1180 118" stroke="#0c0c0c" stroke-width="0.7" stroke-linecap="round" fill="none"/><path d="M1166.6 215C1165.5 211.7 1161.4 202.5 1160 195C1158.6 187.5 1158 178.3 1158 170C1158 161.7 1159 153 1160 145C1161 137 1163.3 125.8 1164 122" stroke="#0c0c0c" stroke-width="0.7" stroke-linecap="round" fill="none"/><path d="M1166 214C1163.7 211.7 1157 202.3 1152 200C1147 197.7 1141 197.7 1136 200C1131 202.3 1126 208 1122 214C1118 220 1113.7 232.3 1112 236" stroke="#0c0c0c" stroke-width="0.7" stroke-linecap="round" fill="none"/><path d="M1164 208C1161.3 205 1153.7 192.7 1148 190C1142.3 187.3 1135.7 188.3 1130 192C1124.3 195.7 1118.3 204 1114 212C1109.7 220 1105.7 235.3 1104 240" stroke="#0c0c0c" stroke-width="0.7" stroke-linecap="round" fill="none"/><path d="M1168 214C1169.3 211 1171.7 200.3 1176 196C1180.3 191.7 1187.3 188.7 1194 188C1200.7 187.3 1209 188.7 1216 192C1223 195.3 1229.7 201.7 1236 208C1242.3 214.3 1247.7 223.7 1254 230C1260.3 236.3 1266.3 242.7 1274 246C1281.7 249.3 1295.7 249.3 1300 250" stroke="#0c0c0c" stroke-width="0.7" stroke-linecap="round" fill="none"/><path d="M1170 200C1171.7 196.3 1174.3 183.3 1180 178C1185.7 172.7 1195.3 168.3 1204 168C1212.7 167.7 1223.3 171.3 1232 176C1240.7 180.7 1248.7 188.3 1256 196C1263.3 203.7 1269 214.7 1276 222C1283 229.3 1289.7 237.3 1298 240C1306.3 242.7 1321.3 238.3 1326 238" stroke="#0c0c0c" stroke-width="0.7" stroke-linecap="round" fill="none"/><path d="M1172 176C1174.3 172.3 1179.3 159 1186 154C1192.7 149 1203 146 1212 146C1221 146 1231.3 149.7 1240 154C1248.7 158.3 1256.7 164.7 1264 172C1271.3 179.3 1278 189.3 1284 198C1290 206.7 1293.7 219.3 1300 224C1306.3 228.7 1318.3 225.7 1322 226" stroke="#0c0c0c" stroke-width="0.7" stroke-linecap="round" fill="none"/><path d="M1176 150C1178.7 147 1184.7 136 1192 132C1199.3 128 1210.3 125.7 1220 126C1229.7 126.3 1240.7 130 1250 134C1259.3 138 1268.3 143.3 1276 150C1283.7 156.7 1290.3 165.7 1296 174C1301.7 182.3 1306.3 192.7 1310 200C1313.7 207.3 1316.7 215 1318 218" stroke="#0c0c0c" stroke-width="0.7" stroke-linecap="round" fill="none"/><path d="M1244 238C1247 241 1255 251.3 1262 256C1269 260.7 1277.7 264.7 1286 266C1294.3 267.3 1304.7 266 1312 264C1319.3 262 1327 255.7 1330 254" stroke="#0c0c0c" stroke-width="0.7" stroke-linecap="round" fill="none"/><path d="M1252 254C1254.7 257 1261.7 267.7 1268 272C1274.3 276.3 1282.7 279.3 1290 280C1297.3 280.7 1306 278 1312 276C1318 274 1323.7 269.3 1326 268" stroke="#0c0c0c" stroke-width="0.7" stroke-linecap="round" fill="none"/><path d="M1262 276C1264.3 278 1270.7 285.3 1276 288C1281.3 290.7 1288 292 1294 292C1300 292 1309 288.7 1312 288" stroke="#0c0c0c" stroke-width="0.7" stroke-linecap="round" fill="none"/><path d="M1212 250C1212.7 248 1213.7 240.3 1216 238C1218.3 235.7 1221 235 1226 236C1231 237 1242.7 242.7 1246 244" stroke="#0c0c0c" stroke-width="0.7" stroke-linecap="round" fill="none"/><path d="M1106 250C1106.3 253.7 1107.8 263.7 1108 272C1108.2 280.3 1107.6 295.3 1107.5 300" stroke="#0c0c0c" stroke-width="0.7" stroke-linecap="round" fill="none"/><path d="M1117 262C1117 268.3 1116.5 287 1117 300C1117.5 313 1119.1 326.7 1120 340C1120.9 353.3 1122.1 373.3 1122.5 380" stroke="#0c0c0c" stroke-width="0.7" stroke-linecap="round" fill="none"/><path d="M1124 300C1124.5 303.7 1125.5 314.3 1127 322C1128.5 329.7 1132 342 1133 346" stroke="#0c0c0c" stroke-width="0.7" stroke-linecap="round" fill="none"/><path d="M1264 270C1264.3 275 1265.3 288.3 1266 300C1266.7 311.7 1267.7 333.3 1268 340" stroke="#0c0c0c" stroke-width="0.7" stroke-linecap="round" fill="none"/><path d="M1272 300C1272.5 305 1273 319.7 1275 330C1277 340.3 1282.5 356.7 1284 362" stroke="#0c0c0c" stroke-width="0.7" stroke-linecap="round" fill="none"/><path d="M1297 295C1302 294.500 1308 292.500 1312 290C1309 294 1304 296.500 1298 297Z" fill="#f4dcc4" stroke="#0c0c0c" stroke-width="0.5" stroke-linejoin="round"/>
</svg><div class="a" style="left:65px;top:700px;width:1470px;height:247px;background:#323232"></div>
<div class="a" style="left:65px;top:700px;width:1470px;height:1px;background:#1e1e1e"></div><div class="a" style="left:65px;top:701px;width:1470px;height:21px;background:#2c2c2c"></div>
<div class="a" style="left:65px;top:701px;width:70px;height:22px;background:#323232"></div>
<div class="a" style="left:135px;top:701px;width:1px;height:21px;background:#262626"></div>
<div class="a" style="left:197px;top:701px;width:1px;height:21px;background:#262626"></div>
<div class="t" style="left:74px;top:705.500px;font-size:12.500px;font-weight:bold;color:#f0f0f0;letter-spacing:-.2px;transform:scaleX(.96);transform-origin:0 0">Timeline</div>
<div class="t" style="left:144px;top:705.500px;font-size:12.500px;font-weight:bold;color:#707070;letter-spacing:-.2px;transform:scaleX(.98);transform-origin:0 0">Output</div>
<div class="a" style="left:1519px;top:707px;width:10px;height:1px;background:#c0c0c0;box-shadow:0 2px 0 #c0c0c0,0 4px 0 #c0c0c0,0 6px 0 #c0c0c0"></div>
<div class="a" style="left:65px;top:782px;width:1470px;height:2px;background:#282828"></div>
<div class="a" style="left:377px;top:723px;width:2px;height:202px;background:#2a2a2a"></div>
<div class="a" style="left:65px;top:833px;width:1470px;height:2px;background:#282828"></div>
<div class="a" style="left:65px;top:925px;width:1452px;height:1px;background:#282828"></div>
<div class="a" style="left:65px;top:896px;width:312px;height:1px;background:#2a2a2a"></div>
<div class="a" style="left:65px;top:835px;width:312px;height:29.500px;background:#335f90"></div>
<div class="a" style="left:65px;top:865px;width:311px;height:1px;background:#2a2a2a"></div>
<div class="t cj" style="left:125.500px;top:839.800px;font-size:15px;color:#f2f2f2;letter-spacing:.6px">万能头</div>
<div class="t cj" style="left:125.500px;top:871.500px;font-size:15px;color:#d8d8d8;letter-spacing:.6px">表情</div>
<div class="a" style="left:279px;top:841.500px;width:7.500px;height:15px;background:#a030d0"></div>
<div class="a" style="left:279px;top:872.500px;width:7.500px;height:15px;background:#ff8000"></div>
<div class="t" style="left:411.500px;top:745.200px;font-size:18.500px;color:#7c7c7c">25,00</div>
<div class="t" style="left:462.300px;top:744.900px;font-size:10.500px;color:#7c7c7c;transform:scaleX(.88);transform-origin:0 0">FPS</div>
<div class="t" style="left:511px;top:745.200px;font-size:18.500px;color:#f4f4f4">1</div>
<div class="t" style="left:526.800px;top:744.900px;font-size:10.500px;color:#c8c8c8;transform:scaleX(.92);transform-origin:0 0">F</div>
<svg width="1156" height="170" viewBox="379 782 1156 170" style="left:379px;top:782px" fill="none"><rect x="379" y="800.500" width="1156" height="1.200" fill="#282828"/><rect x="378.00" y="802" width="1.200" height="9.500" fill="#272727"/><rect x="394.24" y="802" width="1.200" height="9.500" fill="#272727"/><rect x="410.47" y="802" width="1.200" height="9.500" fill="#272727"/><rect x="426.70" y="802" width="1.200" height="9.500" fill="#272727"/><rect x="442.84" y="784" width="1.400" height="27.500" fill="#262626"/><rect x="459.18" y="802" width="1.200" height="9.500" fill="#272727"/><rect x="475.41" y="802" width="1.200" height="9.500" fill="#272727"/><rect x="491.64" y="802" width="1.200" height="9.500" fill="#272727"/><rect x="507.88" y="802" width="1.200" height="9.500" fill="#272727"/><rect x="524.01" y="784" width="1.400" height="27.500" fill="#262626"/><rect x="540.35" y="802" width="1.200" height="9.500" fill="#272727"/><rect x="556.58" y="802" width="1.200" height="9.500" fill="#272727"/><rect x="572.82" y="802" width="1.200" height="9.500" fill="#272727"/><rect x="589.05" y="802" width="1.200" height="9.500" fill="#272727"/><rect x="605.19" y="784" width="1.400" height="27.500" fill="#262626"/><rect x="621.52" y="802" width="1.200" height="9.500" fill="#272727"/><rect x="637.76" y="802" width="1.200" height="9.500" fill="#272727"/><rect x="654.00" y="802" width="1.200" height="9.500" fill="#272727"/><rect x="670.23" y="802" width="1.200" height="9.500" fill="#272727"/><rect x="686.37" y="784" width="1.400" height="27.500" fill="#262626"/><rect x="702.70" y="802" width="1.200" height="9.500" fill="#272727"/><rect x="718.94" y="802" width="1.200" height="9.500" fill="#272727"/><rect x="735.17" y="802" width="1.200" height="9.500" fill="#272727"/><rect x="751.40" y="802" width="1.200" height="9.500" fill="#272727"/><rect x="767.54" y="784" width="1.400" height="27.500" fill="#262626"/><rect x="783.88" y="802" width="1.200" height="9.500" fill="#272727"/><rect x="800.11" y="802" width="1.200" height="9.500" fill="#272727"/><rect x="816.34" y="802" width="1.200" height="9.500" fill="#272727"/><rect x="832.58" y="802" width="1.200" height="9.500" fill="#272727"/><rect x="848.71" y="784" width="1.400" height="27.500" fill="#262626"/><rect x="865.05" y="802" width="1.200" height="9.500" fill="#272727"/><rect x="881.28" y="802" width="1.200" height="9.500" fill="#272727"/><rect x="897.52" y="802" width="1.200" height="9.500" fill="#272727"/><rect x="913.75" y="802" width="1.200" height="9.500" fill="#272727"/><rect x="929.89" y="784" width="1.400" height="27.500" fill="#262626"/><rect x="946.23" y="802" width="1.200" height="9.500" fill="#272727"/><rect x="962.46" y="802" width="1.200" height="9.500" fill="#272727"/><rect x="978.69" y="802" width="1.200" height="9.500" fill="#272727"/><rect x="994.93" y="802" width="1.200" height="9.500" fill="#272727"/><rect x="1011.06" y="784" width="1.400" height="27.500" fill="#262626"/><rect x="1027.40" y="802" width="1.200" height="9.500" fill="#272727"/><rect x="1043.64" y="802" width="1.200" height="9.500" fill="#272727"/><rect x="1059.87" y="802" width="1.200" height="9.500" fill="#272727"/><rect x="1076.11" y="802" width="1.200" height="9.500" fill="#272727"/><rect x="1092.24" y="784" width="1.400" height="27.500" fill="#262626"/><rect x="1108.58" y="802" width="1.200" height="9.500" fill="#272727"/><rect x="1124.81" y="802" width="1.200" height="9.500" fill="#272727"/><rect x="1141.05" y="802" width="1.200" height="9.500" fill="#272727"/><rect x="1157.28" y="802" width="1.200" height="9.500" fill="#272727"/><rect x="1173.41" y="784" width="1.400" height="27.500" fill="#262626"/><rect x="1189.75" y="802" width="1.200" height="9.500" fill="#272727"/><rect x="1205.99" y="802" width="1.200" height="9.500" fill="#272727"/><rect x="1222.22" y="802" width="1.200" height="9.500" fill="#272727"/><rect x="1238.45" y="802" width="1.200" height="9.500" fill="#272727"/><rect x="1254.59" y="784" width="1.400" height="27.500" fill="#262626"/><rect x="1270.93" y="802" width="1.200" height="9.500" fill="#272727"/><rect x="1287.16" y="802" width="1.200" height="9.500" fill="#272727"/><rect x="1303.39" y="802" width="1.200" height="9.500" fill="#272727"/><rect x="1319.63" y="802" width="1.200" height="9.500" fill="#272727"/><rect x="1335.77" y="784" width="1.400" height="27.500" fill="#262626"/><rect x="1352.10" y="802" width="1.200" height="9.500" fill="#272727"/><rect x="1368.34" y="802" width="1.200" height="9.500" fill="#272727"/><rect x="1384.57" y="802" width="1.200" height="9.500" fill="#272727"/><rect x="1400.81" y="802" width="1.200" height="9.500" fill="#272727"/><rect x="1416.94" y="784" width="1.400" height="27.500" fill="#262626"/><rect x="1433.28" y="802" width="1.200" height="9.500" fill="#272727"/><rect x="1449.51" y="802" width="1.200" height="9.500" fill="#272727"/><rect x="1465.74" y="802" width="1.200" height="9.500" fill="#272727"/><rect x="1481.98" y="802" width="1.200" height="9.500" fill="#272727"/><rect x="1498.12" y="784" width="1.400" height="27.500" fill="#262626"/><rect x="1514.45" y="802" width="1.200" height="9.500" fill="#272727"/><rect x="865.65" y="835" width="649.40" height="30" fill="#2b2b2b"/><rect x="930.59" y="835" width="16.23" height="30" fill="#383838"/><rect x="1011.76" y="835" width="16.23" height="30" fill="#383838"/><rect x="1092.94" y="835" width="16.23" height="30" fill="#383838"/><rect x="1174.12" y="835" width="16.23" height="30" fill="#383838"/><rect x="1255.29" y="835" width="16.23" height="30" fill="#383838"/><rect x="1336.47" y="835" width="16.23" height="30" fill="#383838"/><rect x="1417.64" y="835" width="16.23" height="30" fill="#383838"/><rect x="1498.82" y="835" width="16.23" height="30" fill="#383838"/><rect x="865.05" y="835" width="1.200" height="30" fill="#242424"/><rect x="881.28" y="835" width="1.200" height="30" fill="#242424"/><rect x="897.52" y="835" width="1.200" height="30" fill="#242424"/><rect x="913.75" y="835" width="1.200" height="30" fill="#242424"/><rect x="929.99" y="835" width="1.200" height="30" fill="#242424"/><rect x="946.23" y="835" width="1.200" height="30" fill="#242424"/><rect x="962.46" y="835" width="1.200" height="30" fill="#242424"/><rect x="978.69" y="835" width="1.200" height="30" fill="#242424"/><rect x="994.93" y="835" width="1.200" height="30" fill="#242424"/><rect x="1011.16" y="835" width="1.200" height="30" fill="#242424"/><rect x="1027.40" y="835" width="1.200" height="30" fill="#242424"/><rect x="1043.64" y="835" width="1.200" height="30" fill="#242424"/><rect x="1059.87" y="835" width="1.200" height="30" fill="#242424"/><rect x="1076.11" y="835" width="1.200" height="30" fill="#242424"/><rect x="1092.34" y="835" width="1.200" height="30" fill="#242424"/><rect x="1108.58" y="835" width="1.200" height="30" fill="#242424"/><rect x="1124.81" y="835" width="1.200" height="30" fill="#242424"/><rect x="1141.05" y="835" width="1.200" height="30" fill="#242424"/><rect x="1157.28" y="835" width="1.200" height="30" fill="#242424"/><rect x="1173.52" y="835" width="1.200" height="30" fill="#242424"/><rect x="1189.75" y="835" width="1.200" height="30" fill="#242424"/><rect x="1205.99" y="835" width="1.200" height="30" fill="#242424"/><rect x="1222.22" y="835" width="1.200" height="30" fill="#242424"/><rect x="1238.45" y="835" width="1.200" height="30" fill="#242424"/><rect x="1254.69" y="835" width="1.200" height="30" fill="#242424"/><rect x="1270.93" y="835" width="1.200" height="30" fill="#242424"/><rect x="1287.16" y="835" width="1.200" height="30" fill="#242424"/><rect x="1303.39" y="835" width="1.200" height="30" fill="#242424"/><rect x="1319.63" y="835" width="1.200" height="30" fill="#242424"/><rect x="1335.87" y="835" width="1.200" height="30" fill="#242424"/><rect x="1352.10" y="835" width="1.200" height="30" fill="#242424"/><rect x="1368.34" y="835" width="1.200" height="30" fill="#242424"/><rect x="1384.57" y="835" width="1.200" height="30" fill="#242424"/><rect x="1400.81" y="835" width="1.200" height="30" fill="#242424"/><rect x="1417.04" y="835" width="1.200" height="30" fill="#242424"/><rect x="1433.28" y="835" width="1.200" height="30" fill="#242424"/><rect x="1449.51" y="835" width="1.200" height="30" fill="#242424"/><rect x="1465.74" y="835" width="1.200" height="30" fill="#242424"/><rect x="1481.98" y="835" width="1.200" height="30" fill="#242424"/><rect x="1498.22" y="835" width="1.200" height="30" fill="#242424"/><rect x="1514.45" y="835" width="1.200" height="30" fill="#242424"/><rect x="379" y="835" width="486.65" height="30" fill="#949494"/><rect x="394.34" y="835" width="1" height="2" fill="#3a3a3a"/><rect x="410.57" y="835" width="1" height="1.3" fill="#3a3a3a"/><rect x="426.81" y="835" width="1" height="2" fill="#3a3a3a"/><rect x="443.04" y="835" width="1" height="1.3" fill="#3a3a3a"/><rect x="459.28" y="835" width="1" height="2" fill="#3a3a3a"/><rect x="475.51" y="835" width="1" height="1.3" fill="#3a3a3a"/><rect x="491.75" y="835" width="1" height="2" fill="#3a3a3a"/><rect x="507.98" y="835" width="1" height="1.3" fill="#3a3a3a"/><rect x="524.22" y="835" width="1" height="2" fill="#3a3a3a"/><rect x="540.45" y="835" width="1" height="1.3" fill="#3a3a3a"/><rect x="556.68" y="835" width="1" height="2" fill="#3a3a3a"/><rect x="572.92" y="835" width="1" height="1.3" fill="#3a3a3a"/><rect x="589.15" y="835" width="1" height="2" fill="#3a3a3a"/><rect x="605.39" y="835" width="1" height="1.3" fill="#3a3a3a"/><rect x="621.62" y="835" width="1" height="2" fill="#3a3a3a"/><rect x="637.86" y="835" width="1" height="1.3" fill="#3a3a3a"/><rect x="654.10" y="835" width="1" height="2" fill="#3a3a3a"/><rect x="670.33" y="835" width="1" height="1.3" fill="#3a3a3a"/><rect x="686.57" y="835" width="1" height="2" fill="#3a3a3a"/><rect x="702.80" y="835" width="1" height="1.3" fill="#3a3a3a"/><rect x="719.04" y="835" width="1" height="2" fill="#3a3a3a"/><rect x="735.27" y="835" width="1" height="1.3" fill="#3a3a3a"/><rect x="751.50" y="835" width="1" height="2" fill="#3a3a3a"/><rect x="767.74" y="835" width="1" height="1.3" fill="#3a3a3a"/><rect x="783.98" y="835" width="1" height="2" fill="#3a3a3a"/><rect x="800.21" y="835" width="1" height="1.3" fill="#3a3a3a"/><rect x="816.44" y="835" width="1" height="2" fill="#3a3a3a"/><rect x="832.68" y="835" width="1" height="1.3" fill="#3a3a3a"/><rect x="848.91" y="835" width="1" height="2" fill="#3a3a3a"/><circle cx="386.200" cy="855.5" r="3.600" fill="#111"/><rect x="859.800" y="850.5" width="3.200" height="10" fill="#111"/><rect x="865.65" y="866" width="649.40" height="30" fill="#2b2b2b"/><rect x="930.59" y="866" width="16.23" height="30" fill="#383838"/><rect x="1011.76" y="866" width="16.23" height="30" fill="#383838"/><rect x="1092.94" y="866" width="16.23" height="30" fill="#383838"/><rect x="1174.12" y="866" width="16.23" height="30" fill="#383838"/><rect x="1255.29" y="866" width="16.23" height="30" fill="#383838"/><rect x="1336.47" y="866" width="16.23" height="30" fill="#383838"/><rect x="1417.64" y="866" width="16.23" height="30" fill="#383838"/><rect x="1498.82" y="866" width="16.23" height="30" fill="#383838"/><rect x="865.05" y="866" width="1.200" height="30" fill="#242424"/><rect x="881.28" y="866" width="1.200" height="30" fill="#242424"/><rect x="897.52" y="866" width="1.200" height="30" fill="#242424"/><rect x="913.75" y="866" width="1.200" height="30" fill="#242424"/><rect x="929.99" y="866" width="1.200" height="30" fill="#242424"/><rect x="946.23" y="866" width="1.200" height="30" fill="#242424"/><rect x="962.46" y="866" width="1.200" height="30" fill="#242424"/><rect x="978.69" y="866" width="1.200" height="30" fill="#242424"/><rect x="994.93" y="866" width="1.200" height="30" fill="#242424"/><rect x="1011.16" y="866" width="1.200" height="30" fill="#242424"/><rect x="1027.40" y="866" width="1.200" height="30" fill="#242424"/><rect x="1043.64" y="866" width="1.200" height="30" fill="#242424"/><rect x="1059.87" y="866" width="1.200" height="30" fill="#242424"/><rect x="1076.11" y="866" width="1.200" height="30" fill="#242424"/><rect x="1092.34" y="866" width="1.200" height="30" fill="#242424"/><rect x="1108.58" y="866" width="1.200" height="30" fill="#242424"/><rect x="1124.81" y="866" width="1.200" height="30" fill="#242424"/><rect x="1141.05" y="866" width="1.200" height="30" fill="#242424"/><rect x="1157.28" y="866" width="1.200" height="30" fill="#242424"/><rect x="1173.52" y="866" width="1.200" height="30" fill="#242424"/><rect x="1189.75" y="866" width="1.200" height="30" fill="#242424"/><rect x="1205.99" y="866" width="1.200" height="30" fill="#242424"/><rect x="1222.22" y="866" width="1.200" height="30" fill="#242424"/><rect x="1238.45" y="866" width="1.200" height="30" fill="#242424"/><rect x="1254.69" y="866" width="1.200" height="30" fill="#242424"/><rect x="1270.93" y="866" width="1.200" height="30" fill="#242424"/><rect x="1287.16" y="866" width="1.200" height="30" fill="#242424"/><rect x="1303.39" y="866" width="1.200" height="30" fill="#242424"/><rect x="1319.63" y="866" width="1.200" height="30" fill="#242424"/><rect x="1335.87" y="866" width="1.200" height="30" fill="#242424"/><rect x="1352.10" y="866" width="1.200" height="30" fill="#242424"/><rect x="1368.34" y="866" width="1.200" height="30" fill="#242424"/><rect x="1384.57" y="866" width="1.200" height="30" fill="#242424"/><rect x="1400.81" y="866" width="1.200" height="30" fill="#242424"/><rect x="1417.04" y="866" width="1.200" height="30" fill="#242424"/><rect x="1433.28" y="866" width="1.200" height="30" fill="#242424"/><rect x="1449.51" y="866" width="1.200" height="30" fill="#242424"/><rect x="1465.74" y="866" width="1.200" height="30" fill="#242424"/><rect x="1481.98" y="866" width="1.200" height="30" fill="#242424"/><rect x="1498.22" y="866" width="1.200" height="30" fill="#242424"/><rect x="1514.45" y="866" width="1.200" height="30" fill="#242424"/><rect x="379" y="866" width="486.65" height="30" fill="#949494"/><rect x="394.34" y="866" width="1" height="2" fill="#3a3a3a"/><rect x="410.57" y="866" width="1" height="1.3" fill="#3a3a3a"/><rect x="426.81" y="866" width="1" height="2" fill="#3a3a3a"/><rect x="443.04" y="866" width="1" height="1.3" fill="#3a3a3a"/><rect x="459.28" y="866" width="1" height="2" fill="#3a3a3a"/><rect x="475.51" y="866" width="1" height="1.3" fill="#3a3a3a"/><rect x="491.75" y="866" width="1" height="2" fill="#3a3a3a"/><rect x="507.98" y="866" width="1" height="1.3" fill="#3a3a3a"/><rect x="524.22" y="866" width="1" height="2" fill="#3a3a3a"/><rect x="540.45" y="866" width="1" height="1.3" fill="#3a3a3a"/><rect x="556.68" y="866" width="1" height="2" fill="#3a3a3a"/><rect x="572.92" y="866" width="1" height="1.3" fill="#3a3a3a"/><rect x="589.15" y="866" width="1" height="2" fill="#3a3a3a"/><rect x="605.39" y="866" width="1" height="1.3" fill="#3a3a3a"/><rect x="621.62" y="866" width="1" height="2" fill="#3a3a3a"/><rect x="637.86" y="866" width="1" height="1.3" fill="#3a3a3a"/><rect x="654.10" y="866" width="1" height="2" fill="#3a3a3a"/><rect x="670.33" y="866" width="1" height="1.3" fill="#3a3a3a"/><rect x="686.57" y="866" width="1" height="2" fill="#3a3a3a"/><rect x="702.80" y="866" width="1" height="1.3" fill="#3a3a3a"/><rect x="719.04" y="866" width="1" height="2" fill="#3a3a3a"/><rect x="735.27" y="866" width="1" height="1.3" fill="#3a3a3a"/><rect x="751.50" y="866" width="1" height="2" fill="#3a3a3a"/><rect x="767.74" y="866" width="1" height="1.3" fill="#3a3a3a"/><rect x="783.98" y="866" width="1" height="2" fill="#3a3a3a"/><rect x="800.21" y="866" width="1" height="1.3" fill="#3a3a3a"/><rect x="816.44" y="866" width="1" height="2" fill="#3a3a3a"/><rect x="832.68" y="866" width="1" height="1.3" fill="#3a3a3a"/><rect x="848.91" y="866" width="1" height="2" fill="#3a3a3a"/><circle cx="386.200" cy="886.5" r="3.600" fill="#111"/><rect x="859.800" y="881.5" width="3.200" height="10" fill="#111"/><rect x="379" y="864.600" width="1136.05" height="1.600" fill="#262626"/><rect x="379" y="895.600" width="1136.05" height="1.200" fill="#262626"/><path d="M379 783.200h15v44.700l-7.500 5.100-7.500-5.100z" fill="#3a7bd0"/><rect x="385.800" y="832" width="1.400" height="92" fill="#3f86dc"/><circle cx="386.200" cy="855.500" r="3.600" fill="#10161f"/><circle cx="386.200" cy="886.500" r="3.600" fill="#10161f"/><rect x="385.800" y="835" width="1.400" height="89" fill="#3f86dc" opacity=".9"/><rect x="380" y="933" width="130" height="5.500" rx="2.700" fill="#707070"/></svg>
<div class="t" style="left:445.1px;top:816px;font-size:12.500px;color:#bdbdbd;transform:scaleX(.96);transform-origin:0 0">5</div>
<div class="t" style="left:526.3px;top:816px;font-size:12.500px;color:#bdbdbd;transform:scaleX(.96);transform-origin:0 0">10</div>
<div class="t" style="left:607.5px;top:816px;font-size:12.500px;color:#bdbdbd;transform:scaleX(.96);transform-origin:0 0">15</div>
<div class="t" style="left:688.7px;top:816px;font-size:12.500px;color:#bdbdbd;transform:scaleX(.96);transform-origin:0 0">20</div>
<div class="t" style="left:769.8px;top:816px;font-size:12.500px;color:#bdbdbd;transform:scaleX(.96);transform-origin:0 0">25</div>
<div class="t" style="left:851.0px;top:816px;font-size:12.500px;color:#bdbdbd;transform:scaleX(.96);transform-origin:0 0">30</div>
<div class="t" style="left:932.2px;top:816px;font-size:12.500px;color:#bdbdbd;transform:scaleX(.96);transform-origin:0 0">35</div>
<div class="t" style="left:1013.4px;top:816px;font-size:12.500px;color:#bdbdbd;transform:scaleX(.96);transform-origin:0 0">40</div>
<div class="t" style="left:1094.5px;top:816px;font-size:12.500px;color:#bdbdbd;transform:scaleX(.96);transform-origin:0 0">45</div>
<div class="t" style="left:1175.7px;top:816px;font-size:12.500px;color:#bdbdbd;transform:scaleX(.96);transform-origin:0 0">50</div>
<div class="t" style="left:1256.9px;top:816px;font-size:12.500px;color:#bdbdbd;transform:scaleX(.96);transform-origin:0 0">55</div>
<div class="t" style="left:1338.1px;top:816px;font-size:12.500px;color:#bdbdbd;transform:scaleX(.96);transform-origin:0 0">60</div>
<div class="t" style="left:1419.2px;top:816px;font-size:12.500px;color:#bdbdbd;transform:scaleX(.96);transform-origin:0 0">65</div>
<div class="t" style="left:1500.4px;top:816px;font-size:12.500px;color:#bdbdbd;transform:scaleX(.96);transform-origin:0 0">70</div>
<div class="t" style="left:770.7px;top:787px;font-size:12.500px;font-style:italic;color:#b0b0b0">1s</div>
<div class="t" style="left:1176.6px;top:787px;font-size:12.500px;font-style:italic;color:#b0b0b0">2s</div>
<svg width="1470" height="247" viewBox="65 700 1470 247" style="left:65px;top:700px" fill="none"><path d="M100.500 743.300l9.700 4.700-9.700 4.700-9.700-4.700z" fill="#b2b2b2"/><path d="M90.800 751.8l2.800-1.300 6.900 3.300 6.900-3.300 2.800 1.300-9.700 4.700z" fill="#b2b2b2"/><path d="M90.800 757.0999999999999l2.800-1.300 6.900 3.300 6.900-3.300 2.800 1.300-9.700 4.700z" fill="#b2b2b2"/><rect x="254.500" y="746.500" width="13" height="13" rx="2" fill="#b2b2b2"/><path d="M268 752l6-4v10.500l-6-4z" fill="#b2b2b2"/><rect x="300.500" y="745" width="7" height="5" fill="#b2b2b2"/><rect x="295.500" y="756.500" width="6.500" height="4.500" fill="#b2b2b2"/><rect x="306" y="756.500" width="6.500" height="4.500" fill="#b2b2b2"/><path d="M304 750v3.500M298.700 756.500v-3h10.600v3" stroke="#b2b2b2" stroke-width="1.300"/><path d="M315 760.500v3h-3z" fill="#b2b2b2"/><path d="M335.500 745.500v16h17" stroke="#b2b2b2" stroke-width="1.300"/><path d="M337.500 759.500l11-8.500" stroke="#b2b2b2" stroke-width="1.400"/><path d="M343.500 749.500l6.500.3-1.300 6.200z" fill="#b2b2b2"/><rect x="92.500" y="800.500" width="15.500" height="15.500" stroke="#b2b2b2" stroke-width="1.300"/><path d="M100.200 804v8.500M96 808.200h8.500" stroke="#b2b2b2" stroke-width="1.200"/><path d="M130 801.500c0-.8.500-1.300 1.300-1.300h6.200l2.300 2.600h10.200c.8 0 1.300.5 1.300 1.300v11c0 .8-.5 1.300-1.300 1.300h-18.700c-.8 0-1.300-.5-1.300-1.300z" fill="#b2b2b2"/><path d="M170.200 802h19.400" stroke="#b2b2b2" stroke-width="2"/><path d="M175.800 801.500v-2c0-.8.500-1.300 1.300-1.300h5.600c.8 0 1.300.5 1.300 1.300v2" stroke="#b2b2b2" stroke-width="1.600"/><path d="M172.800 803.500l1.300 14h11.600l1.300-14" stroke="#b2b2b2" stroke-width="2.200" stroke-linejoin="round"/><path d="M176.700 805.500l.5 10M179.900 805.500v10M183.100 805.500l-.5 10" stroke="#b2b2b2" stroke-width="1.500"/><circle cx="254.500" cy="808.800" r="3.400" fill="#b2b2b2"/><rect x="277" y="799.500" width="9" height="18" stroke="#b2b2b2" stroke-width="2.200"/><path d="M305 808.500c2.600-4.600 6-6.600 9.600-6.600s7 2 9.600 6.600c-2.600 4.600-6 6.600-9.600 6.600s-7-2-9.600-6.600z" stroke="#b2b2b2" stroke-width="1.900"/><circle cx="314.600" cy="808.500" r="3.500" fill="#b2b2b2"/><path d="M305.300 798.700l18.700 19.700" stroke="#323232" stroke-width="3.400"/><path d="M305.300 798.700l18.700 19.700" stroke="#b2b2b2" stroke-width="1.500"/><rect x="338.700" y="806.800" width="15.700" height="12" rx="1" fill="#b2b2b2"/><path d="M342.200 807v-2.500c0-5.800 8.700-5.800 8.700 0v2.500" stroke="#b2b2b2" stroke-width="2.400"/><rect x="345.200" y="810.500" width="2.800" height="5" rx=".8" fill="#323232"/><path d="M101.800 842h14.800v15.500h-9.800l-5-5z" fill="#8a8e96" stroke="#cdcdcd" stroke-width="1.300" stroke-linejoin="round"/><path d="M101.800 852.5h5v5z" fill="#cdcdcd" opacity=".55"/><path d="M101.800 852.5h5v5" stroke="#cdcdcd" stroke-width="1.200" fill="none"/><path d="M101.800 873.3h14.800v15.500h-9.800l-5-5z" fill="#757575" stroke="#b4b4b4" stroke-width="1.300" stroke-linejoin="round"/><path d="M101.800 883.8h5v5z" fill="#b4b4b4" opacity=".55"/><path d="M101.800 883.8h5v5" stroke="#b4b4b4" stroke-width="1.200" fill="none"/><rect x="733.75" y="746.0" width="15.500" height="15" rx="1" fill="#b2b2b2"/><circle cx="741.500" cy="754.500" r="2.900" fill="#2a2a2a"/><rect x="775.75" y="746.0" width="15.500" height="15" rx="1" fill="#b2b2b2"/><circle cx="783.500" cy="754.500" r="2.800" fill="none" stroke="#2a2a2a" stroke-width="1.600"/><rect x="818.85" y="746.0" width="15.500" height="15" rx="1" fill="#b2b2b2"/><rect x="829" y="750.500" width="2.200" height="8" fill="#2a2a2a"/><rect x="860.75" y="746.0" width="15.500" height="15" rx="1" fill="#b2b2b2"/><circle cx="868.500" cy="754.800" r="3" fill="#2a2a2a"/><rect x="870.800" y="742" width="9.500" height="9.700" fill="#323232"/><path d="M872.300 750.800l3.300-8 3.300 8M873.500 748.200h4.200" stroke="#dcdcdc" stroke-width="1.500" stroke-linejoin="round"/><path d="M880 759.500v3h-3z" fill="#b0b0b0"/><rect x="903.800" y="746" width="15.500" height="15" rx="1" fill="#b2b2b2"/><circle cx="917.200" cy="759" r="7" fill="#323232"/><circle cx="917.200" cy="759" r="5.700" fill="#b2b2b2"/><rect x="913.800" y="758" width="6.800" height="2" fill="#323232"/><rect x="933.800" y="733" width="1.500" height="40" fill="#4a4a4a"/><rect x="1108.800" y="733" width="1.500" height="40" fill="#4a4a4a"/><circle cx="953.800" cy="753.800" r="6" fill="#8c8c8c"/><circle cx="962" cy="753.500" r="8.200" fill="#323232"/><circle cx="962" cy="753.500" r="7" fill="#c0c0c0"/><path d="M970 760.500v3h-3z" fill="#b0b0b0"/><rect x="992.500" y="751.800" width="11.300" height="10.400" fill="#4a4a4a"/><rect x="998.200" y="745" width="13.300" height="12" fill="#323232"/><rect x="999.200" y="746" width="11.300" height="10" fill="#4a4a4a"/><path d="M1001.500 751h6M1005 748.300l2.700 2.700-2.700 2.700" stroke="#323232" stroke-width="1.300"/><path d="M1043.400 747.500l6.300 6.300-6.300 6.300-6.300-6.300z" fill="#4a4a4a"/><path d="M1039.500 749.300l-4.400 4.500 4.400 4.500M1047.300 749.300l4.400 4.500-4.400 4.500" stroke="#4a4a4a" stroke-width="2.200"/><path d="M1040.500 753.800h5.500M1044 751.500l2.300 2.300-2.300 2.300" stroke="#323232" stroke-width="1.200"/><circle cx="1083.400" cy="757" r="5.400" fill="#4a4a4a"/><rect x="1082.800" y="745" width="13.700" height="12" fill="#323232"/><rect x="1083.800" y="746" width="11.700" height="10" fill="#4a4a4a"/><path d="M1086.500 751h6M1090 748.300l2.700 2.700-2.700 2.700" stroke="#323232" stroke-width="1.300"/><path d="M1124.300 753v6.200h18.200v-4.200" stroke="#c4c4c4" stroke-width="2.600" fill="none"/><path d="M1127.500 754.500v-1.500c0-2.800 1.800-4.200 4.600-4.200h2.500" stroke="#c4c4c4" stroke-width="2.600" fill="none"/><path d="M1133.800 744.800l9 5.400-9 5.600z" fill="#c4c4c4"/><path d="M1168.800 745.500v15l15.700-7.500z" fill="#c4c4c4"/><path d="M1328.100 760.200h21" stroke="#c4c4c4" stroke-width="2.700"/><path d="M1332 753.500c6-8.500 16-6 16.200 2" stroke="#c4c4c4" stroke-width="2.500" fill="none"/><path d="M1328.100 747v8.200h8.600z" fill="#c4c4c4"/><rect x="1363" y="751.700" width="31" height="2.900" fill="#c8c8c8"/><rect x="1416.300" y="752" width="58.500" height="2.300" fill="#484848"/><circle cx="1405" cy="753.100" r="6.300" stroke="#c8c8c8" stroke-width="2.400"/><path d="M1488.500 760l6.200-9.800h3.500l-6.200 9.800z" fill="#c4c4c4"/><path d="M1495 760l9.400-13.100 9.400 13.100z" fill="#c4c4c4"/></svg>
<div class="a" style="left:0;top:947px;width:1919px;height:5px;background:#262626"></div><div class="a" style="left:1538px;top:0;width:381px;height:947px;background:#323232"></div>
<div class="a" style="left:1538px;top:0;width:381px;height:14px;background:#2c2c2c"></div>
<div class="a" style="left:1538px;top:0;width:79px;height:15px;background:#323232"></div>
<div class="a" style="left:1617px;top:0;width:1px;height:14px;background:#262626"></div>
<div class="a" style="left:1677px;top:0;width:1px;height:14px;background:#262626"></div>
<div class="a" style="left:1773px;top:0;width:1px;height:14px;background:#262626"></div>
<div class="t" style="left:1547px;top:-3px;font-size:12.5px;color:#f4f4f4;font-weight:bold;transform-origin:0 0;transform:scaleX(0.975);letter-spacing:-.2px">Properties</div>
<div class="t" style="left:1626px;top:-3px;font-size:12.5px;color:#707070;font-weight:bold;transform-origin:0 0;transform:scaleX(0.94);letter-spacing:-.2px">Library</div>
<div class="t" style="left:1687px;top:-3px;font-size:12.5px;color:#707070;font-weight:bold;transform-origin:0 0;transform:scaleX(0.95);letter-spacing:-.2px">Frame Picker</div>
<div class="a" style="left:1902px;top:1px;width:11px;height:1px;background:#c0c0c0;box-shadow:0 2px 0 #c0c0c0,0 4px 0 #c0c0c0"></div>
<div class="a" style="left:1819px;top:28px;width:90px;height:39px;background:#474747;border-radius:5px"></div>
<div class="a" style="left:1636px;top:29px;width:1px;height:37px;background:#3f3f3f"></div><div class="a" style="left:1727px;top:29px;width:1px;height:37px;background:#3f3f3f"></div>
<div class="t" style="left:1545px;top:40.5px;font-size:17px;color:#737373;width:90px;text-align:center;transform-origin:50% 0;">Tool</div>
<div class="t" style="left:1636px;top:40.5px;font-size:17px;color:#737373;width:91px;text-align:center;transform-origin:50% 0;transform:scaleX(0.9);">Object</div>
<div class="t" style="left:1726.5px;top:40.5px;font-size:17px;color:#737373;width:92px;text-align:center;transform-origin:50% 0;transform:scaleX(0.905);">Frame</div>
<div class="t" style="left:1819px;top:40.5px;font-size:17px;color:#f4f4f4;width:90px;text-align:center;transform-origin:50% 0;transform:scaleX(0.915);">Doc</div>
<div class="a" style="left:1538px;top:75px;width:381px;height:2px;background:#262626"></div>
<div class="a" style="left:1538px;top:174px;width:381px;height:2px;background:#262626"></div>
<div class="a" style="left:1538px;top:236px;width:381px;height:3px;background:#262626"></div>
<div class="a" style="left:1538px;top:418px;width:381px;height:3px;background:#262626"></div>
<div class="a" style="left:1538px;top:751px;width:381px;height:3px;background:#262626"></div>
<div class="a" style="left:1538px;top:804px;width:381px;height:3px;background:#262626"></div>
<div class="a" style="left:1538px;top:856px;width:381px;height:3px;background:#262626"></div>
<div class="a" style="left:1573px;top:98px;width:21px;height:19px;border:1.500px solid #a8a8a8;box-sizing:border-box;border-radius:1px"></div>
<div class="t" style="left:1573px;width:21px;text-align:center;top:102px;font-size:11.500px;font-weight:bold;color:#b4b4b4;letter-spacing:-.5px">An</div>
<div class="t cj" style="left:1629px;top:100px;font-size:17px;color:#8c8c8c;letter-spacing:2.900px">古风男表情<span style="margin-left:-10.500px">【</span><span style="letter-spacing:-.5px">56</span><span style="margin-left:0">个</span><span style="margin-right:-11px">】</span><span style="letter-spacing:-.4px;margin-left:1px">.fla</span></div>
<div class="t" style="left:1629px;top:145px;font-size:16.5px;color:#8c8c8c;transform-origin:0 0;transform:scaleX(0.96);">Document</div>
<div class="a" style="left:1563px;top:187px;width:45px;height:39px;background:#3c3c3c;border:1px solid #4c4c4c;border-radius:5px;box-sizing:border-box"></div>
<div class="a" style="left:1623px;top:187px;width:40px;height:39px;background:#2a2a2a;border:1px solid #404040;border-radius:5px;box-sizing:border-box"></div>
<div class="a" style="left:1678px;top:187px;width:40px;height:39px;background:#3c3c3c;border:1px solid #4c4c4c;border-radius:5px;box-sizing:border-box"></div>
<div class="a" style="left:1733px;top:187px;width:40px;height:39px;background:#2a2a2a;border:1px solid #404040;border-radius:5px;box-sizing:border-box"></div>
<div class="t" style="left:1589px;top:257px;font-size:16px;color:#cdcdcd;font-weight:bold;transform-origin:0 0;transform:scaleX(0.965);letter-spacing:-.1px">Publish Settings</div>
<div class="t" style="left:1589px;top:440.5px;font-size:16px;color:#cdcdcd;font-weight:bold;transform-origin:0 0;transform:scaleX(0.977);letter-spacing:-.1px">Document Settings</div>
<div class="t" style="left:1589px;top:772.5px;font-size:16px;color:#cdcdcd;font-weight:bold;transform-origin:0 0;transform:scaleX(0.95);letter-spacing:-.1px">SWF History</div>
<div class="t" style="left:1589px;top:825.5px;font-size:16px;color:#cdcdcd;font-weight:bold;transform-origin:0 0;transform:scaleX(0.954);letter-spacing:-.1px">Accessibility</div>
<div class="t" style="left:1564px;top:311px;font-size:15.5px;color:#8c8c8c;transform-origin:0 0;transform:scaleX(0.918);">Profile</div>
<div class="a" style="left:1618px;top:299px;width:275px;height:40px;background:#2b2b2b;border:1px solid #444;border-radius:6px;box-sizing:border-box"></div>
<div class="t cj" style="left:1634px;top:310px;font-size:18px;color:#f0f0f0;letter-spacing:1.600px">默认文件</div>
<div class="a" style="left:1563px;top:360px;width:330px;height:39px;background:#2b2b2b;border:1px solid #434343;border-radius:6px;box-sizing:border-box"></div>
<div class="t" style="left:1563px;top:373px;font-size:16px;color:#e8e8e8;width:330px;text-align:center;transform-origin:50% 0;transform:scaleX(0.966);">More settings</div>
<div class="a" style="left:1563px;top:692px;width:330px;height:39px;background:#2b2b2b;border:1px solid #434343;border-radius:6px;box-sizing:border-box"></div>
<div class="t" style="left:1563px;top:705px;font-size:16px;color:#e8e8e8;width:330px;text-align:center;transform-origin:50% 0;transform:scaleX(0.966);">More settings</div>
<div class="a" style="left:1711px;top:485px;width:182px;height:39px;background:#2b2b2b;border:1px solid #434343;border-radius:6px;box-sizing:border-box"></div>
<div class="t" style="left:1711px;top:497.5px;font-size:16px;color:#e8e8e8;width:176px;text-align:center;transform-origin:50% 0;transform:scaleX(0.967);">Match contents</div>
<div class="t" style="left:1564px;top:494px;font-size:15px;color:#8c8c8c;transform-origin:0 0;transform:scaleX(0.82);">W</div>
<div class="t" style="left:1593px;top:493px;font-size:16.5px;color:#e8e8e8;transform-origin:0 0;transform:scaleX(0.97);">5500</div>
<div class="a" style="left:1593px;top:520px;width:54px;height:1px;background:#484848"></div>
<div class="t" style="left:1564px;top:554px;font-size:15px;color:#8c8c8c;transform-origin:0 0;transform:scaleX(0.9);">H</div>
<div class="t" style="left:1589px;top:553px;font-size:16.5px;color:#e8e8e8;transform-origin:0 0;transform:scaleX(0.97);">5000</div>
<div class="a" style="left:1590px;top:580px;width:53px;height:1px;background:#484848"></div>
<div class="t" style="left:1564px;top:599.5px;font-size:15px;color:#8c8c8c;transform-origin:0 0;transform:scaleX(0.85);">Stage</div>
<div class="a" style="left:1626px;top:592px;width:60px;height:29px;background:#fff;border-radius:4px"></div>
<div class="t" style="left:1564px;top:644.5px;font-size:15px;color:#8c8c8c;transform-origin:0 0;transform:scaleX(0.76);">FPS</div>
<div class="t" style="left:1625px;top:643px;font-size:16.5px;color:#e8e8e8;transform-origin:0 0;transform:scaleX(0.94);">25</div>
<div class="a" style="left:1626px;top:670px;width:54px;height:1px;background:#484848"></div>
<div class="a" style="left:1711px;top:556px;width:17px;height:17px;border:2px solid #8e8e8e;border-radius:2px;box-sizing:border-box"></div>
<div class="t" style="left:1742px;top:557.5px;font-size:16px;color:#e8e8e8;transform-origin:0 0;transform:scaleX(0.925);">Scale Content</div>
<div class="a" style="left:1711px;top:601px;width:17px;height:17px;border:2px solid #8e8e8e;border-radius:2px;box-sizing:border-box"></div>
<div class="t" style="left:1742px;top:602.5px;font-size:16px;color:#e8e8e8;transform-origin:0 0;transform:scaleX(0.979);">Apply to pasteboard</div>
<div class="a" style="left:1711px;top:646px;width:17px;height:17px;border:2px solid #8e8e8e;border-radius:2px;box-sizing:border-box"></div>
<div class="t" style="left:1742px;top:647.5px;font-size:16px;color:#e8e8e8;transform-origin:0 0;transform:scaleX(0.885);">Scale Spans</div>
<div class="a" style="left:1862px;top:817px;width:32px;height:17px;background:#b4b4b4;border-radius:9px"></div><div class="a" style="left:1879px;top:819.500px;width:12px;height:12px;background:#323232;border-radius:6px"></div>
<svg width="381" height="947" viewBox="1538 0 381 947" style="left:1538px;top:0" fill="none"><path d="M1563.500 261.5l5 5 5-5" stroke="#e8e8e8" stroke-width="2"/><path d="M1563.500 444.5l5 5 5-5" stroke="#e8e8e8" stroke-width="2"/><path d="M1563.500 773l5 5-5 5" stroke="#e8e8e8" stroke-width="2"/><path d="M1563.500 826l5 5-5 5" stroke="#e8e8e8" stroke-width="2"/><path d="M1865.500 316.500l5.500 5.500 5.500-5.500" stroke="#e8e8e8" stroke-width="2.200"/><path d="M1580.100 215.700V206a6.100 6.100 0 0 1 12.200 0V215.700" stroke="#f4f4f4" stroke-width="4.600"/><rect x="1577.800" y="211.300" width="4.600" height="4.400" fill="#a4a4a4"/><rect x="1590" y="211.300" width="4.600" height="4.400" fill="#a4a4a4"/><path d="M1637.700 196.200v21M1633 202h21M1644.500 198l-5.800 4 5.800 4" stroke="#d8d8d8" stroke-width="1.400"/><path d="M1647.500 209.400h2.400c5.200 0 5.200 6.600 0 6.600h-2.400" stroke="#d8d8d8" stroke-width="2"/><rect x="1643.300" y="208.400" width="3" height="2" fill="#d8d8d8"/><rect x="1643.300" y="215" width="3" height="2" fill="#d8d8d8"/><path d="M1688 216.500v-20h21v5.500h-15.500v14.500z" fill="#f4f4f4"/><rect x="1696.0" y="198" width="1.200" height="1.500" fill="#3c3c3c"/><rect x="1698.6" y="198" width="1.200" height="1.500" fill="#3c3c3c"/><rect x="1701.2" y="198" width="1.200" height="1.500" fill="#3c3c3c"/><rect x="1703.8" y="198" width="1.200" height="1.500" fill="#3c3c3c"/><rect x="1706.4" y="198" width="1.200" height="1.500" fill="#3c3c3c"/><rect x="1690" y="204.0" width="1.500" height="1.200" fill="#3c3c3c"/><rect x="1690" y="207.0" width="1.500" height="1.200" fill="#3c3c3c"/><rect x="1690" y="210.0" width="1.500" height="1.200" fill="#3c3c3c"/><rect x="1690" y="213.0" width="1.500" height="1.200" fill="#3c3c3c"/><rect x="1746" y="206.600" width="15.500" height="10.600" rx="1" fill="#b8b8b8"/><path d="M1749 207v-3.200c0-6.600 9.500-6.600 9.500 0v3.200" stroke="#b8b8b8" stroke-width="2.600"/><path d="M1752.400 209.500h2.800l-.5 5h-1.800z" fill="#2a2a2a"/><path d="M1648 503.500h13.500v15.500M1648 560.500h13.500v-15.500" stroke="#5c5c5c" stroke-width="1.200"/><rect x="1655.500" y="529" width="12.500" height="10" rx="1" fill="#8a8a8a"/><path d="M1658 529v-3c0-3.500 6.500-4.500 8-1.500" stroke="#8a8a8a" stroke-width="1.300"/><path d="M1661.700 531v5" stroke="#2a2a2a" stroke-width="1.800"/></svg>
</body></html>
